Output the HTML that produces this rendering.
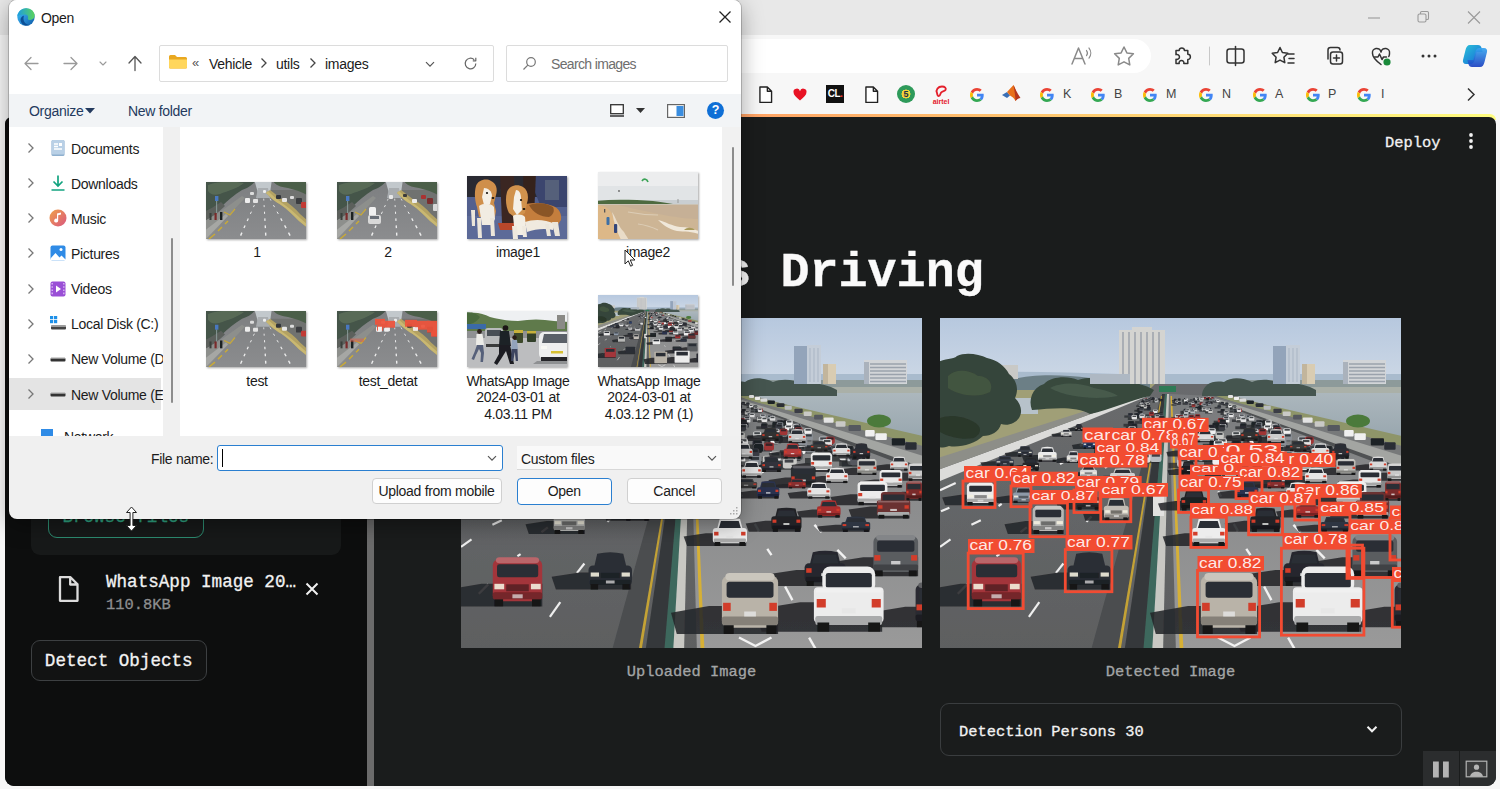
<!DOCTYPE html>
<html lang="en"><head><meta charset="utf-8"><title>Open</title><style>
*{box-sizing:border-box}
html,body{margin:0;padding:0}
body{width:1500px;height:789px;overflow:hidden;position:relative;background:#f7f7f7;font-family:"Liberation Sans",sans-serif}
.abs{position:absolute}
.mono{font-family:"Liberation Mono","DejaVu Sans Mono",monospace;-webkit-text-stroke:.3px currentColor}
svg{display:block;overflow:visible}

#tabstrip{left:0;top:0;width:1500px;height:35px;background:#e8e8e8}
#toolbar{left:0;top:35px;width:1500px;height:82px;background:#f7f7f7}
#addr{left:600px;top:39px;width:551px;height:34px;background:#fff;border-radius:17px}
.bk{font-size:12.5px;color:#444;top:87px}

#deco{left:4px;top:114px;width:1492px;height:6px;background:linear-gradient(90deg,#ff4b4b,#fffd80);border-radius:0 7px 0 0;clip-path:inset(0 0 0 8px)}
#app{left:4.5px;top:117px;width:1491px;height:669px;background:#1a1c1c;border-radius:7px 7px 9px 9px;overflow:hidden}
#side{left:0;top:0;width:362.500px;height:669px;background:#0d0e0e}
#divider{left:362.500px;top:0;width:6.500px;height:669px;background:#6b6b6b}
#upl{left:31px;top:380px;width:309.500px;height:174.500px;background:#171919;border-radius:9px}
#browse{left:48px;top:497px;width:155.500px;height:40.500px;border:1.500px solid #2c8c70;border-radius:9px;color:#2fa381;font-size:17.600px;line-height:38px;text-align:center}
.fname{left:106px;top:569.500px;font-size:17.600px;line-height:24px;color:#f2f2f2;white-space:pre}
.fsize{left:106px;top:595px;font-size:15.400px;line-height:20px;color:#8d8f90;white-space:pre}
#detect{left:31px;top:640px;width:175.500px;height:41px;border:1px solid #3d4042;border-radius:9px;background:#121313;color:#f2f2f2;font-size:17.600px;line-height:41px;text-align:center;white-space:pre}
#title{left:461px;top:244px;font-size:48.400px;font-weight:700;line-height:60px;color:#fafafa;white-space:pre}
.cap{top:662px;width:461px;text-align:center;font-size:15.400px;line-height:20px;color:#a3a5a6;white-space:pre}
#exp{left:940px;top:703px;width:461.500px;height:52.500px;border:1px solid #3a3d3f;border-radius:9px}
#exptxt{left:959px;top:721.500px;font-size:15.400px;line-height:20px;color:#f2f2f2;white-space:pre}
#deploy{left:1385px;top:132.500px;font-size:15.400px;line-height:20px;color:#f2f2f2}
.ctl{top:751px;height:35px;background:#2b2d2e}

#dlg{left:9px;top:0;width:732px;height:518.500px;background:#f0f0f0;border-radius:8px;overflow:hidden;box-shadow:0 0 0 1px rgba(0,0,0,.18),0 6px 22px rgba(0,0,0,.35)}
#dlg *{position:absolute}
#dlg{font-size:14px;letter-spacing:-.3px;color:#1b1b1b;line-height:16px}
#dtop{left:0;top:0;width:732px;height:94px;background:#fff}
#dbar{left:0;top:94px;width:732px;height:33px;background:#f2f4f6}
#dnav{left:0;top:127px;width:154px;height:308.500px;background:#fff;overflow:hidden}
#dfiles{left:171px;top:127px;width:542px;height:308.500px;background:#fff;overflow:hidden}
.box{background:#fff;border:1px solid #dcdcdc;border-radius:2px}
.t{white-space:pre;padding-top:1px}
.crumb{top:55px;color:#1b1b1b}
.sep{top:55px;color:#555;font-size:12px}
.navt{left:62px;white-space:pre;padding-top:1px}
.lab{width:130px;text-align:center;white-space:pre;line-height:16.300px;padding-top:1px}
.btn{height:26px;background:#fdfdfd;border:1px solid #d0d0d0;border-radius:4px;text-align:center;line-height:24.500px;white-space:pre}
.thumb{overflow:hidden;box-shadow:1px 1px 2px rgba(0,0,0,.35)}
</style></head><body>
<div id="tabstrip" class="abs"></div><div id="toolbar" class="abs"></div><div id="addr" class="abs"></div>
<svg class="abs" style="left:1360px;top:8px" width="130" height="20" viewBox="0 0 130 20" fill="none" stroke="#9a9a9a" stroke-width="1.1">
<path d="M8 10h12"/><rect x="58" y="6" width="8" height="8" rx="1.5"/><path d="M60.5 6v-1.2a1.3 1.3 0 0 1 1.3-1.3h5.4a1.3 1.3 0 0 1 1.3 1.3v5.4a1.3 1.3 0 0 1-1.3 1.3h-1.2"/><path d="M108 3.5l12 12M120 3.5l-12 12"/></svg>
<svg class="abs" style="left:1060px;top:40px" width="440" height="34" viewBox="1060 40 440 34" fill="none" stroke="#5a5a5a" stroke-width="1.5" stroke-linecap="round" stroke-linejoin="round">
<g stroke="#8a8a8a"><path d="M1072 64l6.500-16 6.500 16M1074.500 58.500h8"/><path d="M1086.500 50.500a4 4 0 0 1 0 5M1089 48a8 8 0 0 1 0 10" stroke-width="1.2"/></g>
<path stroke="#8a8a8a" d="M1124 47l2.900 5.900 6.500 0.900-4.700 4.600 1.100 6.500-5.800-3.100-5.800 3.100 1.100-6.500-4.700-4.600 6.500-0.900z"/>
<path stroke="#333" d="M1176 50.500h3.200a2.600 2.600 0 1 1 5.200 0h3.400v3.800a2.600 2.600 0 1 1 0 5.200v4h-4a2.400 2.400 0 1 0-4.600 0h-3.200v-4.300a2.500 2.500 0 1 0 0-4.600z"/>
<path stroke="#c8c8c8" stroke-width="1" d="M1209.500 47v18"/>
<g stroke="#333"><rect x="1227" y="49" width="17" height="14" rx="2.500"/><path d="M1235.500 46.500v19"/></g>
<g stroke="#333"><path d="M1280 47.500l2.400 5 5.400 0.800-3.900 3.900 0.900 5.500-4.800-2.600-4.800 2.600 0.900-5.500-3.900-3.900 5.400-0.800z"/><path d="M1288 54h6M1289 58.500h5M1288 63h6"/></g>
<g stroke="#333"><path d="M1328 59v-9a2.500 2.500 0 0 1 2.500-2.500h7a2.500 2.500 0 0 1 2.500 2.500"/><rect x="1330.500" y="52" width="12" height="12" rx="2.500"/><path d="M1336.500 55v6M1333.500 58h6"/></g>
<g stroke="#333"><path d="M1381 64.500c-6-4.500-8.500-7.500-8.500-11a4.300 4.300 0 0 1 8.500-1.500 4.300 4.300 0 0 1 8.500 1.500c0 1-.2 2-.7 3"/><path d="M1374.500 57h3.500l1.500-3 2.500 5.500 1.500-2.500h3"/></g>
<circle cx="1387" cy="62" r="3.600" fill="#1a8a3a" stroke="none"/>
<g fill="#333" stroke="none"><circle cx="1423" cy="56" r="1.500"/><circle cx="1429" cy="56" r="1.500"/><circle cx="1435" cy="56" r="1.500"/></g>
</svg>
<svg class="abs" style="left:1461px;top:42px" width="28" height="28" viewBox="0 0 28 28"><defs><linearGradient id="cp1" x1="0" y1="0" x2="1" y2="1"><stop offset="0" stop-color="#2bc4d8"/><stop offset="1" stop-color="#1565d8"/></linearGradient><linearGradient id="cp2" x1="0" y1="0" x2="0" y2="1"><stop offset="0" stop-color="#37a6f0"/><stop offset="1" stop-color="#1b3fc0"/></linearGradient></defs>
<path d="M9 3h8c2 0 3 1 3.600 3l1 4h-6l-2 8c-.6 2.500-2 4-4.500 4H5c-2.500 0-3.500-2-3-4l2.500-10C5.200 5 6.500 3 9 3z" fill="url(#cp1)"/>
<path d="M19 25h-8c-2 0-3-1-3.600-3l-1-4h6l2-8c.6-2.500 2-4 4.500-4H23c2.500 0 3.500 2 3 4l-2.500 10c-.7 3-2 5-4.500 5z" fill="url(#cp2)" opacity=".92"/></svg>
<svg class="abs" style="left:757.5px;top:86px" width="15.500" height="18" viewBox="0 0 14 17"><path d="M1.5 1h7l4 4v10.5h-11z M8.5 1v4h4" fill="#fff" stroke="#222" stroke-width="1.3" stroke-linejoin="round"/></svg><svg class="abs" style="left:863.5px;top:86px" width="15.500" height="18" viewBox="0 0 14 17"><path d="M1.5 1h7l4 4v10.5h-11z M8.5 1v4h4" fill="#fff" stroke="#222" stroke-width="1.3" stroke-linejoin="round"/></svg><svg class="abs" style="left:793px;top:88.500px" width="14" height="12" viewBox="0 0 16 14"><path d="M8 13.500C3 9.500 0.500 7 0.500 4.200A3.700 3.700 0 0 1 8 2.600a3.700 3.700 0 0 1 7.500 1.600C15.500 7 13 9.500 8 13.500z" fill="#e81224"/></svg><div class="abs" style="left:826px;top:85px;width:18px;height:18px;background:#111;color:#fff;font:700 10px/18px 'Liberation Sans',sans-serif;text-align:center;letter-spacing:-.5px">CL<span style="color:#e33">.</span></div><div class="abs" style="left:897px;top:85px;width:18px;height:18px;border-radius:9px;background:radial-gradient(circle,#f3d33b 0 35%,#2e9a5a 36% 100%);color:#234;font:700 9px/18px 'Liberation Sans',sans-serif;text-align:center">5</div><svg class="abs" style="left:931px;top:84px" width="20" height="21" viewBox="0 0 20 21"><path d="M6 9c-1.500-3 1-6.500 5-6.500 3 0 4.500 2 3.500 3.500-.8 1.200-2.800.8-4.200 2.300C9.200 9.500 9.500 11.500 8 12c-1 .3-1.600-.8-2-3z" fill="none" stroke="#e4202c" stroke-width="1.800"/><text x="10" y="19.500" font-family="Liberation Sans,sans-serif" font-size="7" font-weight="700" fill="#e4202c" text-anchor="middle">airtel</text></svg><svg class="abs" style="left:969.5px;top:87.5px" width="14" height="14" viewBox="0 0 48 48">
<path fill="#EA4335" d="M24 9.5c3.54 0 6.71 1.22 9.21 3.6l6.85-6.85C35.9 2.38 30.47 0 24 0 14.62 0 6.51 5.38 2.56 13.22l7.98 6.19C12.43 13.72 17.74 9.5 24 9.5z"/>
<path fill="#4285F4" d="M46.98 24.55c0-1.57-.15-3.09-.38-4.55H24v9.02h12.94c-.58 2.96-2.26 5.48-4.78 7.18l7.73 6c4.51-4.18 7.09-10.36 7.09-17.65z"/>
<path fill="#FBBC05" d="M10.53 28.59c-.48-1.45-.76-2.99-.76-4.59s.27-3.14.76-4.59l-7.98-6.19C.92 16.46 0 20.12 0 24c0 3.88.92 7.54 2.56 10.78l7.97-6.19z"/>
<path fill="#34A853" d="M24 48c6.48 0 11.93-2.13 15.89-5.81l-7.73-6c-2.15 1.45-4.92 2.3-8.16 2.3-6.26 0-11.57-4.22-13.47-9.91l-7.98 6.19C6.51 42.62 14.62 48 24 48z"/>
</svg><svg class="abs" style="left:1002px;top:85px" width="19" height="17" viewBox="0 0 19 17"><path d="M0 10l5-3 3 3.500L5 13z" fill="#3a6fb5"/><path d="M5 7L11.500 0c1.500 3 3 8 5 12l-3 4c-1-2-2.500-4-4-4.500L8 10.500z" fill="#e8701a"/><path d="M11.500 0c1.500 3 3.500 8 7 13-2 0-3.500 1.500-5 3 0-4-1-10-2-16z" fill="#b5361c"/></svg><svg class="abs" style="left:1039.5px;top:87.5px" width="14" height="14" viewBox="0 0 48 48">
<path fill="#EA4335" d="M24 9.5c3.54 0 6.71 1.22 9.21 3.6l6.85-6.85C35.9 2.38 30.47 0 24 0 14.62 0 6.51 5.38 2.56 13.22l7.98 6.19C12.43 13.72 17.74 9.5 24 9.5z"/>
<path fill="#4285F4" d="M46.98 24.55c0-1.57-.15-3.09-.38-4.55H24v9.02h12.94c-.58 2.96-2.26 5.48-4.78 7.18l7.73 6c4.51-4.18 7.09-10.36 7.09-17.65z"/>
<path fill="#FBBC05" d="M10.53 28.59c-.48-1.45-.76-2.99-.76-4.59s.27-3.14.76-4.59l-7.98-6.19C.92 16.46 0 20.12 0 24c0 3.88.92 7.54 2.56 10.78l7.97-6.19z"/>
<path fill="#34A853" d="M24 48c6.48 0 11.93-2.13 15.89-5.81l-7.73-6c-2.15 1.45-4.92 2.3-8.16 2.3-6.26 0-11.57-4.22-13.47-9.91l-7.98 6.19C6.51 42.62 14.62 48 24 48z"/>
</svg><div class="abs bk" style="left:1063px">K</div><svg class="abs" style="left:1090.5px;top:87.5px" width="14" height="14" viewBox="0 0 48 48">
<path fill="#EA4335" d="M24 9.5c3.54 0 6.71 1.22 9.21 3.6l6.85-6.85C35.9 2.38 30.47 0 24 0 14.62 0 6.51 5.38 2.56 13.22l7.98 6.19C12.43 13.72 17.74 9.5 24 9.5z"/>
<path fill="#4285F4" d="M46.98 24.55c0-1.57-.15-3.09-.38-4.55H24v9.02h12.94c-.58 2.96-2.26 5.48-4.78 7.18l7.73 6c4.51-4.18 7.09-10.36 7.09-17.65z"/>
<path fill="#FBBC05" d="M10.53 28.59c-.48-1.45-.76-2.99-.76-4.59s.27-3.14.76-4.59l-7.98-6.19C.92 16.46 0 20.12 0 24c0 3.88.92 7.54 2.56 10.78l7.97-6.19z"/>
<path fill="#34A853" d="M24 48c6.48 0 11.93-2.13 15.89-5.81l-7.73-6c-2.15 1.45-4.92 2.3-8.16 2.3-6.26 0-11.57-4.22-13.47-9.91l-7.98 6.19C6.51 42.62 14.62 48 24 48z"/>
</svg><div class="abs bk" style="left:1114px">B</div><svg class="abs" style="left:1142.5px;top:87.5px" width="14" height="14" viewBox="0 0 48 48">
<path fill="#EA4335" d="M24 9.5c3.54 0 6.71 1.22 9.21 3.6l6.85-6.85C35.9 2.38 30.47 0 24 0 14.62 0 6.51 5.38 2.56 13.22l7.98 6.19C12.43 13.72 17.74 9.5 24 9.5z"/>
<path fill="#4285F4" d="M46.98 24.55c0-1.57-.15-3.09-.38-4.55H24v9.02h12.94c-.58 2.96-2.26 5.48-4.78 7.18l7.73 6c4.51-4.18 7.09-10.36 7.09-17.65z"/>
<path fill="#FBBC05" d="M10.53 28.59c-.48-1.45-.76-2.99-.76-4.59s.27-3.14.76-4.59l-7.98-6.19C.92 16.46 0 20.12 0 24c0 3.88.92 7.54 2.56 10.78l7.97-6.19z"/>
<path fill="#34A853" d="M24 48c6.48 0 11.93-2.13 15.89-5.81l-7.73-6c-2.15 1.45-4.92 2.3-8.16 2.3-6.26 0-11.57-4.22-13.47-9.91l-7.98 6.19C6.51 42.62 14.62 48 24 48z"/>
</svg><div class="abs bk" style="left:1166px">M</div><svg class="abs" style="left:1198.5px;top:87.5px" width="14" height="14" viewBox="0 0 48 48">
<path fill="#EA4335" d="M24 9.5c3.54 0 6.71 1.22 9.21 3.6l6.85-6.85C35.9 2.38 30.47 0 24 0 14.62 0 6.51 5.38 2.56 13.22l7.98 6.19C12.43 13.72 17.74 9.5 24 9.5z"/>
<path fill="#4285F4" d="M46.98 24.55c0-1.57-.15-3.09-.38-4.55H24v9.02h12.94c-.58 2.96-2.26 5.48-4.78 7.18l7.73 6c4.51-4.18 7.09-10.36 7.09-17.65z"/>
<path fill="#FBBC05" d="M10.53 28.59c-.48-1.45-.76-2.99-.76-4.59s.27-3.14.76-4.59l-7.98-6.19C.92 16.46 0 20.12 0 24c0 3.88.92 7.54 2.56 10.78l7.97-6.19z"/>
<path fill="#34A853" d="M24 48c6.48 0 11.93-2.13 15.89-5.81l-7.73-6c-2.15 1.45-4.92 2.3-8.16 2.3-6.26 0-11.57-4.22-13.47-9.91l-7.98 6.19C6.51 42.62 14.62 48 24 48z"/>
</svg><div class="abs bk" style="left:1222px">N</div><svg class="abs" style="left:1252.5px;top:87.5px" width="14" height="14" viewBox="0 0 48 48">
<path fill="#EA4335" d="M24 9.5c3.54 0 6.71 1.22 9.21 3.6l6.85-6.85C35.9 2.38 30.47 0 24 0 14.62 0 6.51 5.38 2.56 13.22l7.98 6.19C12.43 13.72 17.74 9.5 24 9.5z"/>
<path fill="#4285F4" d="M46.98 24.55c0-1.57-.15-3.09-.38-4.55H24v9.02h12.94c-.58 2.96-2.26 5.48-4.78 7.18l7.73 6c4.51-4.18 7.09-10.36 7.09-17.65z"/>
<path fill="#FBBC05" d="M10.53 28.59c-.48-1.45-.76-2.99-.76-4.59s.27-3.14.76-4.59l-7.98-6.19C.92 16.46 0 20.12 0 24c0 3.88.92 7.54 2.56 10.78l7.97-6.19z"/>
<path fill="#34A853" d="M24 48c6.48 0 11.93-2.13 15.89-5.81l-7.73-6c-2.15 1.45-4.92 2.3-8.16 2.3-6.26 0-11.57-4.22-13.47-9.91l-7.98 6.19C6.51 42.62 14.62 48 24 48z"/>
</svg><div class="abs bk" style="left:1275px">A</div><svg class="abs" style="left:1305.5px;top:87.5px" width="14" height="14" viewBox="0 0 48 48">
<path fill="#EA4335" d="M24 9.5c3.54 0 6.71 1.22 9.21 3.6l6.85-6.85C35.9 2.38 30.47 0 24 0 14.62 0 6.51 5.38 2.56 13.22l7.98 6.19C12.43 13.72 17.74 9.5 24 9.5z"/>
<path fill="#4285F4" d="M46.98 24.55c0-1.57-.15-3.09-.38-4.55H24v9.02h12.94c-.58 2.96-2.26 5.48-4.78 7.18l7.73 6c4.51-4.18 7.09-10.36 7.09-17.65z"/>
<path fill="#FBBC05" d="M10.53 28.59c-.48-1.45-.76-2.99-.76-4.59s.27-3.14.76-4.59l-7.98-6.19C.92 16.46 0 20.12 0 24c0 3.88.92 7.54 2.56 10.78l7.97-6.19z"/>
<path fill="#34A853" d="M24 48c6.48 0 11.93-2.13 15.89-5.81l-7.73-6c-2.15 1.45-4.92 2.3-8.16 2.3-6.26 0-11.57-4.22-13.47-9.91l-7.98 6.19C6.51 42.62 14.62 48 24 48z"/>
</svg><div class="abs bk" style="left:1328px">P</div><svg class="abs" style="left:1356.5px;top:87.5px" width="14" height="14" viewBox="0 0 48 48">
<path fill="#EA4335" d="M24 9.5c3.54 0 6.71 1.22 9.21 3.6l6.85-6.85C35.9 2.38 30.47 0 24 0 14.62 0 6.51 5.38 2.56 13.22l7.98 6.19C12.43 13.72 17.74 9.5 24 9.5z"/>
<path fill="#4285F4" d="M46.98 24.55c0-1.57-.15-3.09-.38-4.55H24v9.02h12.94c-.58 2.96-2.26 5.48-4.78 7.18l7.73 6c4.51-4.18 7.09-10.36 7.09-17.65z"/>
<path fill="#FBBC05" d="M10.53 28.59c-.48-1.45-.76-2.99-.76-4.59s.27-3.14.76-4.59l-7.98-6.19C.92 16.46 0 20.12 0 24c0 3.88.92 7.54 2.56 10.78l7.97-6.19z"/>
<path fill="#34A853" d="M24 48c6.48 0 11.93-2.13 15.89-5.81l-7.73-6c-2.15 1.45-4.92 2.3-8.16 2.3-6.26 0-11.57-4.22-13.47-9.91l-7.98 6.19C6.51 42.62 14.62 48 24 48z"/>
</svg><div class="abs bk" style="left:1381px">I</div><svg class="abs" style="left:1466px;top:87px" width="10" height="15" viewBox="0 0 10 15"><path d="M2 1.500l6 6-6 6" fill="none" stroke="#333" stroke-width="1.500"/></svg>
<div id="deco" class="abs"></div>
<div id="app" class="abs"><div id="side" class="abs"></div><div id="divider" class="abs"></div></div>
<div id="upl" class="abs"></div><div id="browse" class="abs mono">Browse files</div>
<svg class="abs" style="left:57px;top:574.500px" width="23" height="28" viewBox="0 0 23 28"><path d="M3 2.200h10.500l7 7V25.800H3z M13.200 2.500v7h7" fill="none" stroke="#dcdcdc" stroke-width="2.300" stroke-linejoin="round"/></svg>
<div class="abs mono fname">WhatsApp Image 20…</div><div class="abs mono fsize">110.8KB</div>
<svg class="abs" style="left:305px;top:582px" width="14" height="14" viewBox="0 0 14 14"><path d="M1.500 1.500l11 11M12.500 1.500l-11 11" stroke="#f0f0f0" stroke-width="2" fill="none"/></svg>
<div id="detect" class="abs mono">Detect Objects</div>
<div id="title" class="abs mono">Autonomous Driving</div>
<div id="deploy" class="abs mono">Deploy</div><svg class="abs" style="left:1468px;top:132px" width="6" height="18" viewBox="0 0 6 18" fill="#f2f2f2"><circle cx="3" cy="3" r="1.900"/><circle cx="3" cy="9" r="1.900"/><circle cx="3" cy="15" r="1.900"/></svg>
<div class="abs" style="left:461px;top:318px;width:461px;height:330px;overflow:hidden"><svg width="461" height="330" viewBox="0 0 461 330" preserveAspectRatio="none"><defs><linearGradient id="h1s" x1="0" y1="0" x2="0" y2="1"><stop offset="0" stop-color="#b5c7de"/><stop offset="1" stop-color="#d4dde8"/></linearGradient><linearGradient id="h1r" x1="0" y1="0" x2="0" y2="1"><stop offset="0" stop-color="#696b6d"/><stop offset="1" stop-color="#5d5f60"/></linearGradient><linearGradient id="h1q" x1="0" y1="0" x2="0" y2="1"><stop offset="0" stop-color="#77797b"/><stop offset=".4" stop-color="#8b8c8d"/><stop offset="1" stop-color="#9a9a9a"/></linearGradient><linearGradient id="h1w" x1="0" y1="0" x2="0" y2="1"><stop offset="0" stop-color="#adb8be"/><stop offset="1" stop-color="#97a5ad"/></linearGradient><filter id="h1b" x="-2%" y="-2%" width="104%" height="104%"><feGaussianBlur stdDeviation="0.7"/></filter><filter id="h1b2" x="-5%" y="-5%" width="110%" height="110%"><feGaussianBlur stdDeviation="2.2"/></filter></defs><g filter="url(#h1b)"><rect x="-5" y="-5" width="471" height="90" fill="url(#h1s)"/><path d="M-5 56C60 52 120 54 180 56H466V70H-5z" fill="#a9bbcd"/><rect x="-5" y="66" width="471" height="270" fill="url(#h1r)"/><path d="M229 76L272 78L466 150V336H236z" fill="url(#h1q)"/><path d="M290 72H466V124L300 80z" fill="url(#h1w)"/><path d="M280 76L466 119V142L276 78z" fill="#8e9569"/><path d="M272 78L466 129V152L270 79z" fill="#77797a"/><path d="M268 78L466 139V153L268 80z" fill="#a3a5a2"/><path d="M268 80L466 151V156L268 81z" fill="#4f5152"/><path d="M-5 66H215L205 76L-5 152z" fill="#a09f77"/><path d="M70 80h28v16H72z" fill="#b7c2ca"/><path d="M-5 153L205 76L208 78L-5 165z" fill="#dcdcda"/><path d="M-5 141L205 74L205 76L-5 153z" fill="#8d8e88"/><path d="M70 62c20-6 50-6 80-2 20-2 40 0 60 4v8H70z" fill="#6c7f86"/><path d="M300 62h166v10h-166z" fill="#8d9a9a"/><path d="M330 69h136v6h-136z" fill="#aab0a8"/><path d="M262 76c2-10 10-14 22-12 8-6 20-4 28 0 10-4 22-2 30 2 10-2 24 0 34 6v6H262z" fill="#44554f"/><path d="M92 92c-4-10 0-22 12-26 8-8 24-8 34-4 12-4 26-2 36 2 14-2 30 2 40 8l-4 6c-20 4-40 14-60 18-14-8-36-6-58-4z" fill="#37483d"/><path d="M110 70c10-6 30-6 44 0 10 2 18 4 24 8-20 4-50 2-68-8z" fill="#465a4b"/><rect x="56" y="47" width="22" height="14" fill="#c9c9c6"/><path d="M-5 46c8-6 18-4 22-8 8-4 22-2 30 2 10 2 18 8 22 16 8 6 10 16 6 24 6 6 8 14 4 20-4 6-12 8-18 6-2 8-10 12-18 12-8 8-24 12-34 10-6 2-10 2-14 0z" fill="#36453a"/><path d="M8 58c8-8 22-6 30 0 10 0 16 8 12 16-12 6-30 4-42-4z" fill="#43553f"/><path d="M0 100c10-4 24-2 34 4 8 4 8 12 0 16-10 2-24 0-34-6z" fill="#2a372c"/><rect x="179" y="12" width="46" height="54" fill="#d4d4d1"/><path d="M183 14v52M189 14v52M195 14v52M201 14v52M207 14v52M213 14v52M219 14v52" stroke="#a6abb2" stroke-width="1.800"/><rect x="192" y="9" width="20" height="5" fill="#d4d4d1"/><rect x="333" y="28" width="27" height="38" fill="#93a4ba"/><rect x="346" y="27" width="14" height="39" fill="#c4cdd8"/><path d="M349 30v34M353 30v34M357 30v34" stroke="#a9b5c4" stroke-width="1"/><rect x="362" y="46" width="13" height="20" fill="#d9ccb2"/><rect x="362" y="46" width="5" height="20" fill="#c2b59c"/><rect x="403" y="42" width="43" height="24" fill="#d2d5d8"/><rect x="403" y="44" width="5" height="22" fill="#aab2bc"/><path d="M409 46h36M409 49.500h36M409 53h36M409 56.500h36M409 60h36M409 63.500h36" stroke="#9aa2ac" stroke-width="1.500"/><rect x="150" y="56" width="40" height="10" fill="#aeb8c3"/><path d="M221 78L150 336H180L221.500 78z" fill="#4b4d4f"/><path d="M222 76L184 336H204L225 76z" fill="#36383a"/><path d="M225 76L203 336H213L227 76z" fill="#3d675d"/><path d="M227 76L212 336H223L229 76z" fill="#c8c8c3"/><path d="M230.500 78L239.800 336H243.600L232 78z" fill="#d6b036"/><path d="M221 78L177 336H180L222 78z" fill="#c4a236"/><rect x="219" y="68" width="17" height="6" fill="#2f7a55"/><rect x="213" y="178" width="11" height="20" fill="#e2e2e0"/><path d="M0.0 172.3L15.7 165.0" stroke="#eeeeee" stroke-width="2.200"/><path d="M1.0 193.2L9.4 189.7" stroke="#eeeeee" stroke-width="2.200"/><path d="M31.4 206.8L40.8 202.2" stroke="#eeeeee" stroke-width="2.200"/><path d="M0.0 228.8L10.5 221.4" stroke="#eeeeee" stroke-width="2.200"/><path d="M17.8 275.8L27.2 266.4" stroke="#eeeeee" stroke-width="2.200"/><path d="M56.4 238.2L59.6 236.1" stroke="#eeeeee" stroke-width="2.200"/><path d="M80.5 214.1L86.8 209.3" stroke="#eeeeee" stroke-width="2.200"/><path d="M116.0 254.9L123.4 245.5" stroke="#eeeeee" stroke-width="2.200"/><path d="M88.9 298.8L99.3 284.2" stroke="#eeeeee" stroke-width="2.200"/><path d="M58.5 188.0L61.7 185.9" stroke="#eeeeee" stroke-width="2.200"/><path d="M146.4 203.7L151.6 198.5" stroke="#eeeeee" stroke-width="2.200"/><path d="M62 152L67 149" stroke="#eeeeee" stroke-width="2.200"/><path d="M95 150L99 147.5" stroke="#eeeeee" stroke-width="2.200"/><path d="M120 146L124 143.5" stroke="#eeeeee" stroke-width="2.200"/><path d="M150 140L153 138" stroke="#eeeeee" stroke-width="2.200"/><path d="M30 160L37 156.5" stroke="#eeeeee" stroke-width="2.200"/><path d="M165 150L168 147.5" stroke="#eeeeee" stroke-width="2.200"/><path d="M188 120L190 118" stroke="#eeeeee" stroke-width="2.200"/><path d="M140 128L143 126" stroke="#eeeeee" stroke-width="2.200"/><path d="M278.1 173.4L281.2 178.6" stroke="#f2f2f2" stroke-width="2.400"/><path d="M293.8 205.8L297.9 213.1" stroke="#f2f2f2" stroke-width="2.400"/><path d="M353.4 206.8L360.7 214.1" stroke="#f2f2f2" stroke-width="2.400"/><path d="M306.3 230.9L310.5 237.1" stroke="#f2f2f2" stroke-width="2.400"/><path d="M376.4 231.9L384.7 240.3" stroke="#f2f2f2" stroke-width="2.400"/><path d="M324.1 268.5L331.4 282.1" stroke="#f2f2f2" stroke-width="2.400"/><path d="M348.1 319.7L355.4 332.3" stroke="#f2f2f2" stroke-width="2.400"/><path d="M263 150L264.5 155" stroke="#f2f2f2" stroke-width="2.400"/><path d="M300 150L302 155" stroke="#f2f2f2" stroke-width="2.400"/><path d="M340 158L343 164" stroke="#f2f2f2" stroke-width="2.400"/><path d="M252 130L253 134" stroke="#f2f2f2" stroke-width="2.400"/><path d="M280 128L281.5 132" stroke="#f2f2f2" stroke-width="2.400"/><path d="M278 319.500l16.500 8.500 16-8.500" fill="none" stroke="#f2f2f2" stroke-width="2.400"/><rect x="269.5" y="80.1" width="3.8" height="1.1" fill="#26282b" opacity=".75"/><rect x="271.2" y="79" width="2.5" height="2" rx="0.5" fill="#a03434"/><rect x="271.6" y="79.2" width="1.8" height="0.6" fill="#1d2025" opacity=".8"/><rect x="265.8" y="80.1" width="3.8" height="1.1" fill="#26282b" opacity=".75"/><rect x="267.5" y="79" width="2.5" height="2" rx="0.5" fill="#a03434"/><rect x="267.9" y="79.2" width="1.8" height="0.6" fill="#1d2025" opacity=".8"/><rect x="208.2" y="80.2" width="3.8" height="1.1" fill="#26282b" opacity=".75"/><rect x="209.9" y="79" width="2.5" height="2" rx="0.5" fill="#55585e"/><rect x="210.3" y="79.2" width="1.8" height="0.6" fill="#1d2025" opacity=".8"/><rect x="262" y="80.2" width="3.8" height="1.1" fill="#26282b" opacity=".75"/><rect x="263.7" y="79" width="2.5" height="2" rx="0.5" fill="#a03434"/><rect x="264.1" y="79.2" width="1.8" height="0.6" fill="#1d2025" opacity=".8"/><rect x="209.9" y="80.3" width="3.8" height="1.1" fill="#26282b" opacity=".75"/><rect x="211.7" y="79.2" width="2.5" height="2" rx="0.5" fill="#b8bcc0"/><rect x="212.1" y="79.4" width="1.8" height="0.6" fill="#1d2025" opacity=".8"/><rect x="258.2" y="80.5" width="3.8" height="1.1" fill="#26282b" opacity=".75"/><rect x="260" y="79.3" width="2.5" height="2" rx="0.5" fill="#2a2c30"/><rect x="260.3" y="79.5" width="1.8" height="0.6" fill="#1d2025" opacity=".8"/><rect x="254" y="80.5" width="3.8" height="1.1" fill="#26282b" opacity=".75"/><rect x="255.8" y="79.3" width="2.6" height="2" rx="0.5" fill="#1f2226"/><rect x="256.1" y="79.5" width="1.8" height="0.6" fill="#1d2025" opacity=".8"/><rect x="212.6" y="80.6" width="3.8" height="1.2" fill="#26282b" opacity=".75"/><rect x="214.4" y="79.4" width="2.6" height="2.1" rx="0.5" fill="#c9c9c6"/><rect x="214.8" y="79.6" width="1.8" height="0.6" fill="#1d2025" opacity=".8"/><rect x="259.5" y="80.7" width="3.9" height="1.2" fill="#26282b" opacity=".75"/><rect x="261.3" y="79.5" width="2.6" height="2.1" rx="0.5" fill="#f0f0f0"/><rect x="261.7" y="79.7" width="1.8" height="0.6" fill="#1d2025" opacity=".8"/><rect x="214" y="80.7" width="3.9" height="1.2" fill="#26282b" opacity=".75"/><rect x="215.8" y="79.5" width="2.6" height="2.1" rx="0.5" fill="#8a8f96"/><rect x="216.2" y="79.7" width="1.8" height="0.6" fill="#1d2025" opacity=".8"/><rect x="205.7" y="80.7" width="3.9" height="1.2" fill="#26282b" opacity=".75"/><rect x="207.5" y="79.5" width="2.6" height="2.1" rx="0.5" fill="#c9c9c6"/><rect x="207.9" y="79.7" width="1.8" height="0.6" fill="#1d2025" opacity=".8"/><rect x="253.2" y="80.7" width="3.9" height="1.2" fill="#26282b" opacity=".75"/><rect x="255" y="79.6" width="2.6" height="2.1" rx="0.5" fill="#f0f0f0"/><rect x="255.4" y="79.8" width="1.8" height="0.6" fill="#1d2025" opacity=".8"/><rect x="209.9" y="80.8" width="3.9" height="1.2" fill="#26282b" opacity=".75"/><rect x="211.7" y="79.6" width="2.6" height="2.1" rx="0.5" fill="#2a2c30"/><rect x="212.1" y="79.8" width="1.8" height="0.6" fill="#1d2025" opacity=".8"/><rect x="210.2" y="80.8" width="3.9" height="1.2" fill="#26282b" opacity=".75"/><rect x="212" y="79.6" width="2.6" height="2.1" rx="0.5" fill="#2b2e36"/><rect x="212.4" y="79.8" width="1.8" height="0.6" fill="#1d2025" opacity=".8"/><rect x="257.1" y="80.8" width="3.9" height="1.2" fill="#26282b" opacity=".75"/><rect x="258.9" y="79.6" width="2.6" height="2.1" rx="0.5" fill="#e4e4e4"/><rect x="259.3" y="79.8" width="1.8" height="0.7" fill="#1d2025" opacity=".8"/><rect x="206.3" y="80.9" width="3.9" height="1.2" fill="#26282b" opacity=".75"/><rect x="208.2" y="79.7" width="2.6" height="2.1" rx="0.5" fill="#55585e"/><rect x="208.6" y="80" width="1.8" height="0.7" fill="#1d2025" opacity=".8"/><rect x="264.4" y="81.3" width="4" height="1.2" fill="#26282b" opacity=".75"/><rect x="266.3" y="80.1" width="2.7" height="2.1" rx="0.5" fill="#1f2226"/><rect x="266.7" y="80.3" width="1.9" height="0.7" fill="#1d2025" opacity=".8"/><rect x="242.3" y="81.3" width="4" height="1.2" fill="#26282b" opacity=".75"/><rect x="244.2" y="80.1" width="2.7" height="2.1" rx="0.5" fill="#1f2226"/><rect x="244.6" y="80.3" width="1.9" height="0.7" fill="#1d2025" opacity=".8"/><rect x="202.1" y="81.3" width="4" height="1.2" fill="#26282b" opacity=".75"/><rect x="204" y="80.1" width="2.7" height="2.1" rx="0.5" fill="#a03434"/><rect x="204.4" y="80.3" width="1.9" height="0.7" fill="#1d2025" opacity=".8"/><rect x="270.4" y="81.5" width="4.1" height="1.2" fill="#26282b" opacity=".75"/><rect x="272.3" y="80.2" width="2.7" height="2.2" rx="0.5" fill="#8a8f96"/><rect x="272.7" y="80.5" width="1.9" height="0.7" fill="#1d2025" opacity=".8"/><rect x="243.3" y="81.6" width="4.1" height="1.2" fill="#26282b" opacity=".75"/><rect x="245.2" y="80.3" width="2.7" height="2.2" rx="0.5" fill="#f0f0f0"/><rect x="245.6" y="80.6" width="1.9" height="0.7" fill="#1d2025" opacity=".8"/><rect x="215.9" y="81.6" width="4.1" height="1.2" fill="#26282b" opacity=".75"/><rect x="217.8" y="80.4" width="2.7" height="2.2" rx="0.5" fill="#2a2c30"/><rect x="218.2" y="80.6" width="1.9" height="0.7" fill="#1d2025" opacity=".8"/><rect x="236" y="81.7" width="4.1" height="1.2" fill="#26282b" opacity=".75"/><rect x="237.9" y="80.4" width="2.7" height="2.2" rx="0.5" fill="#2a2c30"/><rect x="238.3" y="80.6" width="1.9" height="0.7" fill="#1d2025" opacity=".8"/><rect x="250.7" y="81.7" width="4.1" height="1.2" fill="#26282b" opacity=".75"/><rect x="252.6" y="80.4" width="2.7" height="2.2" rx="0.5" fill="#3a3d44"/><rect x="253" y="80.7" width="1.9" height="0.7" fill="#1d2025" opacity=".8"/><rect x="201.7" y="81.9" width="4.1" height="1.2" fill="#26282b" opacity=".75"/><rect x="203.7" y="80.6" width="2.8" height="2.2" rx="0.6" fill="#b8bcc0"/><rect x="204.1" y="80.8" width="1.9" height="0.7" fill="#1d2025" opacity=".8"/><rect x="231.9" y="82" width="4.2" height="1.3" fill="#26282b" opacity=".75"/><rect x="233.8" y="80.8" width="2.8" height="2.2" rx="0.6" fill="#2a2c30"/><rect x="234.2" y="81" width="1.9" height="0.7" fill="#1d2025" opacity=".8"/><rect x="212.9" y="82.1" width="4.2" height="1.3" fill="#26282b" opacity=".75"/><rect x="214.8" y="80.8" width="2.8" height="2.2" rx="0.6" fill="#c9c9c6"/><rect x="215.3" y="81" width="2" height="0.7" fill="#1d2025" opacity=".8"/><rect x="218.2" y="82.2" width="4.2" height="1.3" fill="#26282b" opacity=".75"/><rect x="220.2" y="80.9" width="2.8" height="2.2" rx="0.6" fill="#2a2c30"/><rect x="220.6" y="81.1" width="2" height="0.7" fill="#1d2025" opacity=".8"/><rect x="242" y="82.4" width="4.3" height="1.3" fill="#26282b" opacity=".75"/><rect x="243.9" y="81.1" width="2.8" height="2.3" rx="0.6" fill="#f0f0f0"/><rect x="244.4" y="81.3" width="2" height="0.7" fill="#1d2025" opacity=".8"/><rect x="203" y="82.4" width="4.3" height="1.3" fill="#26282b" opacity=".75"/><rect x="204.9" y="81.1" width="2.8" height="2.3" rx="0.6" fill="#55585e"/><rect x="205.4" y="81.4" width="2" height="0.7" fill="#1d2025" opacity=".8"/><rect x="257.7" y="82.5" width="4.3" height="1.3" fill="#26282b" opacity=".75"/><rect x="259.7" y="81.2" width="2.9" height="2.3" rx="0.6" fill="#dcdcdc"/><rect x="260.1" y="81.5" width="2" height="0.7" fill="#1d2025" opacity=".8"/><rect x="247.5" y="82.6" width="4.3" height="1.3" fill="#26282b" opacity=".75"/><rect x="249.5" y="81.3" width="2.9" height="2.3" rx="0.6" fill="#55585e"/><rect x="249.9" y="81.6" width="2" height="0.7" fill="#1d2025" opacity=".8"/><rect x="267.4" y="82.7" width="4.3" height="1.3" fill="#26282b" opacity=".75"/><rect x="269.4" y="81.4" width="2.9" height="2.3" rx="0.6" fill="#8a8f96"/><rect x="269.9" y="81.6" width="2" height="0.7" fill="#1d2025" opacity=".8"/><rect x="213.5" y="82.7" width="4.3" height="1.3" fill="#26282b" opacity=".75"/><rect x="215.6" y="81.4" width="2.9" height="2.3" rx="0.6" fill="#c9c9c6"/><rect x="216" y="81.6" width="2" height="0.7" fill="#1d2025" opacity=".8"/><rect x="272.4" y="83.2" width="4.4" height="1.3" fill="#26282b" opacity=".75"/><rect x="274.5" y="81.8" width="3" height="2.4" rx="0.6" fill="#8a8f96"/><rect x="274.9" y="82.1" width="2.1" height="0.7" fill="#1d2025" opacity=".8"/><rect x="274.4" y="83.2" width="4.4" height="1.3" fill="#26282b" opacity=".75"/><rect x="276.4" y="81.8" width="3" height="2.4" rx="0.6" fill="#f0f0f0"/><rect x="276.9" y="82.1" width="2.1" height="0.7" fill="#1d2025" opacity=".8"/><rect x="205.8" y="83.2" width="4.4" height="1.3" fill="#26282b" opacity=".75"/><rect x="207.8" y="81.9" width="3" height="2.4" rx="0.6" fill="#55585e"/><rect x="208.3" y="82.1" width="2.1" height="0.7" fill="#1d2025" opacity=".8"/><rect x="212.5" y="83.4" width="4.5" height="1.3" fill="#26282b" opacity=".75"/><rect x="214.6" y="82" width="3" height="2.4" rx="0.6" fill="#b8bcc0"/><rect x="215" y="82.3" width="2.1" height="0.7" fill="#1d2025" opacity=".8"/><rect x="232.1" y="83.4" width="4.5" height="1.3" fill="#26282b" opacity=".75"/><rect x="234.2" y="82" width="3" height="2.4" rx="0.6" fill="#2b2e36"/><rect x="234.6" y="82.3" width="2.1" height="0.7" fill="#1d2025" opacity=".8"/><rect x="233.1" y="84" width="4.6" height="1.4" fill="#26282b" opacity=".75"/><rect x="235.3" y="82.6" width="3.1" height="2.5" rx="0.6" fill="#c9c9c6"/><rect x="235.7" y="82.9" width="2.2" height="0.8" fill="#1d2025" opacity=".8"/><rect x="242.6" y="84.2" width="4.7" height="1.4" fill="#26282b" opacity=".75"/><rect x="244.8" y="82.8" width="3.1" height="2.5" rx="0.6" fill="#dcdcdc"/><rect x="245.2" y="83" width="2.2" height="0.8" fill="#1d2025" opacity=".8"/><rect x="251.9" y="84.2" width="4.7" height="1.4" fill="#26282b" opacity=".75"/><rect x="254.1" y="82.8" width="3.1" height="2.5" rx="0.6" fill="#1f2226"/><rect x="254.6" y="83" width="2.2" height="0.8" fill="#1d2025" opacity=".8"/><rect x="198.9" y="84.3" width="4.7" height="1.4" fill="#26282b" opacity=".75"/><rect x="201.1" y="82.9" width="3.1" height="2.5" rx="0.6" fill="#2b2e36"/><rect x="201.6" y="83.2" width="2.2" height="0.8" fill="#1d2025" opacity=".8"/><rect x="267.1" y="84.8" width="4.8" height="1.4" fill="#26282b" opacity=".75"/><rect x="269.4" y="83.4" width="3.2" height="2.6" rx="0.6" fill="#2a2c30"/><rect x="269.9" y="83.6" width="2.2" height="0.8" fill="#1d2025" opacity=".8"/><rect x="263.2" y="85.1" width="4.9" height="1.5" fill="#26282b" opacity=".75"/><rect x="265.4" y="83.6" width="3.2" height="2.6" rx="0.6" fill="#3a3d44"/><rect x="265.9" y="83.9" width="2.3" height="0.8" fill="#1d2025" opacity=".8"/><rect x="242.6" y="85.3" width="4.9" height="1.5" fill="#26282b" opacity=".75"/><rect x="244.9" y="83.8" width="3.3" height="2.6" rx="0.7" fill="#3a3d44"/><rect x="245.3" y="84.1" width="2.3" height="0.8" fill="#1d2025" opacity=".8"/><rect x="278.4" y="85.3" width="4.9" height="1.5" fill="#26282b" opacity=".75"/><rect x="280.7" y="83.8" width="3.3" height="2.6" rx="0.7" fill="#3a3d44"/><rect x="281.2" y="84.1" width="2.3" height="0.8" fill="#1d2025" opacity=".8"/><rect x="248.8" y="85.4" width="4.9" height="1.5" fill="#26282b" opacity=".75"/><rect x="251.1" y="83.9" width="3.3" height="2.6" rx="0.7" fill="#b8bcc0"/><rect x="251.6" y="84.2" width="2.3" height="0.8" fill="#1d2025" opacity=".8"/><rect x="235.5" y="85.5" width="5" height="1.5" fill="#26282b" opacity=".75"/><rect x="237.8" y="84" width="3.3" height="2.6" rx="0.7" fill="#3a3d44"/><rect x="238.3" y="84.2" width="2.3" height="0.8" fill="#1d2025" opacity=".8"/><rect x="257.2" y="85.8" width="5" height="1.5" fill="#26282b" opacity=".75"/><rect x="259.5" y="84.3" width="3.4" height="2.7" rx="0.7" fill="#a03434"/><rect x="260.1" y="84.5" width="2.3" height="0.8" fill="#1d2025" opacity=".8"/><rect x="198.3" y="85.8" width="5" height="1.5" fill="#26282b" opacity=".75"/><rect x="200.7" y="84.3" width="3.4" height="2.7" rx="0.7" fill="#3a3d44"/><rect x="201.2" y="84.6" width="2.3" height="0.8" fill="#1d2025" opacity=".8"/><rect x="197.6" y="85.9" width="5.1" height="1.5" fill="#26282b" opacity=".75"/><rect x="199.9" y="84.4" width="3.4" height="2.7" rx="0.7" fill="#dcdcdc"/><rect x="200.4" y="84.7" width="2.4" height="0.8" fill="#1d2025" opacity=".8"/><rect x="282.7" y="86" width="5.1" height="1.5" fill="#26282b" opacity=".75"/><rect x="285.1" y="84.5" width="3.4" height="2.7" rx="0.7" fill="#3a3d44"/><rect x="285.6" y="84.7" width="2.4" height="0.8" fill="#1d2025" opacity=".8"/><rect x="202.9" y="86" width="5.1" height="1.5" fill="#26282b" opacity=".75"/><rect x="205.3" y="84.5" width="3.4" height="2.7" rx="0.7" fill="#c9c9c6"/><rect x="205.8" y="84.8" width="2.4" height="0.8" fill="#1d2025" opacity=".8"/><rect x="231.3" y="86.2" width="5.1" height="1.5" fill="#26282b" opacity=".75"/><rect x="233.7" y="84.6" width="3.4" height="2.7" rx="0.7" fill="#55585e"/><rect x="234.2" y="84.9" width="2.4" height="0.9" fill="#1d2025" opacity=".8"/><rect x="203.6" y="86.3" width="5.1" height="1.5" fill="#26282b" opacity=".75"/><rect x="206" y="84.7" width="3.4" height="2.7" rx="0.7" fill="#c9c9c6"/><rect x="206.5" y="85" width="2.4" height="0.9" fill="#1d2025" opacity=".8"/><rect x="265.4" y="86.3" width="5.1" height="1.5" fill="#26282b" opacity=".75"/><rect x="267.8" y="84.8" width="3.4" height="2.7" rx="0.7" fill="#8a8f96"/><rect x="268.3" y="85" width="2.4" height="0.9" fill="#1d2025" opacity=".8"/><rect x="203.9" y="86.4" width="5.2" height="1.5" fill="#26282b" opacity=".75"/><rect x="206.3" y="84.8" width="3.4" height="2.8" rx="0.7" fill="#c9c9c6"/><rect x="206.8" y="85.1" width="2.4" height="0.9" fill="#1d2025" opacity=".8"/><rect x="259" y="86.9" width="5.3" height="1.6" fill="#26282b" opacity=".75"/><rect x="261.4" y="85.3" width="3.5" height="2.8" rx="0.7" fill="#c9c9c6"/><rect x="262" y="85.6" width="2.5" height="0.9" fill="#1d2025" opacity=".8"/><rect x="260.2" y="87.2" width="5.4" height="1.6" fill="#26282b" opacity=".75"/><rect x="262.7" y="85.6" width="3.6" height="2.9" rx="0.7" fill="#8a8f96"/><rect x="263.3" y="85.9" width="2.5" height="0.9" fill="#1d2025" opacity=".8"/><rect x="199.7" y="87.2" width="5.4" height="1.6" fill="#26282b" opacity=".75"/><rect x="202.2" y="85.6" width="3.6" height="2.9" rx="0.7" fill="#3a3d44"/><rect x="202.7" y="85.9" width="2.5" height="0.9" fill="#1d2025" opacity=".8"/><rect x="196.2" y="87.3" width="5.4" height="1.6" fill="#26282b" opacity=".75"/><rect x="198.7" y="85.7" width="3.6" height="2.9" rx="0.7" fill="#b8bcc0"/><rect x="199.2" y="86" width="2.5" height="0.9" fill="#1d2025" opacity=".8"/><rect x="198.2" y="87.4" width="5.4" height="1.6" fill="#26282b" opacity=".75"/><rect x="200.7" y="85.8" width="3.6" height="2.9" rx="0.7" fill="#c9c9c6"/><rect x="201.3" y="86.1" width="2.5" height="0.9" fill="#1d2025" opacity=".8"/><rect x="249.2" y="87.8" width="5.5" height="1.6" fill="#26282b" opacity=".75"/><rect x="251.7" y="86.2" width="3.7" height="2.9" rx="0.7" fill="#a03434"/><rect x="252.3" y="86.5" width="2.6" height="0.9" fill="#1d2025" opacity=".8"/><rect x="203.8" y="88.3" width="5.6" height="1.7" fill="#26282b" opacity=".75"/><rect x="206.4" y="86.6" width="3.7" height="3" rx="0.7" fill="#2a2c30"/><rect x="206.9" y="86.9" width="2.6" height="0.9" fill="#1d2025" opacity=".8"/><rect x="285.6" y="88.4" width="5.6" height="1.7" fill="#26282b" opacity=".75"/><rect x="288.2" y="86.7" width="3.7" height="3" rx="0.7" fill="#f0f0f0"/><rect x="288.8" y="87" width="2.6" height="0.9" fill="#1d2025" opacity=".8"/><rect x="274.6" y="88.9" width="5.7" height="1.7" fill="#26282b" opacity=".75"/><rect x="277.3" y="87.2" width="3.8" height="3.1" rx="0.8" fill="#3a3d44"/><rect x="277.8" y="87.5" width="2.7" height="1" fill="#1d2025" opacity=".8"/><rect x="200.5" y="89.1" width="5.8" height="1.7" fill="#26282b" opacity=".75"/><rect x="203.2" y="87.4" width="3.9" height="3.1" rx="0.8" fill="#c9c9c6"/><rect x="203.7" y="87.7" width="2.7" height="1" fill="#1d2025" opacity=".8"/><rect x="289.8" y="89.3" width="5.8" height="1.7" fill="#26282b" opacity=".75"/><rect x="292.5" y="87.6" width="3.9" height="3.1" rx="0.8" fill="#1f2226"/><rect x="293.1" y="87.9" width="2.7" height="1" fill="#1d2025" opacity=".8"/><rect x="254.8" y="90.1" width="6" height="1.8" fill="#26282b" opacity=".75"/><rect x="257.6" y="88.3" width="4" height="3.2" rx="0.8" fill="#1f2226"/><rect x="258.2" y="88.6" width="2.8" height="1" fill="#1d2025" opacity=".8"/><rect x="290" y="90.3" width="6.1" height="1.8" fill="#26282b" opacity=".75"/><rect x="292.8" y="88.5" width="4" height="3.2" rx="0.8" fill="#c9c9c6"/><rect x="293.4" y="88.8" width="2.8" height="1" fill="#1d2025" opacity=".8"/><rect x="252.3" y="90.5" width="6.1" height="1.8" fill="#26282b" opacity=".75"/><rect x="255.2" y="88.7" width="4.1" height="3.3" rx="0.8" fill="#2b2e36"/><rect x="255.8" y="89" width="2.8" height="1" fill="#1d2025" opacity=".8"/><rect x="196.8" y="90.5" width="6.1" height="1.8" fill="#26282b" opacity=".75"/><rect x="199.6" y="88.7" width="4.1" height="3.3" rx="0.8" fill="#2a2c30"/><rect x="200.2" y="89" width="2.8" height="1" fill="#1d2025" opacity=".8"/><rect x="203.9" y="90.8" width="6.2" height="1.8" fill="#26282b" opacity=".75"/><rect x="206.7" y="89" width="4.1" height="3.3" rx="0.8" fill="#2b2e36"/><rect x="207.3" y="89.3" width="2.9" height="1" fill="#1d2025" opacity=".8"/><rect x="264.3" y="91.5" width="6.3" height="1.9" fill="#26282b" opacity=".75"/><rect x="267.2" y="89.6" width="4.2" height="3.4" rx="0.8" fill="#55585e"/><rect x="267.9" y="90" width="3" height="1.1" fill="#1d2025" opacity=".8"/><rect x="259.2" y="91.8" width="6.4" height="1.9" fill="#26282b" opacity=".75"/><rect x="262.2" y="89.9" width="4.3" height="3.4" rx="0.9" fill="#e4e4e4"/><rect x="262.8" y="90.2" width="3" height="1.1" fill="#1d2025" opacity=".8"/><rect x="194.3" y="91.8" width="6.4" height="1.9" fill="#26282b" opacity=".75"/><rect x="197.3" y="89.9" width="4.3" height="3.4" rx="0.9" fill="#2a2c30"/><rect x="197.9" y="90.2" width="3" height="1.1" fill="#1d2025" opacity=".8"/><rect x="262.6" y="91.9" width="6.4" height="1.9" fill="#26282b" opacity=".75"/><rect x="265.6" y="90" width="4.3" height="3.4" rx="0.9" fill="#e4e4e4"/><rect x="266.2" y="90.4" width="3" height="1.1" fill="#1d2025" opacity=".8"/><rect x="196.5" y="92" width="6.4" height="1.9" fill="#26282b" opacity=".75"/><rect x="199.5" y="90.1" width="4.3" height="3.4" rx="0.9" fill="#55585e"/><rect x="200.1" y="90.4" width="3" height="1.1" fill="#1d2025" opacity=".8"/><rect x="249.9" y="92.1" width="6.5" height="1.9" fill="#26282b" opacity=".75"/><rect x="253" y="90.2" width="4.3" height="3.4" rx="0.9" fill="#c9c9c6"/><rect x="253.6" y="90.5" width="3" height="1.1" fill="#1d2025" opacity=".8"/><rect x="289.8" y="92.4" width="6.5" height="2" fill="#26282b" opacity=".75"/><rect x="292.9" y="90.4" width="4.3" height="3.5" rx="0.9" fill="#55585e"/><rect x="293.5" y="90.8" width="3" height="1.1" fill="#1d2025" opacity=".8"/><rect x="294.7" y="92.4" width="6.5" height="2" fill="#26282b" opacity=".75"/><rect x="297.7" y="90.5" width="4.3" height="3.5" rx="0.9" fill="#a03434"/><rect x="298.4" y="90.8" width="3" height="1.1" fill="#1d2025" opacity=".8"/><rect x="293.8" y="92.4" width="6.5" height="2" fill="#26282b" opacity=".75"/><rect x="296.8" y="90.5" width="4.4" height="3.5" rx="0.9" fill="#e4e4e4"/><rect x="297.5" y="90.8" width="3" height="1.1" fill="#1d2025" opacity=".8"/><rect x="240.4" y="92.8" width="6.6" height="2" fill="#26282b" opacity=".75"/><rect x="243.5" y="90.8" width="4.4" height="3.5" rx="0.9" fill="#3a3d44"/><rect x="244.2" y="91.1" width="3.1" height="1.1" fill="#1d2025" opacity=".8"/><rect x="242.4" y="92.8" width="6.6" height="2" fill="#26282b" opacity=".75"/><rect x="245.5" y="90.8" width="4.4" height="3.5" rx="0.9" fill="#c9c9c6"/><rect x="246.2" y="91.2" width="3.1" height="1.1" fill="#1d2025" opacity=".8"/><rect x="277.4" y="93" width="6.7" height="2" fill="#26282b" opacity=".75"/><rect x="280.5" y="91" width="4.4" height="3.5" rx="0.9" fill="#2a2c30"/><rect x="281.2" y="91.4" width="3.1" height="1.1" fill="#1d2025" opacity=".8"/><rect x="210" y="93.4" width="6.7" height="2" fill="#26282b" opacity=".75"/><rect x="213.1" y="91.4" width="4.5" height="3.6" rx="0.9" fill="#e4e4e4"/><rect x="213.8" y="91.7" width="3.1" height="1.1" fill="#1d2025" opacity=".8"/><rect x="265.1" y="93.5" width="6.8" height="2" fill="#26282b" opacity=".75"/><rect x="268.2" y="91.5" width="4.5" height="3.6" rx="0.9" fill="#c9c9c6"/><rect x="268.9" y="91.8" width="3.2" height="1.1" fill="#1d2025" opacity=".8"/><rect x="247.1" y="94" width="6.9" height="2.1" fill="#26282b" opacity=".75"/><rect x="250.3" y="91.9" width="4.6" height="3.7" rx="0.9" fill="#b8bcc0"/><rect x="251" y="92.3" width="3.2" height="1.1" fill="#1d2025" opacity=".8"/><rect x="240.6" y="94.5" width="7" height="2.1" fill="#26282b" opacity=".75"/><rect x="243.9" y="92.4" width="4.7" height="3.7" rx="0.9" fill="#b8bcc0"/><rect x="244.6" y="92.7" width="3.3" height="1.2" fill="#1d2025" opacity=".8"/><rect x="280.5" y="94.9" width="7.1" height="2.1" fill="#26282b" opacity=".75"/><rect x="283.8" y="92.8" width="4.7" height="3.8" rx="0.9" fill="#c9c9c6"/><rect x="284.5" y="93.1" width="3.3" height="1.2" fill="#1d2025" opacity=".8"/><rect x="194.2" y="95.1" width="7.1" height="2.1" fill="#26282b" opacity=".75"/><rect x="197.6" y="93" width="4.8" height="3.8" rx="1" fill="#2a2c30"/><rect x="198.3" y="93.4" width="3.3" height="1.2" fill="#1d2025" opacity=".8"/><rect x="205.6" y="96.4" width="7.4" height="2.2" fill="#26282b" opacity=".75"/><rect x="209" y="94.1" width="4.9" height="4" rx="1" fill="#a03434"/><rect x="209.8" y="94.5" width="3.5" height="1.2" fill="#1d2025" opacity=".8"/><rect x="214.3" y="96.7" width="7.5" height="2.2" fill="#26282b" opacity=".75"/><rect x="217.8" y="94.5" width="5" height="4" rx="1" fill="#1f2226"/><rect x="218.6" y="94.9" width="3.5" height="1.2" fill="#1d2025" opacity=".8"/><rect x="282.6" y="97.3" width="7.6" height="2.3" fill="#26282b" opacity=".75"/><rect x="286.1" y="95" width="5.1" height="4.1" rx="1" fill="#8a8f96"/><rect x="286.9" y="95.4" width="3.6" height="1.3" fill="#1d2025" opacity=".8"/><rect x="214.9" y="97.3" width="7.6" height="2.3" fill="#26282b" opacity=".75"/><rect x="218.5" y="95" width="5.1" height="4.1" rx="1" fill="#55585e"/><rect x="219.2" y="95.4" width="3.6" height="1.3" fill="#1d2025" opacity=".8"/><rect x="194.5" y="97.3" width="7.6" height="2.3" fill="#26282b" opacity=".75"/><rect x="198.1" y="95" width="5.1" height="4.1" rx="1" fill="#b8bcc0"/><rect x="198.9" y="95.5" width="3.6" height="1.3" fill="#1d2025" opacity=".8"/><rect x="184.3" y="97.4" width="7.6" height="2.3" fill="#26282b" opacity=".75"/><rect x="187.9" y="95.1" width="5.1" height="4.1" rx="1" fill="#3a3d44"/><rect x="188.7" y="95.5" width="3.6" height="1.3" fill="#1d2025" opacity=".8"/><rect x="191.9" y="97.5" width="7.7" height="2.3" fill="#26282b" opacity=".75"/><rect x="195.4" y="95.2" width="5.1" height="4.1" rx="1" fill="#2b2e36"/><rect x="196.2" y="95.6" width="3.6" height="1.3" fill="#1d2025" opacity=".8"/><rect x="284.9" y="97.6" width="7.7" height="2.3" fill="#26282b" opacity=".75"/><rect x="288.5" y="95.3" width="5.1" height="4.1" rx="1" fill="#e4e4e4"/><rect x="289.2" y="95.7" width="3.6" height="1.3" fill="#1d2025" opacity=".8"/><rect x="211.1" y="97.6" width="7.7" height="2.3" fill="#26282b" opacity=".75"/><rect x="214.7" y="95.3" width="5.1" height="4.1" rx="1" fill="#2a2c30"/><rect x="215.4" y="95.7" width="3.6" height="1.3" fill="#1d2025" opacity=".8"/><rect x="192" y="97.8" width="7.7" height="2.3" fill="#26282b" opacity=".75"/><rect x="195.6" y="95.5" width="5.2" height="4.1" rx="1" fill="#2b2e36"/><rect x="196.3" y="95.9" width="3.6" height="1.3" fill="#1d2025" opacity=".8"/><rect x="239.4" y="98.1" width="7.8" height="2.3" fill="#26282b" opacity=".75"/><rect x="243" y="95.7" width="5.2" height="4.2" rx="1" fill="#b8bcc0"/><rect x="243.8" y="96.1" width="3.6" height="1.3" fill="#1d2025" opacity=".8"/><rect x="195.8" y="98.4" width="7.9" height="2.4" fill="#26282b" opacity=".75"/><rect x="199.4" y="96.1" width="5.3" height="4.2" rx="1.1" fill="#dcdcdc"/><rect x="200.2" y="96.5" width="3.7" height="1.3" fill="#1d2025" opacity=".8"/><rect x="295.5" y="98.5" width="7.9" height="2.4" fill="#26282b" opacity=".75"/><rect x="299.2" y="96.1" width="5.3" height="4.2" rx="1.1" fill="#b8bcc0"/><rect x="300" y="96.5" width="3.7" height="1.3" fill="#1d2025" opacity=".8"/><rect x="251.3" y="98.7" width="7.9" height="2.4" fill="#26282b" opacity=".75"/><rect x="255" y="96.3" width="5.3" height="4.2" rx="1.1" fill="#a03434"/><rect x="255.8" y="96.8" width="3.7" height="1.3" fill="#1d2025" opacity=".8"/><rect x="211" y="98.9" width="8" height="2.4" fill="#26282b" opacity=".75"/><rect x="214.7" y="96.5" width="5.3" height="4.3" rx="1.1" fill="#c9c9c6"/><rect x="215.5" y="97" width="3.7" height="1.3" fill="#1d2025" opacity=".8"/><rect x="231.3" y="98.9" width="8" height="2.4" fill="#26282b" opacity=".75"/><rect x="235" y="96.5" width="5.3" height="4.3" rx="1.1" fill="#e4e4e4"/><rect x="235.8" y="97" width="3.7" height="1.3" fill="#1d2025" opacity=".8"/><rect x="234" y="99.5" width="8.1" height="2.4" fill="#26282b" opacity=".75"/><rect x="237.8" y="97" width="5.4" height="4.3" rx="1.1" fill="#a03434"/><rect x="238.6" y="97.5" width="3.8" height="1.4" fill="#1d2025" opacity=".8"/><rect x="244.9" y="99.5" width="8.1" height="2.4" fill="#26282b" opacity=".75"/><rect x="248.6" y="97.1" width="5.4" height="4.3" rx="1.1" fill="#a03434"/><rect x="249.5" y="97.5" width="3.8" height="1.4" fill="#1d2025" opacity=".8"/><rect x="302.5" y="99.5" width="8.1" height="2.4" fill="#26282b" opacity=".75"/><rect x="306.3" y="97.1" width="5.4" height="4.3" rx="1.1" fill="#8a8f96"/><rect x="307.1" y="97.5" width="3.8" height="1.4" fill="#1d2025" opacity=".8"/><rect x="187.8" y="99.6" width="8.1" height="2.4" fill="#26282b" opacity=".75"/><rect x="191.6" y="97.1" width="5.4" height="4.3" rx="1.1" fill="#e4e4e4"/><rect x="192.4" y="97.6" width="3.8" height="1.4" fill="#1d2025" opacity=".8"/><rect x="201.9" y="100.5" width="8.3" height="2.5" fill="#26282b" opacity=".75"/><rect x="205.8" y="98" width="5.6" height="4.5" rx="1.1" fill="#c9c9c6"/><rect x="206.6" y="98.4" width="3.9" height="1.4" fill="#1d2025" opacity=".8"/><rect x="215.2" y="100.6" width="8.4" height="2.5" fill="#26282b" opacity=".75"/><rect x="219.1" y="98.1" width="5.6" height="4.5" rx="1.1" fill="#3a3d44"/><rect x="219.9" y="98.5" width="3.9" height="1.4" fill="#1d2025" opacity=".8"/><rect x="235.6" y="100.7" width="8.4" height="2.5" fill="#26282b" opacity=".75"/><rect x="239.5" y="98.2" width="5.6" height="4.5" rx="1.1" fill="#e4e4e4"/><rect x="240.4" y="98.6" width="3.9" height="1.4" fill="#1d2025" opacity=".8"/><rect x="279.4" y="100.8" width="8.4" height="2.5" fill="#26282b" opacity=".75"/><rect x="283.3" y="98.3" width="5.6" height="4.5" rx="1.1" fill="#b8bcc0"/><rect x="284.1" y="98.7" width="3.9" height="1.4" fill="#1d2025" opacity=".8"/><rect x="304.8" y="100.8" width="8.4" height="2.5" fill="#26282b" opacity=".75"/><rect x="308.7" y="98.3" width="5.6" height="4.5" rx="1.1" fill="#dcdcdc"/><rect x="309.5" y="98.8" width="3.9" height="1.4" fill="#1d2025" opacity=".8"/><rect x="214.7" y="100.8" width="8.4" height="2.5" fill="#26282b" opacity=".75"/><rect x="218.7" y="98.3" width="5.6" height="4.5" rx="1.1" fill="#2b2e36"/><rect x="219.5" y="98.8" width="3.9" height="1.4" fill="#1d2025" opacity=".8"/><rect x="291.9" y="101.4" width="8.5" height="2.6" fill="#26282b" opacity=".75"/><rect x="295.9" y="98.8" width="5.7" height="4.6" rx="1.1" fill="#c9c9c6"/><rect x="296.7" y="99.3" width="4" height="1.4" fill="#1d2025" opacity=".8"/><rect x="296.5" y="102" width="8.7" height="2.6" fill="#26282b" opacity=".75"/><rect x="300.5" y="99.4" width="5.8" height="4.6" rx="1.2" fill="#e4e4e4"/><rect x="301.4" y="99.9" width="4.1" height="1.4" fill="#1d2025" opacity=".8"/><rect x="211.2" y="102.3" width="8.8" height="2.6" fill="#26282b" opacity=".75"/><rect x="215.3" y="99.7" width="5.8" height="4.7" rx="1.2" fill="#a03434"/><rect x="216.2" y="100.1" width="4.1" height="1.5" fill="#1d2025" opacity=".8"/><rect x="279.4" y="102.5" width="8.8" height="2.6" fill="#26282b" opacity=".75"/><rect x="283.5" y="99.9" width="5.9" height="4.7" rx="1.2" fill="#f0f0f0"/><rect x="284.3" y="100.4" width="4.1" height="1.5" fill="#1d2025" opacity=".8"/><rect x="203.2" y="102.6" width="8.8" height="2.6" fill="#26282b" opacity=".75"/><rect x="207.3" y="100" width="5.9" height="4.7" rx="1.2" fill="#2b2e36"/><rect x="208.2" y="100.4" width="4.1" height="1.5" fill="#1d2025" opacity=".8"/><rect x="273.7" y="102.7" width="8.8" height="2.6" fill="#26282b" opacity=".75"/><rect x="277.8" y="100" width="5.9" height="4.7" rx="1.2" fill="#a03434"/><rect x="278.7" y="100.5" width="4.1" height="1.5" fill="#1d2025" opacity=".8"/><rect x="239.7" y="102.9" width="8.9" height="2.7" fill="#26282b" opacity=".75"/><rect x="243.9" y="100.2" width="5.9" height="4.7" rx="1.2" fill="#8a8f96"/><rect x="244.8" y="100.7" width="4.1" height="1.5" fill="#1d2025" opacity=".8"/><rect x="201.9" y="103" width="8.9" height="2.7" fill="#26282b" opacity=".75"/><rect x="206" y="100.3" width="5.9" height="4.7" rx="1.2" fill="#b8bcc0"/><rect x="206.9" y="100.8" width="4.2" height="1.5" fill="#1d2025" opacity=".8"/><rect x="195.1" y="103.1" width="8.9" height="2.7" fill="#26282b" opacity=".75"/><rect x="199.3" y="100.4" width="6" height="4.8" rx="1.2" fill="#3a3d44"/><rect x="200.2" y="100.9" width="4.2" height="1.5" fill="#1d2025" opacity=".8"/><rect x="275.5" y="104.2" width="9.2" height="2.8" fill="#26282b" opacity=".75"/><rect x="279.8" y="101.4" width="6.1" height="4.9" rx="1.2" fill="#2a2c30"/><rect x="280.7" y="101.9" width="4.3" height="1.5" fill="#1d2025" opacity=".8"/><rect x="214" y="104.4" width="9.2" height="2.8" fill="#26282b" opacity=".75"/><rect x="218.3" y="101.6" width="6.1" height="4.9" rx="1.2" fill="#c9c9c6"/><rect x="219.2" y="102.1" width="4.3" height="1.5" fill="#1d2025" opacity=".8"/><rect x="321" y="104.4" width="9.2" height="2.8" fill="#26282b" opacity=".75"/><rect x="325.3" y="101.7" width="6.2" height="4.9" rx="1.2" fill="#e4e4e4"/><rect x="326.3" y="102.2" width="4.3" height="1.5" fill="#1d2025" opacity=".8"/><rect x="311.4" y="104.6" width="9.3" height="2.8" fill="#26282b" opacity=".75"/><rect x="315.8" y="101.8" width="6.2" height="4.9" rx="1.2" fill="#55585e"/><rect x="316.7" y="102.3" width="4.3" height="1.5" fill="#1d2025" opacity=".8"/><rect x="318.1" y="105.1" width="9.4" height="2.8" fill="#26282b" opacity=".75"/><rect x="322.5" y="102.2" width="6.2" height="5" rx="1.2" fill="#1f2226"/><rect x="323.4" y="102.7" width="4.4" height="1.6" fill="#1d2025" opacity=".8"/><rect x="232.1" y="105.1" width="9.4" height="2.8" fill="#26282b" opacity=".75"/><rect x="236.5" y="102.3" width="6.3" height="5" rx="1.3" fill="#55585e"/><rect x="237.4" y="102.8" width="4.4" height="1.6" fill="#1d2025" opacity=".8"/><rect x="314.5" y="105.2" width="9.4" height="2.8" fill="#26282b" opacity=".75"/><rect x="318.9" y="102.4" width="6.3" height="5" rx="1.3" fill="#2a2c30"/><rect x="319.9" y="102.9" width="4.4" height="1.6" fill="#1d2025" opacity=".8"/><rect x="320.7" y="105.2" width="9.4" height="2.8" fill="#26282b" opacity=".75"/><rect x="325.1" y="102.4" width="6.3" height="5" rx="1.3" fill="#f0f0f0"/><rect x="326.1" y="102.9" width="4.4" height="1.6" fill="#1d2025" opacity=".8"/><rect x="183.5" y="105.8" width="9.5" height="2.9" fill="#26282b" opacity=".75"/><rect x="187.9" y="102.9" width="6.4" height="5.1" rx="1.3" fill="#2a2c30"/><rect x="188.9" y="103.4" width="4.4" height="1.6" fill="#1d2025" opacity=".8"/><rect x="234.2" y="106.3" width="9.7" height="2.9" fill="#26282b" opacity=".75"/><rect x="238.7" y="103.4" width="6.4" height="5.1" rx="1.3" fill="#f0f0f0"/><rect x="239.7" y="103.9" width="4.5" height="1.6" fill="#1d2025" opacity=".8"/><rect x="247.9" y="106.3" width="9.7" height="2.9" fill="#26282b" opacity=".75"/><rect x="252.4" y="103.4" width="6.4" height="5.2" rx="1.3" fill="#2b2e36"/><rect x="253.4" y="103.9" width="4.5" height="1.6" fill="#1d2025" opacity=".8"/><rect x="306.9" y="106.7" width="9.7" height="2.9" fill="#26282b" opacity=".75"/><rect x="311.5" y="103.7" width="6.5" height="5.2" rx="1.3" fill="#1f2226"/><rect x="312.4" y="104.3" width="4.5" height="1.6" fill="#1d2025" opacity=".8"/><rect x="311.1" y="107.2" width="9.9" height="3" fill="#26282b" opacity=".75"/><rect x="315.7" y="104.2" width="6.6" height="5.3" rx="1.3" fill="#8a8f96"/><rect x="316.7" y="104.8" width="4.6" height="1.6" fill="#1d2025" opacity=".8"/><rect x="276.3" y="107.7" width="10" height="3" fill="#26282b" opacity=".75"/><rect x="281" y="104.7" width="6.6" height="5.3" rx="1.3" fill="#2b2e36"/><rect x="282" y="105.2" width="4.6" height="1.7" fill="#1d2025" opacity=".8"/><rect x="267.7" y="107.7" width="10" height="3" fill="#26282b" opacity=".75"/><rect x="272.4" y="104.7" width="6.7" height="5.3" rx="1.3" fill="#1f2226"/><rect x="273.4" y="105.3" width="4.7" height="1.7" fill="#1d2025" opacity=".8"/><rect x="295.3" y="108.3" width="10.1" height="3" fill="#26282b" opacity=".75"/><rect x="300" y="105.3" width="6.7" height="5.4" rx="1.3" fill="#2a2c30"/><rect x="301" y="105.8" width="4.7" height="1.7" fill="#1d2025" opacity=".8"/><rect x="185.8" y="108.4" width="10.1" height="3" fill="#26282b" opacity=".75"/><rect x="190.5" y="105.4" width="6.8" height="5.4" rx="1.4" fill="#2b2e36"/><rect x="191.6" y="105.9" width="4.7" height="1.7" fill="#1d2025" opacity=".8"/><rect x="328.7" y="108.6" width="10.2" height="3" fill="#26282b" opacity=".75"/><rect x="333.5" y="105.5" width="6.8" height="5.4" rx="1.4" fill="#8a8f96"/><rect x="334.5" y="106" width="4.7" height="1.7" fill="#1d2025" opacity=".8"/><rect x="274.8" y="108.9" width="10.2" height="3.1" fill="#26282b" opacity=".75"/><rect x="279.5" y="105.9" width="6.8" height="5.5" rx="1.4" fill="#f0f0f0"/><rect x="280.6" y="106.4" width="4.8" height="1.7" fill="#1d2025" opacity=".8"/><rect x="205.4" y="108.9" width="10.3" height="3.1" fill="#26282b" opacity=".75"/><rect x="210.2" y="105.9" width="6.8" height="5.5" rx="1.4" fill="#dcdcdc"/><rect x="211.2" y="106.4" width="4.8" height="1.7" fill="#1d2025" opacity=".8"/><rect x="309.7" y="109.4" width="10.3" height="3.1" fill="#26282b" opacity=".75"/><rect x="314.5" y="106.3" width="6.9" height="5.5" rx="1.4" fill="#3a3d44"/><rect x="315.6" y="106.8" width="4.8" height="1.7" fill="#1d2025" opacity=".8"/><rect x="326.6" y="109.7" width="10.4" height="3.1" fill="#26282b" opacity=".75"/><rect x="331.5" y="106.5" width="6.9" height="5.6" rx="1.4" fill="#f0f0f0"/><rect x="332.5" y="107.1" width="4.9" height="1.7" fill="#1d2025" opacity=".8"/><rect x="241.9" y="109.8" width="10.4" height="3.1" fill="#26282b" opacity=".75"/><rect x="246.8" y="106.6" width="7" height="5.6" rx="1.4" fill="#3a3d44"/><rect x="247.8" y="107.2" width="4.9" height="1.7" fill="#1d2025" opacity=".8"/><rect x="263.5" y="109.8" width="10.4" height="3.1" fill="#26282b" opacity=".75"/><rect x="268.4" y="106.7" width="7" height="5.6" rx="1.4" fill="#2b2e36"/><rect x="269.4" y="107.2" width="4.9" height="1.7" fill="#1d2025" opacity=".8"/><rect x="273.7" y="110" width="10.5" height="3.1" fill="#26282b" opacity=".75"/><rect x="278.6" y="106.8" width="7" height="5.6" rx="1.4" fill="#3a3d44"/><rect x="279.6" y="107.4" width="4.9" height="1.7" fill="#1d2025" opacity=".8"/><rect x="319.2" y="110.1" width="10.5" height="3.2" fill="#26282b" opacity=".75"/><rect x="324.1" y="106.9" width="7" height="5.6" rx="1.4" fill="#f0f0f0"/><rect x="325.1" y="107.5" width="4.9" height="1.8" fill="#1d2025" opacity=".8"/><rect x="229.9" y="110.3" width="10.6" height="3.2" fill="#26282b" opacity=".75"/><rect x="234.9" y="107.2" width="7" height="5.6" rx="1.4" fill="#e4e4e4"/><rect x="235.9" y="107.7" width="4.9" height="1.8" fill="#1d2025" opacity=".8"/><rect x="328.1" y="110.4" width="10.6" height="3.2" fill="#26282b" opacity=".75"/><rect x="333.1" y="107.3" width="7.1" height="5.6" rx="1.4" fill="#3a3d44"/><rect x="334.1" y="107.8" width="4.9" height="1.8" fill="#1d2025" opacity=".8"/><rect x="183.4" y="111.4" width="10.8" height="3.2" fill="#26282b" opacity=".75"/><rect x="188.5" y="108.2" width="7.2" height="5.8" rx="1.4" fill="#dcdcdc"/><rect x="189.5" y="108.7" width="5" height="1.8" fill="#1d2025" opacity=".8"/><rect x="257.1" y="111.8" width="10.9" height="3.3" fill="#26282b" opacity=".75"/><rect x="262.2" y="108.6" width="7.3" height="5.8" rx="1.5" fill="#b8bcc0"/><rect x="263.3" y="109.2" width="5.1" height="1.8" fill="#1d2025" opacity=".8"/><rect x="328.8" y="112.5" width="11" height="3.3" fill="#26282b" opacity=".75"/><rect x="334" y="109.2" width="7.4" height="5.9" rx="1.5" fill="#a03434"/><rect x="335.1" y="109.7" width="5.2" height="1.8" fill="#1d2025" opacity=".8"/><rect x="263" y="113.3" width="11.2" height="3.4" fill="#26282b" opacity=".75"/><rect x="268.2" y="109.9" width="7.5" height="6" rx="1.5" fill="#f0f0f0"/><rect x="269.4" y="110.5" width="5.2" height="1.9" fill="#1d2025" opacity=".8"/><rect x="338.1" y="113.6" width="11.3" height="3.4" fill="#26282b" opacity=".75"/><rect x="343.3" y="110.2" width="7.5" height="6" rx="1.5" fill="#f0f0f0"/><rect x="344.5" y="110.8" width="5.3" height="1.9" fill="#1d2025" opacity=".8"/><rect x="305.6" y="114.1" width="11.4" height="3.4" fill="#26282b" opacity=".75"/><rect x="310.9" y="110.7" width="7.6" height="6.1" rx="1.5" fill="#e4e4e4"/><rect x="312.1" y="111.3" width="5.3" height="1.9" fill="#1d2025" opacity=".8"/><rect x="313.5" y="114.2" width="11.4" height="3.4" fill="#26282b" opacity=".75"/><rect x="318.8" y="110.8" width="7.6" height="6.1" rx="1.5" fill="#a03434"/><rect x="320" y="111.4" width="5.3" height="1.9" fill="#1d2025" opacity=".8"/><rect x="179.9" y="116.5" width="12" height="3.6" fill="#26282b" opacity=".75"/><rect x="185.4" y="112.9" width="8" height="6.4" rx="1.6" fill="#2b2e36"/><rect x="186.6" y="113.5" width="5.6" height="2" fill="#1d2025" opacity=".8"/><rect x="233.9" y="116.5" width="12" height="3.6" fill="#26282b" opacity=".75"/><rect x="239.5" y="112.9" width="8" height="6.4" rx="1.6" fill="#c9c9c6"/><rect x="240.7" y="113.6" width="5.6" height="2" fill="#1d2025" opacity=".8"/><rect x="328.6" y="117" width="12.1" height="3.6" fill="#26282b" opacity=".75"/><rect x="334.2" y="113.4" width="8" height="6.4" rx="1.6" fill="#f0f0f0"/><rect x="335.4" y="114" width="5.6" height="2" fill="#1d2025" opacity=".8"/><rect x="286.5" y="117.2" width="12.1" height="3.6" fill="#26282b" opacity=".75"/><rect x="292.1" y="113.5" width="8.1" height="6.5" rx="1.6" fill="#dcdcdc"/><rect x="293.3" y="114.2" width="5.6" height="2" fill="#1d2025" opacity=".8"/><rect x="325.6" y="117.3" width="12.1" height="3.6" fill="#26282b" opacity=".75"/><rect x="331.2" y="113.6" width="8.1" height="6.5" rx="1.6" fill="#f0f0f0"/><rect x="332.4" y="114.3" width="5.7" height="2" fill="#1d2025" opacity=".8"/><rect x="269.8" y="117.9" width="12.3" height="3.7" fill="#26282b" opacity=".75"/><rect x="275.6" y="114.2" width="8.2" height="6.5" rx="1.6" fill="#c9c9c6"/><rect x="276.8" y="114.9" width="5.7" height="2" fill="#1d2025" opacity=".8"/><rect x="241.1" y="117.9" width="12.3" height="3.7" fill="#26282b" opacity=".75"/><rect x="246.8" y="114.2" width="8.2" height="6.5" rx="1.6" fill="#e4e4e4"/><rect x="248" y="114.9" width="5.7" height="2" fill="#1d2025" opacity=".8"/><rect x="181.6" y="119.4" width="12.6" height="3.8" fill="#26282b" opacity=".75"/><rect x="187.5" y="115.6" width="8.4" height="6.7" rx="1.7" fill="#f0f0f0"/><rect x="188.8" y="116.3" width="5.9" height="2.1" fill="#1d2025" opacity=".8"/><rect x="337.7" y="119.5" width="12.6" height="3.8" fill="#26282b" opacity=".75"/><rect x="343.5" y="115.7" width="8.4" height="6.7" rx="1.7" fill="#8a8f96"/><rect x="344.8" y="116.4" width="5.9" height="2.1" fill="#1d2025" opacity=".8"/><rect x="245.8" y="120.1" width="12.8" height="3.8" fill="#26282b" opacity=".75"/><rect x="251.7" y="116.3" width="8.5" height="6.8" rx="1.7" fill="#f0f0f0"/><rect x="253" y="116.9" width="6" height="2.1" fill="#1d2025" opacity=".8"/><rect x="184.3" y="120.9" width="12.9" height="3.9" fill="#26282b" opacity=".75"/><rect x="190.3" y="117" width="8.6" height="6.9" rx="1.7" fill="#2a2c30"/><rect x="191.6" y="117.7" width="6" height="2.2" fill="#1d2025" opacity=".8"/><rect x="307.1" y="121.5" width="13.1" height="3.9" fill="#26282b" opacity=".75"/><rect x="313.2" y="117.5" width="8.7" height="7" rx="1.7" fill="#2a2c30"/><rect x="314.6" y="118.2" width="6.1" height="2.2" fill="#1d2025" opacity=".8"/><rect x="303.3" y="122.3" width="13.3" height="4" fill="#26282b" opacity=".75"/><rect x="309.5" y="118.4" width="8.8" height="7.1" rx="1.8" fill="#f0f0f0"/><rect x="310.9" y="119.1" width="6.2" height="2.2" fill="#1d2025" opacity=".8"/><rect x="351.6" y="122.6" width="13.3" height="4" fill="#26282b" opacity=".75"/><rect x="357.8" y="118.6" width="8.9" height="7.1" rx="1.8" fill="#b8bcc0"/><rect x="359.2" y="119.4" width="6.2" height="2.2" fill="#1d2025" opacity=".8"/><rect x="358.7" y="122.8" width="13.4" height="4" fill="#26282b" opacity=".75"/><rect x="364.9" y="118.8" width="8.9" height="7.1" rx="1.8" fill="#a03434"/><rect x="366.3" y="119.5" width="6.2" height="2.2" fill="#1d2025" opacity=".8"/><rect x="184.1" y="123" width="13.4" height="4" fill="#26282b" opacity=".75"/><rect x="190.4" y="118.9" width="8.9" height="7.2" rx="1.8" fill="#55585e"/><rect x="191.7" y="119.6" width="6.3" height="2.2" fill="#1d2025" opacity=".8"/><rect x="330.8" y="124.4" width="13.7" height="4.1" fill="#26282b" opacity=".75"/><rect x="337.2" y="120.2" width="9.2" height="7.3" rx="1.8" fill="#8a8f96"/><rect x="338.6" y="121" width="6.4" height="2.3" fill="#1d2025" opacity=".8"/><rect x="180.7" y="124.4" width="13.7" height="4.1" fill="#26282b" opacity=".75"/><rect x="187.1" y="120.3" width="9.2" height="7.3" rx="1.8" fill="#8a8f96"/><rect x="188.5" y="121" width="6.4" height="2.3" fill="#1d2025" opacity=".8"/><rect x="271.3" y="124.6" width="13.8" height="4.1" fill="#26282b" opacity=".75"/><rect x="277.8" y="120.5" width="9.2" height="7.4" rx="1.8" fill="#e4e4e4"/><rect x="279.1" y="121.2" width="6.4" height="2.3" fill="#1d2025" opacity=".8"/><rect x="355.1" y="125.2" width="13.9" height="4.2" fill="#26282b" opacity=".75"/><rect x="361.6" y="121" width="9.3" height="7.4" rx="1.9" fill="#e4e4e4"/><rect x="362.9" y="121.8" width="6.5" height="2.3" fill="#1d2025" opacity=".8"/><rect x="262.8" y="125.7" width="14" height="4.2" fill="#26282b" opacity=".75"/><rect x="269.4" y="121.5" width="9.4" height="7.5" rx="1.9" fill="#1f2226"/><rect x="270.8" y="122.2" width="6.5" height="2.3" fill="#1d2025" opacity=".8"/><rect x="175.9" y="126.3" width="14.2" height="4.2" fill="#26282b" opacity=".75"/><rect x="182.5" y="122" width="9.4" height="7.5" rx="1.9" fill="#8a8f96"/><rect x="184" y="122.8" width="6.6" height="2.4" fill="#1d2025" opacity=".8"/><rect x="284.8" y="126.5" width="14.2" height="4.3" fill="#26282b" opacity=".75"/><rect x="291.5" y="122.2" width="9.5" height="7.6" rx="1.9" fill="#2b2e36"/><rect x="292.9" y="123" width="6.6" height="2.4" fill="#1d2025" opacity=".8"/><rect x="267" y="126.7" width="14.3" height="4.3" fill="#26282b" opacity=".75"/><rect x="273.7" y="122.5" width="9.5" height="7.6" rx="1.9" fill="#f0f0f0"/><rect x="275.1" y="123.2" width="6.7" height="2.4" fill="#1d2025" opacity=".8"/><rect x="163.6" y="127.3" width="14.4" height="4.3" fill="#26282b" opacity=".75"/><rect x="170.3" y="123" width="9.6" height="7.7" rx="1.9" fill="#2a2c30"/><rect x="171.8" y="123.7" width="6.7" height="2.4" fill="#1d2025" opacity=".8"/><rect x="181.9" y="127.4" width="14.4" height="4.3" fill="#26282b" opacity=".75"/><rect x="188.7" y="123" width="9.6" height="7.7" rx="1.9" fill="#b8bcc0"/><rect x="190.1" y="123.8" width="6.7" height="2.4" fill="#1d2025" opacity=".8"/><rect x="189.8" y="129.1" width="14.8" height="4.4" fill="#26282b" opacity=".75"/><rect x="196.7" y="124.6" width="9.9" height="7.9" rx="2" fill="#b8bcc0"/><rect x="198.2" y="125.4" width="6.9" height="2.5" fill="#1d2025" opacity=".8"/><rect x="296.2" y="129.1" width="14.8" height="4.4" fill="#26282b" opacity=".75"/><rect x="303.1" y="124.6" width="9.9" height="7.9" rx="2" fill="#a03434"/><rect x="304.6" y="125.4" width="6.9" height="2.5" fill="#1d2025" opacity=".8"/><rect x="285.6" y="130.3" width="15.1" height="4.5" fill="#26282b" opacity=".75"/><rect x="292.6" y="125.8" width="10" height="8" rx="2" fill="#dcdcdc"/><rect x="294.1" y="126.6" width="7" height="2.5" fill="#1d2025" opacity=".8"/><rect x="285.3" y="130.5" width="15.1" height="4.5" fill="#26282b" opacity=".75"/><rect x="292.4" y="126" width="10.1" height="8.1" rx="2" fill="#1f2226"/><rect x="293.9" y="126.8" width="7.1" height="2.5" fill="#1d2025" opacity=".8"/><rect x="154" y="130.6" width="15.1" height="4.5" fill="#26282b" opacity=".75"/><rect x="161" y="126" width="10.1" height="8.1" rx="2" fill="#8a8f96"/><rect x="162.5" y="126.8" width="7.1" height="2.5" fill="#1d2025" opacity=".8"/><rect x="337.2" y="130.9" width="15.2" height="4.6" fill="#26282b" opacity=".75"/><rect x="344.3" y="126.4" width="10.1" height="8.1" rx="2" fill="#8a8f96"/><rect x="345.8" y="127.2" width="7.1" height="2.5" fill="#1d2025" opacity=".8"/><rect x="354.8" y="131.3" width="15.3" height="4.6" fill="#26282b" opacity=".75"/><rect x="361.9" y="126.8" width="10.2" height="8.2" rx="2" fill="#a03434"/><rect x="363.5" y="127.6" width="7.1" height="2.6" fill="#1d2025" opacity=".8"/><rect x="364" y="131.4" width="15.3" height="4.6" fill="#26282b" opacity=".75"/><rect x="371.2" y="126.8" width="10.2" height="8.2" rx="2" fill="#3a3d44"/><rect x="372.7" y="127.6" width="7.1" height="2.6" fill="#1d2025" opacity=".8"/><rect x="188.1" y="131.7" width="15.4" height="4.6" fill="#26282b" opacity=".75"/><rect x="195.3" y="127.1" width="10.3" height="8.2" rx="2.1" fill="#8a8f96"/><rect x="196.8" y="127.9" width="7.2" height="2.6" fill="#1d2025" opacity=".8"/><rect x="268.6" y="132" width="15.4" height="4.6" fill="#26282b" opacity=".75"/><rect x="275.8" y="127.3" width="10.3" height="8.2" rx="2.1" fill="#1f2226"/><rect x="277.3" y="128.1" width="7.2" height="2.6" fill="#1d2025" opacity=".8"/><rect x="361.2" y="132" width="15.5" height="4.6" fill="#26282b" opacity=".75"/><rect x="368.4" y="127.4" width="10.3" height="8.2" rx="2.1" fill="#8a8f96"/><rect x="369.9" y="128.2" width="7.2" height="2.6" fill="#1d2025" opacity=".8"/><rect x="318.9" y="132.2" width="15.5" height="4.7" fill="#26282b" opacity=".75"/><rect x="326.1" y="127.6" width="10.3" height="8.3" rx="2.1" fill="#2a2c30"/><rect x="327.7" y="128.4" width="7.2" height="2.6" fill="#1d2025" opacity=".8"/><rect x="375" y="132.5" width="15.6" height="4.7" fill="#26282b" opacity=".75"/><rect x="382.3" y="127.8" width="10.4" height="8.3" rx="2.1" fill="#2a2c30"/><rect x="383.8" y="128.6" width="7.3" height="2.6" fill="#1d2025" opacity=".8"/><rect x="326.9" y="132.5" width="15.6" height="4.7" fill="#26282b" opacity=".75"/><rect x="334.2" y="127.9" width="10.4" height="8.3" rx="2.1" fill="#f0f0f0"/><rect x="335.7" y="128.7" width="7.3" height="2.6" fill="#1d2025" opacity=".8"/><rect x="353.9" y="133.2" width="15.7" height="4.7" fill="#26282b" opacity=".75"/><rect x="361.3" y="128.5" width="10.5" height="8.4" rx="2.1" fill="#55585e"/><rect x="362.8" y="129.3" width="7.3" height="2.6" fill="#1d2025" opacity=".8"/><rect x="323.3" y="133.3" width="15.7" height="4.7" fill="#26282b" opacity=".75"/><rect x="330.7" y="128.5" width="10.5" height="8.4" rx="2.1" fill="#c9c9c6"/><rect x="332.2" y="129.4" width="7.3" height="2.6" fill="#1d2025" opacity=".8"/><rect x="280" y="135.4" width="16.2" height="4.9" fill="#26282b" opacity=".75"/><rect x="287.6" y="130.6" width="10.8" height="8.7" rx="2.2" fill="#3a3d44"/><rect x="289.2" y="131.4" width="7.6" height="2.7" fill="#1d2025" opacity=".8"/><rect x="259.9" y="136.1" width="16.4" height="4.9" fill="#26282b" opacity=".75"/><rect x="267.5" y="131.2" width="10.9" height="8.7" rx="2.2" fill="#8a8f96"/><rect x="269.2" y="132.1" width="7.6" height="2.7" fill="#1d2025" opacity=".8"/><rect x="272.4" y="136.4" width="16.4" height="4.9" fill="#26282b" opacity=".75"/><rect x="280.1" y="131.5" width="11" height="8.8" rx="2.2" fill="#e4e4e4"/><rect x="281.7" y="132.4" width="7.7" height="2.7" fill="#1d2025" opacity=".8"/><rect x="322.6" y="138.1" width="16.8" height="5" fill="#26282b" opacity=".75"/><rect x="330.5" y="133" width="11.2" height="9" rx="2.2" fill="#55585e"/><rect x="332.2" y="133.9" width="7.8" height="2.8" fill="#1d2025" opacity=".8"/><rect x="186.4" y="138.2" width="16.8" height="5.1" fill="#26282b" opacity=".75"/><rect x="194.3" y="133.1" width="11.2" height="9" rx="2.2" fill="#a03434"/><rect x="196" y="134" width="7.9" height="2.8" fill="#1d2025" opacity=".8"/><rect x="370.6" y="138.4" width="16.9" height="5.1" fill="#26282b" opacity=".75"/><rect x="378.4" y="133.3" width="11.3" height="9" rx="2.3" fill="#e4e4e4"/><rect x="380.1" y="134.2" width="7.9" height="2.8" fill="#1d2025" opacity=".8"/><rect x="250.1" y="138.8" width="17" height="5.1" fill="#26282b" opacity=".75"/><rect x="258" y="133.7" width="11.3" height="9.1" rx="2.3" fill="#b8bcc0"/><rect x="259.7" y="134.6" width="7.9" height="2.8" fill="#1d2025" opacity=".8"/><rect x="262.4" y="138.9" width="17" height="5.1" fill="#26282b" opacity=".75"/><rect x="270.3" y="133.8" width="11.3" height="9.1" rx="2.3" fill="#2b2e36"/><rect x="272" y="134.7" width="7.9" height="2.8" fill="#1d2025" opacity=".8"/><rect x="300.8" y="138.9" width="17" height="5.1" fill="#26282b" opacity=".75"/><rect x="308.7" y="133.8" width="11.3" height="9.1" rx="2.3" fill="#f0f0f0"/><rect x="310.4" y="134.7" width="7.9" height="2.8" fill="#1d2025" opacity=".8"/><rect x="384.6" y="139.8" width="17.2" height="5.2" fill="#26282b" opacity=".75"/><rect x="392.6" y="134.6" width="11.5" height="9.2" rx="2.3" fill="#2a2c30"/><rect x="394.3" y="135.5" width="8" height="2.9" fill="#1d2025" opacity=".8"/><rect x="344" y="140" width="17.3" height="5.2" fill="#26282b" opacity=".75"/><rect x="352" y="134.8" width="11.5" height="9.2" rx="2.3" fill="#dcdcdc"/><rect x="353.8" y="135.7" width="8.1" height="2.9" fill="#1d2025" opacity=".8"/><rect x="202" y="140" width="17.3" height="5.2" fill="#26282b" opacity=".75"/><rect x="210" y="134.9" width="11.5" height="9.2" rx="2.3" fill="#b8bcc0"/><rect x="211.8" y="135.8" width="8.1" height="2.9" fill="#1d2025" opacity=".8"/><rect x="190.7" y="140.7" width="17.4" height="5.2" fill="#26282b" opacity=".75"/><rect x="198.8" y="135.5" width="11.6" height="9.3" rx="2.3" fill="#dcdcdc"/><rect x="200.6" y="136.4" width="8.1" height="2.9" fill="#1d2025" opacity=".8"/><rect x="349.8" y="141.7" width="17.6" height="5.3" fill="#26282b" opacity=".75"/><rect x="358" y="136.4" width="11.8" height="9.4" rx="2.4" fill="#8a8f96"/><rect x="359.8" y="137.4" width="8.2" height="2.9" fill="#1d2025" opacity=".8"/><rect x="147.9" y="142.1" width="17.7" height="5.3" fill="#26282b" opacity=".75"/><rect x="156.2" y="136.8" width="11.8" height="9.5" rx="2.4" fill="#2b2e36"/><rect x="158" y="137.8" width="8.3" height="3" fill="#1d2025" opacity=".8"/><rect x="315.6" y="142.7" width="17.9" height="5.4" fill="#26282b" opacity=".75"/><rect x="323.9" y="137.4" width="11.9" height="9.5" rx="2.4" fill="#c9c9c6"/><rect x="325.7" y="138.3" width="8.3" height="3" fill="#1d2025" opacity=".8"/><rect x="378.2" y="142.8" width="17.9" height="5.4" fill="#26282b" opacity=".75"/><rect x="386.5" y="137.5" width="11.9" height="9.5" rx="2.4" fill="#b8bcc0"/><rect x="388.3" y="138.4" width="8.3" height="3" fill="#1d2025" opacity=".8"/><rect x="264" y="142.9" width="17.9" height="5.4" fill="#26282b" opacity=".75"/><rect x="272.4" y="137.5" width="11.9" height="9.6" rx="2.4" fill="#f0f0f0"/><rect x="274.2" y="138.5" width="8.4" height="3" fill="#1d2025" opacity=".8"/><rect x="151.9" y="142.9" width="17.9" height="5.4" fill="#26282b" opacity=".75"/><rect x="160.2" y="137.6" width="11.9" height="9.6" rx="2.4" fill="#b8bcc0"/><rect x="162" y="138.5" width="8.4" height="3" fill="#1d2025" opacity=".8"/><rect x="293.2" y="143.1" width="17.9" height="5.4" fill="#26282b" opacity=".75"/><rect x="301.6" y="137.7" width="12" height="9.6" rx="2.4" fill="#c9c9c6"/><rect x="303.4" y="138.6" width="8.4" height="3" fill="#1d2025" opacity=".8"/><rect x="380.8" y="143.2" width="18" height="5.4" fill="#26282b" opacity=".75"/><rect x="389.2" y="137.8" width="12" height="9.6" rx="2.4" fill="#55585e"/><rect x="391" y="138.8" width="8.4" height="3" fill="#1d2025" opacity=".8"/><rect x="279.5" y="143.4" width="18" height="5.4" fill="#26282b" opacity=".75"/><rect x="287.9" y="138" width="12" height="9.6" rx="2.4" fill="#8a8f96"/><rect x="289.7" y="138.9" width="8.4" height="3" fill="#1d2025" opacity=".8"/><rect x="228.4" y="144.8" width="18.3" height="5.5" fill="#26282b" opacity=".75"/><rect x="237" y="139.3" width="12.2" height="9.8" rx="2.4" fill="#b8bcc0"/><rect x="238.8" y="140.3" width="8.6" height="3.1" fill="#1d2025" opacity=".8"/><rect x="313.1" y="146.1" width="18.6" height="5.6" fill="#26282b" opacity=".75"/><rect x="321.8" y="140.5" width="12.4" height="9.9" rx="2.5" fill="#c9c9c6"/><rect x="323.7" y="141.5" width="8.7" height="3.1" fill="#1d2025" opacity=".8"/><rect x="288" y="77" width="5" height="3" rx="1" fill="#e4e4e4"/><rect x="293.9" y="78.8" width="5.2" height="3.2" rx="1" fill="#f0f0f0"/><rect x="299.4" y="80.5" width="6.8" height="3.3" rx="1" fill="#dcdcdc"/><rect x="306.6" y="82.6" width="7.3" height="3.5" rx="1" fill="#1f2226"/><rect x="315.6" y="85.3" width="7.9" height="3.8" rx="1" fill="#2b2e36"/><rect x="323.7" y="87.8" width="7.1" height="4" rx="1" fill="#b8bcc0"/><rect x="333.4" y="90.7" width="8.3" height="4.3" rx="1" fill="#3a3d44"/><rect x="342.7" y="93.5" width="8" height="4.6" rx="1" fill="#c9c9c6"/><rect x="353.1" y="96.7" width="8.8" height="4.9" rx="1" fill="#55585e"/><rect x="362.7" y="99.6" width="9.9" height="5.2" rx="1" fill="#e4e4e4"/><rect x="374.7" y="103.2" width="9.8" height="5.5" rx="1" fill="#c9c9c6"/><rect x="387.5" y="107.1" width="12.4" height="5.9" rx="1" fill="#55585e"/><rect x="404.2" y="112.1" width="9.5" height="6.4" rx="1" fill="#f0f0f0"/><rect x="414.4" y="115.2" width="11.4" height="6.7" rx="1" fill="#f0f0f0"/><rect x="430.8" y="120.2" width="13.2" height="7.2" rx="1" fill="#1f2226"/><rect x="444.2" y="124.2" width="11.4" height="7.5" rx="1" fill="#2b2e36"/><ellipse cx="418" cy="103" rx="12" ry="6.500" fill="#4b7a3a"/><path d="M128.2 110.6L133.4 109.8H142.8V113H129z" fill="#242629" opacity=".88"/><path d="M111.5 116.1L118.6 115.2H131.5V118.7H112.6z" fill="#242629" opacity=".88"/><path d="M285.5 118.4L297 116.9H318V122.9H287.2z" fill="#242629" opacity=".88"/><path d="M241.1 120L252.6 118.6H273.6V124.2H242.9z" fill="#242629" opacity=".88"/><path d="M312.1 120.3L323.6 118.7H344.6V125.1H313.9z" fill="#242629" opacity=".88"/><path d="M131.9 126.9L140.4 125.6H155.7V131H133.2z" fill="#242629" opacity=".88"/><path d="M334.3 129.6L345.8 128.5H366.8V133.1H336.1z" fill="#242629" opacity=".88"/><path d="M356.5 133.9L368 132.4H388.9V138.4H358.2z" fill="#242629" opacity=".88"/><path d="M226.4 133.9L235.6 132.4H252.4V138.4H227.8z" fill="#242629" opacity=".88"/><path d="M64.8 135L74.5 133.8H92.2V138.7H66.2z" fill="#242629" opacity=".88"/><path d="M258.9 135.3L270.4 133.6H291.3V140.6H260.6z" fill="#242629" opacity=".88"/><path d="M243 136.1L253.1 134.6H271.4V140.6H244.5z" fill="#242629" opacity=".88"/><path d="M307.7 135.3L319.2 133.6H340.1V140.6H309.4z" fill="#242629" opacity=".88"/><path d="M376.4 135.3L388 133.6H408.9V140.6H378.2z" fill="#242629" opacity=".88"/><path d="M82.1 138.6L94.3 136.9H116.3V143.7H84z" fill="#242629" opacity=".88"/><path d="M115.4 140.9L124 139.5H139.7V145H116.7z" fill="#242629" opacity=".88"/><path d="M40.3 144.4L52.2 143.3H73.6V147.8H42.1z" fill="#242629" opacity=".88"/><path d="M414.1 147.8L425.7 146.2H446.6V152.6H415.9z" fill="#242629" opacity=".88"/><path d="M68.5 148.4L79.2 147H98.7V152.8H70.1z" fill="#242629" opacity=".88"/><path d="M330.5 147.1L344.9 145H371.1V153.9H332.7z" fill="#242629" opacity=".88"/><path d="M283.6 148.7L296.6 146.9H320.1V153.9H285.6z" fill="#242629" opacity=".88"/><path d="M227.5 152.2L237.6 150.7H255.9V157H229z" fill="#242629" opacity=".88"/><path d="M379 151.5L392 149.7H415.5V157H381z" fill="#242629" opacity=".88"/><path d="M263.6 154L276.6 152.1H300.2V159.7H265.6z" fill="#242629" opacity=".88"/><path d="M125.5 155.6L136.6 154.2H156.7V160H127.2z" fill="#242629" opacity=".88"/><path d="M430 156.8L443 154.8H466.5V162.8H432z" fill="#242629" opacity=".88"/><path d="M148.8 159.2L165 157.7H194.5V164H151.2z" fill="#242629" opacity=".88"/><path d="M346 159.7L360.5 158H386.6V165H348.3z" fill="#242629" opacity=".88"/><path d="M398.1 163.4L413.4 161.5H441.2V169.5H400.5z" fill="#242629" opacity=".88"/><path d="M307.5 161.9L324.3 159.5H354.6V169.5H310.1z" fill="#242629" opacity=".88"/><path d="M312.1 167L323.6 166H344.6V170.3H313.9z" fill="#242629" opacity=".88"/><path d="M255.1 167L269.5 166H295.7V170.3H257.3z" fill="#242629" opacity=".88"/><path d="M277.3 174.5L291.7 172.6H317.9V180.6H279.5z" fill="#242629" opacity=".88"/><path d="M326.6 175L341.6 173.2H368.9V180.6H329z" fill="#242629" opacity=".88"/><path d="M430.8 176L441.5 173.8H460.8V182.8H432.4z" fill="#242629" opacity=".88"/><path d="M54.9 179.4L68.7 177.6H93.8V185H57z" fill="#242629" opacity=".88"/><path d="M369.5 178.9L389.7 176.2H426.4V187.2H372.7z" fill="#242629" opacity=".88"/><path d="M2.2 179.4L20.7 176.8H54.2V187.2H5.1z" fill="#242629" opacity=".88"/><path d="M116.4 184.9L131.7 182.7H159.4V191.6H118.8z" fill="#242629" opacity=".88"/><path d="M218 185.4L235.3 183.1H266.8V192.5H220.7z" fill="#242629" opacity=".88"/><path d="M336 193.6L351.3 191.6H379.1V199.6H338.4z" fill="#242629" opacity=".88"/><path d="M387.6 191.5L409.3 188.5H448.5V200.5H391z" fill="#242629" opacity=".88"/><path d="M142.8 194.7L158.9 192.2H188.3V202.7H145.3z" fill="#242629" opacity=".88"/><path d="M284.7 205.5L304.3 202.8H339.9V213.8H287.7z" fill="#242629" opacity=".88"/><path d="M355.9 208.5L374.6 206.8H408.7V213.8H358.8z" fill="#242629" opacity=".88"/><path d="M64.5 206.2L85.6 203.1H123.8V216H67.8z" fill="#242629" opacity=".88"/><path d="M222.7 218.4L244.9 215.2H285.2V228H226.1z" fill="#242629" opacity=".88"/><path d="M371.9 243.9L402.2 239.2H457.1V258.2H376.5z" fill="#242629" opacity=".88"/><path d="M308.5 255.9L335.3 252H384V268H312.6z" fill="#242629" opacity=".88"/><path d="M90.6 258.7L118.8 254.5H170.1V271.5H94.9z" fill="#242629" opacity=".88"/><path d="M-12.9 271.3L20.5 265.8H81.3V288.4H-7.8z" fill="#242629" opacity=".88"/><path d="M414 293.7L444.3 288.7H499.3V309.2H418.7z" fill="#242629" opacity=".88"/><path d="M293.7 291.5L339 284.3H421.2V313.7H300.7z" fill="#242629" opacity=".88"/><path d="M210 294.8L248 287.9H317.1V315.9H215.8z" fill="#242629" opacity=".88"/><path d="M136 109.1L136.6 106.3Q139 105.8 141.4 106.3L142 109.1z" fill="#2c2e33"/><path d="M136.4 108.8L136.9 106.8H141.1L141.6 108.8z" fill="#2a2e34"/><rect x="135" y="108.5" width="8" height="3.8" rx="0.8" fill="#2c2e33"/><rect x="135.2" y="111.2" width="7.5" height="1" rx="0.3" fill="#1f2124"/><rect x="135.4" y="112" width="1.4" height="1" fill="#131416"/><rect x="141.2" y="112" width="1.4" height="1" fill="#131416"/><rect x="135.4" y="109.8" width="1.5" height="0.8" fill="#f3efdf" opacity=".9"/><rect x="141.1" y="109.8" width="1.5" height="0.8" fill="#f3efdf" opacity=".9"/><rect x="137.2" y="109.9" width="3.5" height="1" fill="#111" opacity=".45"/><rect x="138.2" y="111.3" width="1.6" height="0.6" fill="#e6e6e6" opacity=".7"/><path d="M122.1 114.4L123 111.4Q126.2 110.8 129.5 111.4L130.4 114.4z" fill="#c9c9c9"/><path d="M122.7 114.1L123.4 111.9H129.1L129.8 114.1z" fill="#2a2e34"/><rect x="120.8" y="113.8" width="10.9" height="4.2" rx="0.9" fill="#c9c9c9"/><rect x="121.1" y="116.7" width="10.2" height="1.1" rx="0.3" fill="#909090"/><rect x="121.3" y="117.6" width="1.9" height="1.1" fill="#131416"/><rect x="129.3" y="117.6" width="1.9" height="1.1" fill="#131416"/><rect x="121.3" y="115.2" width="2.1" height="0.8" fill="#f3efdf" opacity=".9"/><rect x="129.1" y="115.2" width="2.1" height="0.8" fill="#f3efdf" opacity=".9"/><rect x="123.9" y="115.3" width="4.8" height="1.1" fill="#111" opacity=".45"/><rect x="125.2" y="116.9" width="2.2" height="0.6" fill="#e6e6e6" opacity=".7"/><path d="M302.7 115.4L304.1 110.2Q309.4 109.2 314.8 110.2L316.2 115.4z" fill="#333"/><path d="M303.6 114.9L304.8 111.2H314L315.3 114.9z" fill="#2a2e34"/><rect x="300.6" y="114.4" width="17.7" height="7.2" rx="1.6" fill="#333"/><rect x="301.1" y="119.4" width="16.7" height="1.9" rx="0.5" fill="#242424"/><rect x="301.4" y="121" width="3" height="1.9" fill="#131416"/><rect x="314.4" y="121" width="3" height="1.9" fill="#131416"/><rect x="301.3" y="116.2" width="2.3" height="1.7" fill="#d23c2c"/><rect x="315.3" y="116.2" width="2.3" height="1.7" fill="#d23c2c"/><rect x="307.7" y="118.1" width="3.5" height="1.1" fill="#e6e6e6" opacity=".8"/><path d="M258.3 117.3L259.7 112.4Q265.1 111.4 270.4 112.4L271.8 117.3z" fill="#ddd"/><path d="M259.2 116.8L260.5 113.3H269.7L270.9 116.8z" fill="#2a2e34"/><rect x="256.2" y="116.3" width="17.7" height="6.7" rx="1.5" fill="#ddd"/><rect x="256.7" y="121" width="16.7" height="1.7" rx="0.4" fill="#9f9f9f"/><rect x="257.1" y="122.5" width="3" height="1.7" fill="#131416"/><rect x="270" y="122.5" width="3" height="1.7" fill="#131416"/><rect x="256.9" y="118" width="2.3" height="1.6" fill="#d23c2c"/><rect x="270.9" y="118" width="2.3" height="1.6" fill="#d23c2c"/><rect x="263.3" y="119.7" width="3.5" height="1" fill="#e6e6e6" opacity=".8"/><path d="M329.3 117.1L330.7 111.6Q336.1 110.5 341.4 111.6L342.8 117.1z" fill="#ccc"/><path d="M330.2 116.6L331.4 112.6H340.7L341.9 116.6z" fill="#2a2e34"/><rect x="327.2" y="116" width="17.7" height="7.7" rx="1.7" fill="#ccc"/><rect x="327.7" y="121.4" width="16.7" height="2" rx="0.5" fill="#929292"/><rect x="328.1" y="123.1" width="3" height="2" fill="#131416"/><rect x="341" y="123.1" width="3" height="2" fill="#131416"/><rect x="327.9" y="118" width="2.3" height="1.8" fill="#d23c2c"/><rect x="341.9" y="118" width="2.3" height="1.8" fill="#d23c2c"/><rect x="334.3" y="120" width="3.5" height="1.1" fill="#e6e6e6" opacity=".8"/><path d="M144.6 124.3L145.6 119.6Q149.5 118.6 153.4 119.6L154.4 124.3z" fill="#2c3f6a"/><path d="M145.2 123.8L146.1 120.4H152.9L153.8 123.8z" fill="#2a2e34"/><rect x="143" y="123.3" width="13" height="6.5" rx="1.4" fill="#2c3f6a"/><rect x="143.4" y="127.9" width="12.2" height="1.7" rx="0.4" fill="#1f2d4c"/><rect x="143.7" y="129.3" width="2.2" height="1.7" fill="#131416"/><rect x="153.1" y="129.3" width="2.2" height="1.7" fill="#131416"/><rect x="143.7" y="125.6" width="2.5" height="1.3" fill="#f3efdf" opacity=".9"/><rect x="152.9" y="125.6" width="2.5" height="1.3" fill="#f3efdf" opacity=".9"/><rect x="146.6" y="125.7" width="5.7" height="1.7" fill="#111" opacity=".45"/><rect x="148.2" y="128.1" width="2.6" height="1" fill="#e6e6e6" opacity=".7"/><path d="M351.5 127.4L352.9 123.4Q358.2 122.6 363.6 123.4L365 127.4z" fill="#3a3a3a"/><path d="M352.4 127L353.6 124.1H362.8L364.1 127z" fill="#2a2e34"/><rect x="349.4" y="126.6" width="17.7" height="5.5" rx="1.2" fill="#3a3a3a"/><rect x="349.9" y="130.4" width="16.7" height="1.4" rx="0.4" fill="#292929"/><rect x="350.2" y="131.7" width="3" height="1.4" fill="#131416"/><rect x="363.2" y="131.7" width="3" height="1.4" fill="#131416"/><rect x="350.1" y="128" width="2.3" height="1.3" fill="#d23c2c"/><rect x="364.1" y="128" width="2.3" height="1.3" fill="#d23c2c"/><rect x="356.5" y="129.4" width="3.5" height="0.8" fill="#e6e6e6" opacity=".8"/><path d="M373.7 131L375.1 125.8Q380.4 124.7 385.7 125.8L387.2 131z" fill="#dedede"/><path d="M374.6 130.4L375.8 126.7H385L386.3 130.4z" fill="#2a2e34"/><rect x="371.5" y="129.9" width="17.7" height="7.2" rx="1.6" fill="#dedede"/><rect x="372.1" y="134.9" width="16.7" height="1.9" rx="0.5" fill="#9f9f9f"/><rect x="372.4" y="136.5" width="3" height="1.9" fill="#131416"/><rect x="385.4" y="136.5" width="3" height="1.9" fill="#131416"/><rect x="372.3" y="131.8" width="2.3" height="1.7" fill="#d23c2c"/><rect x="386.3" y="131.8" width="2.3" height="1.7" fill="#d23c2c"/><rect x="378.6" y="133.6" width="3.5" height="1.1" fill="#e6e6e6" opacity=".8"/><path d="M240.2 131L241.3 125.8Q245.5 124.7 249.8 125.8L250.9 131z" fill="#35383e"/><path d="M240.9 130.4L241.9 126.7H249.2L250.2 130.4z" fill="#2a2e34"/><rect x="238.4" y="129.9" width="14.2" height="7.2" rx="1.6" fill="#35383e"/><rect x="238.9" y="134.9" width="13.3" height="1.9" rx="0.5" fill="#26282c"/><rect x="239.2" y="136.5" width="2.4" height="1.9" fill="#131416"/><rect x="249.5" y="136.5" width="2.4" height="1.9" fill="#131416"/><rect x="239" y="131.8" width="1.8" height="1.7" fill="#d23c2c"/><rect x="250.2" y="131.8" width="1.8" height="1.7" fill="#d23c2c"/><rect x="244.1" y="133.6" width="2.8" height="1.1" fill="#e6e6e6" opacity=".8"/><path d="M79.3 132.6L80.5 128.3Q85 127.5 89.5 128.3L90.7 132.6z" fill="#3a3f4a"/><path d="M80 132.2L81.1 129.1H88.9L90 132.2z" fill="#2a2e34"/><rect x="77.5" y="131.7" width="15" height="5.9" rx="1.3" fill="#3a3f4a"/><rect x="78" y="135.9" width="14.1" height="1.5" rx="0.4" fill="#292d35"/><rect x="78.2" y="137.2" width="2.5" height="1.5" fill="#131416"/><rect x="89.2" y="137.2" width="2.5" height="1.5" fill="#131416"/><rect x="78.2" y="133.8" width="2.9" height="1.2" fill="#f3efdf" opacity=".9"/><rect x="88.9" y="133.8" width="2.8" height="1.2" fill="#f3efdf" opacity=".9"/><rect x="81.7" y="133.9" width="6.6" height="1.5" fill="#111" opacity=".45"/><rect x="83.5" y="136.1" width="3" height="0.9" fill="#e6e6e6" opacity=".7"/><path d="M276.1 131.9L277.5 125.9Q282.8 124.6 288.1 125.9L289.6 131.9z" fill="#cfcfcf"/><path d="M277 131.3L278.2 127H287.4L288.7 131.3z" fill="#2a2e34"/><rect x="273.9" y="130.7" width="17.7" height="8.4" rx="1.9" fill="#cfcfcf"/><rect x="274.5" y="136.6" width="16.7" height="2.2" rx="0.6" fill="#959595"/><rect x="274.8" y="138.5" width="3" height="2.2" fill="#131416"/><rect x="287.8" y="138.5" width="3" height="2.2" fill="#131416"/><rect x="274.6" y="132.9" width="2.3" height="2" fill="#d23c2c"/><rect x="288.7" y="132.9" width="2.3" height="2" fill="#d23c2c"/><rect x="281" y="135" width="3.5" height="1.2" fill="#e6e6e6" opacity=".8"/><path d="M258.1 133.2L259.3 128Q264 126.9 268.6 128L269.9 133.2z" fill="#e6e6e6"/><path d="M258.8 132.6L259.9 128.9H268L269.1 132.6z" fill="#2a2e34"/><rect x="256.2" y="132.1" width="15.5" height="7.2" rx="1.6" fill="#e6e6e6"/><rect x="256.7" y="137.2" width="14.6" height="1.9" rx="0.5" fill="#a5a5a5"/><rect x="257" y="138.8" width="2.6" height="1.9" fill="#131416"/><rect x="268.3" y="138.8" width="2.6" height="1.9" fill="#131416"/><rect x="256.8" y="134" width="2" height="1.7" fill="#d23c2c"/><rect x="269.1" y="134" width="2" height="1.7" fill="#d23c2c"/><rect x="262.4" y="135.8" width="3.1" height="1.1" fill="#e6e6e6" opacity=".8"/><path d="M324.9 131.9L326.3 125.9Q331.6 124.6 336.9 125.9L338.4 131.9z" fill="#b43a3a"/><path d="M325.8 131.3L327 127H336.2L337.5 131.3z" fill="#2a2e34"/><rect x="322.7" y="130.7" width="17.7" height="8.4" rx="1.9" fill="#b43a3a"/><rect x="323.3" y="136.6" width="16.7" height="2.2" rx="0.6" fill="#812929"/><rect x="323.6" y="138.5" width="3" height="2.2" fill="#131416"/><rect x="336.6" y="138.5" width="3" height="2.2" fill="#131416"/><rect x="323.5" y="132.9" width="2.3" height="2" fill="#d23c2c"/><rect x="337.5" y="132.9" width="2.3" height="2" fill="#d23c2c"/><rect x="329.8" y="135" width="3.5" height="1.2" fill="#e6e6e6" opacity=".8"/><path d="M393.6 131.9L395.1 125.9Q400.4 124.6 405.7 125.9L407.1 131.9z" fill="#2d2f35"/><path d="M394.5 131.3L395.8 127H405L406.2 131.3z" fill="#2a2e34"/><rect x="391.5" y="130.7" width="17.7" height="8.4" rx="1.9" fill="#2d2f35"/><rect x="392" y="136.6" width="16.7" height="2.2" rx="0.6" fill="#202126"/><rect x="392.4" y="138.5" width="3" height="2.2" fill="#131416"/><rect x="405.4" y="138.5" width="3" height="2.2" fill="#131416"/><rect x="392.2" y="132.9" width="2.3" height="2" fill="#d23c2c"/><rect x="406.2" y="132.9" width="2.3" height="2" fill="#d23c2c"/><rect x="398.6" y="135" width="3.5" height="1.2" fill="#e6e6e6" opacity=".8"/><path d="M100.2 135.3L101.7 129.4Q107.4 128.2 113 129.4L114.5 135.3z" fill="#ececec"/><path d="M101.2 134.7L102.5 130.5H112.2L113.5 134.7z" fill="#2a2e34"/><rect x="98" y="134.1" width="18.7" height="8.1" rx="1.8" fill="#ececec"/><rect x="98.6" y="139.8" width="17.6" height="2.1" rx="0.5" fill="#a9a9a9"/><rect x="98.9" y="141.6" width="3.2" height="2.1" fill="#131416"/><rect x="112.6" y="141.6" width="3.2" height="2.1" fill="#131416"/><rect x="98.9" y="136.9" width="3.6" height="1.6" fill="#f3efdf" opacity=".9"/><rect x="112.2" y="136.9" width="3.6" height="1.6" fill="#f3efdf" opacity=".9"/><rect x="103.2" y="137.1" width="8.2" height="2.1" fill="#111" opacity=".45"/><rect x="105.5" y="140.1" width="3.7" height="1.2" fill="#e6e6e6" opacity=".7"/><path d="M128.3 138.2L129.4 133.4Q133.4 132.4 137.3 133.4L138.4 138.2z" fill="#dcdcdc"/><path d="M129 137.7L129.9 134.3H136.8L137.7 137.7z" fill="#2a2e34"/><rect x="126.7" y="137.2" width="13.3" height="6.6" rx="1.5" fill="#dcdcdc"/><rect x="127.1" y="141.8" width="12.5" height="1.7" rx="0.4" fill="#9e9e9e"/><rect x="127.4" y="143.3" width="2.3" height="1.7" fill="#131416"/><rect x="137.1" y="143.3" width="2.3" height="1.7" fill="#131416"/><rect x="127.4" y="139.5" width="2.5" height="1.3" fill="#f3efdf" opacity=".9"/><rect x="136.8" y="139.5" width="2.5" height="1.3" fill="#f3efdf" opacity=".9"/><rect x="130.4" y="139.6" width="5.9" height="1.7" fill="#111" opacity=".45"/><rect x="132" y="142.1" width="2.7" height="1" fill="#e6e6e6" opacity=".7"/><path d="M58 142.2L59.4 138.3Q64.9 137.5 70.4 138.3L71.8 142.2z" fill="#3b4150"/><path d="M58.9 141.8L60.2 139H69.6L70.9 141.8z" fill="#2a2e34"/><rect x="55.8" y="141.4" width="18.2" height="5.4" rx="1.2" fill="#3b4150"/><rect x="56.3" y="145.2" width="17.1" height="1.4" rx="0.4" fill="#2a2e39"/><rect x="56.7" y="146.4" width="3.1" height="1.4" fill="#131416"/><rect x="70" y="146.4" width="3.1" height="1.4" fill="#131416"/><rect x="56.7" y="143.3" width="3.5" height="1.1" fill="#f3efdf" opacity=".9"/><rect x="69.6" y="143.3" width="3.5" height="1.1" fill="#f3efdf" opacity=".9"/><rect x="60.9" y="143.4" width="8" height="1.4" fill="#111" opacity=".45"/><rect x="63.1" y="145.4" width="3.6" height="0.8" fill="#e6e6e6" opacity=".7"/><path d="M431.3 144.7L432.8 139.1Q438.1 138 443.4 139.1L444.8 144.7z" fill="#d9d9d9"/><path d="M432.2 144.1L433.5 140.1H442.7L443.9 144.1z" fill="#2a2e34"/><rect x="429.2" y="143.5" width="17.7" height="7.7" rx="1.7" fill="#d9d9d9"/><rect x="429.8" y="148.9" width="16.7" height="2" rx="0.5" fill="#9c9c9c"/><rect x="430.1" y="150.6" width="3" height="2" fill="#131416"/><rect x="443.1" y="150.6" width="3" height="2" fill="#131416"/><rect x="429.9" y="145.5" width="2.3" height="1.8" fill="#d23c2c"/><rect x="443.9" y="145.5" width="2.3" height="1.8" fill="#d23c2c"/><rect x="436.3" y="147.5" width="3.5" height="1.1" fill="#e6e6e6" opacity=".8"/><path d="M84.5 145.6L85.8 140.6Q90.8 139.6 95.7 140.6L97 145.6z" fill="#26282c"/><path d="M85.3 145.1L86.5 141.5H95L96.2 145.1z" fill="#2a2e34"/><rect x="82.5" y="144.6" width="16.5" height="6.9" rx="1.5" fill="#26282c"/><rect x="83" y="149.5" width="15.5" height="1.8" rx="0.5" fill="#1b1c1f"/><rect x="83.3" y="151" width="2.8" height="1.8" fill="#131416"/><rect x="95.4" y="151" width="2.8" height="1.8" fill="#131416"/><rect x="83.3" y="147" width="3.1" height="1.4" fill="#f3efdf" opacity=".9"/><rect x="95" y="147" width="3.1" height="1.4" fill="#f3efdf" opacity=".9"/><rect x="87.1" y="147.2" width="7.3" height="1.8" fill="#111" opacity=".45"/><rect x="89.1" y="149.7" width="3.3" height="1" fill="#e6e6e6" opacity=".7"/><rect x="349.8" y="135.2" width="21.3" height="16.8" rx="2.4" fill="#e9e9e9"/><rect x="351.1" y="134.4" width="18.6" height="2.4" rx="1.4" fill="#eeeeee"/><rect x="351.6" y="137.2" width="17.7" height="5.2" rx="1" fill="#2a2e34"/><rect x="349.8" y="148.3" width="21.3" height="2.8" rx="0.7" fill="#a7a7a7"/><rect x="350.5" y="151.1" width="3.8" height="2.8" fill="#131416"/><rect x="366.7" y="151.1" width="3.8" height="2.8" fill="#131416"/><rect x="350.2" y="144" width="2.9" height="2.6" fill="#d23c2c"/><rect x="367.8" y="144" width="2.9" height="2.6" fill="#d23c2c"/><rect x="358.2" y="146.7" width="4.4" height="1.6" fill="#e6e6e6" opacity=".8"/><path d="M303 145.2L304.6 139.2Q310.5 137.9 316.5 139.2L318.1 145.2z" fill="#30333a"/><path d="M304 144.6L305.4 140.3H315.7L317.1 144.6z" fill="#2a2e34"/><rect x="300.6" y="144" width="20" height="8.4" rx="1.9" fill="#30333a"/><rect x="301.2" y="149.9" width="18.8" height="2.2" rx="0.6" fill="#222429"/><rect x="301.6" y="151.8" width="3.4" height="2.2" fill="#131416"/><rect x="316.1" y="151.8" width="3.4" height="2.2" fill="#131416"/><rect x="301.4" y="146.2" width="2.6" height="2" fill="#d23c2c"/><rect x="317.1" y="146.2" width="2.6" height="2" fill="#d23c2c"/><rect x="308.5" y="148.3" width="4" height="1.2" fill="#e6e6e6" opacity=".8"/><path d="M242.5 149.1L243.8 143.6Q248.4 142.4 253.1 143.6L254.3 149.1z" fill="#1d1f22"/><path d="M243.3 148.5L244.4 144.5H252.5L253.6 148.5z" fill="#2a2e34"/><rect x="240.7" y="148" width="15.5" height="7.7" rx="1.7" fill="#1d1f22"/><rect x="241.1" y="153.3" width="14.6" height="2" rx="0.5" fill="#141618"/><rect x="241.4" y="155.1" width="2.6" height="2" fill="#131416"/><rect x="252.8" y="155.1" width="2.6" height="2" fill="#131416"/><rect x="241.3" y="149.9" width="2" height="1.8" fill="#d23c2c"/><rect x="253.6" y="149.9" width="2" height="1.8" fill="#d23c2c"/><rect x="246.9" y="151.9" width="3.1" height="1.1" fill="#e6e6e6" opacity=".8"/><rect x="396.3" y="141.6" width="19.2" height="13.8" rx="2" fill="#b9b9b4"/><rect x="397.5" y="141" width="16.8" height="2" rx="1.2" fill="#cacac6"/><rect x="397.9" y="143.3" width="16" height="4.3" rx="0.8" fill="#2a2e34"/><rect x="396.3" y="152.4" width="19.2" height="2.3" rx="0.6" fill="#858581"/><rect x="396.9" y="154.7" width="3.4" height="2.3" fill="#131416"/><rect x="411.5" y="154.7" width="3.4" height="2.3" fill="#131416"/><rect x="396.7" y="148.8" width="2.6" height="2.1" fill="#d23c2c"/><rect x="412.5" y="148.8" width="2.6" height="2.1" fill="#d23c2c"/><rect x="403.9" y="151.1" width="4" height="1.3" fill="#e6e6e6" opacity=".8"/><path d="M283 150.3L284.6 143.7Q290.6 142.3 296.6 143.7L298.2 150.3z" fill="#e2e2e2"/><path d="M284 149.6L285.4 144.9H295.8L297.2 149.6z" fill="#2a2e34"/><rect x="280.6" y="148.9" width="20" height="9.1" rx="2" fill="#e2e2e2"/><rect x="281.2" y="155.3" width="18.8" height="2.4" rx="0.6" fill="#a2a2a2"/><rect x="281.6" y="157.3" width="3.4" height="2.4" fill="#131416"/><rect x="296.2" y="157.3" width="3.4" height="2.4" fill="#131416"/><rect x="281.4" y="151.3" width="2.6" height="2.2" fill="#d23c2c"/><rect x="297.2" y="151.3" width="2.6" height="2.2" fill="#d23c2c"/><rect x="288.6" y="153.6" width="4" height="1.3" fill="#e6e6e6" opacity=".8"/><path d="M142 152.7L143.4 147.7Q148.5 146.6 153.6 147.7L155 152.7z" fill="#d9d9d9"/><path d="M142.9 152.2L144.1 148.6H152.9L154.1 152.2z" fill="#2a2e34"/><rect x="140" y="151.7" width="17" height="7" rx="1.6" fill="#d9d9d9"/><rect x="140.5" y="156.6" width="16" height="1.8" rx="0.5" fill="#9c9c9c"/><rect x="140.8" y="158.2" width="2.9" height="1.8" fill="#131416"/><rect x="153.3" y="158.2" width="2.9" height="1.8" fill="#131416"/><rect x="140.8" y="154.2" width="3.2" height="1.4" fill="#f3efdf" opacity=".9"/><rect x="152.9" y="154.2" width="3.2" height="1.4" fill="#f3efdf" opacity=".9"/><rect x="144.8" y="154.3" width="7.5" height="1.8" fill="#111" opacity=".45"/><rect x="146.8" y="156.9" width="3.4" height="1" fill="#e6e6e6" opacity=".7"/><rect x="447.4" y="146.1" width="19.2" height="14.9" rx="2.1" fill="#c9c9c9"/><rect x="448.6" y="145.4" width="16.8" height="2.1" rx="1.3" fill="#d6d6d6"/><rect x="449" y="147.9" width="16" height="4.6" rx="0.9" fill="#2a2e34"/><rect x="447.4" y="157.8" width="19.2" height="2.5" rx="0.6" fill="#909090"/><rect x="448" y="160.3" width="3.4" height="2.5" fill="#131416"/><rect x="462.5" y="160.3" width="3.4" height="2.5" fill="#131416"/><rect x="447.8" y="153.9" width="2.6" height="2.3" fill="#d23c2c"/><rect x="463.5" y="153.9" width="2.6" height="2.3" fill="#d23c2c"/><rect x="455" y="156.4" width="4" height="1.4" fill="#e6e6e6" opacity=".8"/><path d="M173 156.2L175 150.7Q182.5 149.6 190 150.7L192 156.2z" fill="#cfcfcf"/><path d="M174.2 155.6L176 151.7H189L190.8 155.6z" fill="#2a2e34"/><rect x="170" y="155" width="25" height="7.6" rx="1.7" fill="#cfcfcf"/><rect x="170.8" y="160.4" width="23.5" height="2" rx="0.5" fill="#959595"/><rect x="171.2" y="162" width="4.2" height="2" fill="#131416"/><rect x="189.5" y="162" width="4.2" height="2" fill="#131416"/><rect x="171.2" y="157.7" width="4.8" height="1.5" fill="#f3efdf" opacity=".9"/><rect x="189" y="157.7" width="4.7" height="1.5" fill="#f3efdf" opacity=".9"/><rect x="177" y="157.8" width="11" height="2" fill="#111" opacity=".45"/><rect x="180" y="160.6" width="5" height="1.1" fill="#e6e6e6" opacity=".7"/><path d="M367.6 156.3L369.3 150.3Q376 149 382.6 150.3L384.4 156.3z" fill="#e6e6e6"/><path d="M368.7 155.7L370.2 151.4H381.7L383.3 155.7z" fill="#2a2e34"/><rect x="364.9" y="155.1" width="22.2" height="8.4" rx="1.9" fill="#e6e6e6"/><rect x="365.6" y="161" width="20.9" height="2.2" rx="0.6" fill="#a5a5a5"/><rect x="366" y="162.9" width="3.8" height="2.2" fill="#131416"/><rect x="382.2" y="162.9" width="3.8" height="2.2" fill="#131416"/><rect x="365.8" y="157.3" width="2.9" height="2" fill="#d23c2c"/><rect x="383.3" y="157.3" width="2.9" height="2" fill="#d23c2c"/><rect x="373.8" y="159.4" width="4.4" height="1.2" fill="#e6e6e6" opacity=".8"/><rect x="418.6" y="152.8" width="22.6" height="14.9" rx="2.1" fill="#e8e8e8"/><rect x="420" y="152.1" width="19.8" height="2.1" rx="1.3" fill="#ededed"/><rect x="420.5" y="154.6" width="18.8" height="4.6" rx="0.9" fill="#2a2e34"/><rect x="418.6" y="164.5" width="22.6" height="2.5" rx="0.6" fill="#a7a7a7"/><rect x="419.3" y="167" width="4" height="2.5" fill="#131416"/><rect x="436.5" y="167" width="4" height="2.5" fill="#131416"/><rect x="419.1" y="160.6" width="3.1" height="2.3" fill="#d23c2c"/><rect x="437.6" y="160.6" width="3.1" height="2.3" fill="#d23c2c"/><rect x="427.5" y="163.1" width="4.7" height="1.4" fill="#e6e6e6" opacity=".8"/><rect x="329.9" y="148.6" width="24.7" height="18.6" rx="2.7" fill="#2b2d33"/><rect x="331.5" y="147.7" width="21.6" height="2.7" rx="1.6" fill="#606166"/><rect x="332" y="150.8" width="20.6" height="5.8" rx="1.1" fill="#2a2e34"/><rect x="329.9" y="163.3" width="24.7" height="3.1" rx="0.8" fill="#1e2024"/><rect x="330.7" y="166.4" width="4.4" height="3.1" fill="#131416"/><rect x="349.5" y="166.4" width="4.4" height="3.1" fill="#131416"/><rect x="330.4" y="158.4" width="3.3" height="2.9" fill="#d23c2c"/><rect x="350.8" y="158.4" width="3.3" height="2.9" fill="#d23c2c"/><rect x="339.7" y="161.5" width="5.1" height="1.8" fill="#e6e6e6" opacity=".8"/><path d="M329.3 164.9L330.7 161.1Q336.1 160.3 341.4 161.1L342.8 164.9z" fill="#8a2f2f"/><path d="M330.2 164.5L331.4 161.8H340.7L341.9 164.5z" fill="#2a2e34"/><rect x="327.2" y="164.1" width="17.7" height="5.3" rx="1.2" fill="#8a2f2f"/><rect x="327.7" y="167.8" width="16.7" height="1.4" rx="0.4" fill="#632121"/><rect x="328.1" y="169" width="3" height="1.4" fill="#131416"/><rect x="341" y="169" width="3" height="1.4" fill="#131416"/><rect x="327.9" y="165.5" width="2.3" height="1.3" fill="#d23c2c"/><rect x="341.9" y="165.5" width="2.3" height="1.3" fill="#d23c2c"/><rect x="334.3" y="166.8" width="3.5" height="0.8" fill="#e6e6e6" opacity=".8"/><path d="M276.6 164.9L278.4 161.1Q285 160.3 291.7 161.1L293.5 164.9z" fill="#444"/><path d="M277.7 164.5L279.3 161.8H290.8L292.4 164.5z" fill="#2a2e34"/><rect x="273.9" y="164.1" width="22.2" height="5.3" rx="1.2" fill="#444"/><rect x="274.6" y="167.8" width="20.9" height="1.4" rx="0.4" fill="#303030"/><rect x="275" y="169" width="3.8" height="1.4" fill="#131416"/><rect x="291.2" y="169" width="3.8" height="1.4" fill="#131416"/><rect x="274.8" y="165.5" width="2.9" height="1.3" fill="#d23c2c"/><rect x="292.4" y="165.5" width="2.9" height="1.3" fill="#d23c2c"/><rect x="282.8" y="166.8" width="4.4" height="0.8" fill="#e6e6e6" opacity=".8"/><path d="M298.8 170.6L300.6 163.7Q307.2 162.3 313.9 163.7L315.6 170.6z" fill="#2a3350"/><path d="M299.9 169.9L301.4 164.9H313L314.5 169.9z" fill="#2a2e34"/><rect x="296.1" y="169.2" width="22.2" height="9.6" rx="2.1" fill="#2a3350"/><rect x="296.8" y="175.9" width="20.9" height="2.5" rx="0.6" fill="#1e2439"/><rect x="297.2" y="178.1" width="3.8" height="2.5" fill="#131416"/><rect x="313.4" y="178.1" width="3.8" height="2.5" fill="#131416"/><rect x="297" y="171.7" width="2.9" height="2.3" fill="#d23c2c"/><rect x="314.5" y="171.7" width="2.9" height="2.3" fill="#d23c2c"/><rect x="305" y="174.2" width="4.4" height="1.4" fill="#e6e6e6" opacity=".8"/><path d="M349 171.4L350.9 165Q357.8 163.6 364.7 165L366.6 171.4z" fill="#e4e4e4"/><path d="M350.2 170.7L351.8 166.1H363.8L365.4 170.7z" fill="#2a2e34"/><rect x="346.3" y="170" width="23.1" height="8.9" rx="2" fill="#e4e4e4"/><rect x="346.9" y="176.3" width="21.7" height="2.3" rx="0.6" fill="#a4a4a4"/><rect x="347.4" y="178.3" width="3.9" height="2.3" fill="#131416"/><rect x="364.3" y="178.3" width="3.9" height="2.3" fill="#131416"/><rect x="347.2" y="172.3" width="3" height="2.1" fill="#d23c2c"/><rect x="365.4" y="172.3" width="3" height="2.1" fill="#d23c2c"/><rect x="355.5" y="174.6" width="4.6" height="1.3" fill="#e6e6e6" opacity=".8"/><rect x="445.1" y="164" width="15.8" height="16.8" rx="2" fill="#7a2a2a"/><rect x="446.1" y="163.2" width="13.8" height="2.4" rx="1.2" fill="#9b5f5f"/><rect x="446.4" y="166" width="13.1" height="5.2" rx="0.8" fill="#2a2e34"/><rect x="445.1" y="177.2" width="15.8" height="2.8" rx="0.6" fill="#571e1e"/><rect x="445.6" y="180" width="2.8" height="2.8" fill="#131416"/><rect x="457.6" y="180" width="2.8" height="2.8" fill="#131416"/><rect x="445.4" y="172.8" width="2.1" height="2.6" fill="#d23c2c"/><rect x="458.4" y="172.8" width="2.1" height="2.6" fill="#d23c2c"/><rect x="451.3" y="175.6" width="3.3" height="1.6" fill="#e6e6e6" opacity=".8"/><path d="M75.5 175.8L77.2 169.4Q83.6 168.1 90 169.4L91.7 175.8z" fill="#8d99a8"/><path d="M76.6 175.1L78.1 170.5H89.1L90.6 175.1z" fill="#2a2e34"/><rect x="73" y="174.5" width="21.3" height="8.9" rx="2" fill="#8d99a8"/><rect x="73.6" y="180.7" width="20" height="2.3" rx="0.6" fill="#656e78"/><rect x="74" y="182.7" width="3.6" height="2.3" fill="#131416"/><rect x="89.6" y="182.7" width="3.6" height="2.3" fill="#131416"/><rect x="74" y="177.6" width="4" height="1.8" fill="#f3efdf" opacity=".9"/><rect x="89.1" y="177.6" width="4" height="1.8" fill="#f3efdf" opacity=".9"/><rect x="78.9" y="177.8" width="9.4" height="2.3" fill="#111" opacity=".45"/><rect x="81.5" y="181.1" width="4.3" height="1.3" fill="#e6e6e6" opacity=".7"/><rect x="396.6" y="164.3" width="29.8" height="20.5" rx="2.9" fill="#ececec"/><rect x="398.4" y="163.3" width="26.1" height="2.9" rx="1.8" fill="#f0f0f0"/><rect x="399.1" y="166.7" width="24.8" height="6.3" rx="1.2" fill="#2a2e34"/><rect x="396.6" y="180.4" width="29.8" height="3.4" rx="0.9" fill="#a9a9a9"/><rect x="397.5" y="183.8" width="5.3" height="3.4" fill="#131416"/><rect x="420.2" y="183.8" width="5.3" height="3.4" fill="#131416"/><rect x="397.2" y="175" width="4" height="3.2" fill="#d23c2c"/><rect x="421.7" y="175" width="4" height="3.2" fill="#d23c2c"/><rect x="408.4" y="178.4" width="6.2" height="2" fill="#e6e6e6" opacity=".8"/><rect x="26.9" y="165.5" width="27.3" height="19.4" rx="2.8" fill="#e9e9e9"/><rect x="28.7" y="164.6" width="23.9" height="2.8" rx="1.7" fill="#eeeeee"/><rect x="29.2" y="167.8" width="22.7" height="6" rx="1.1" fill="#2a2e34"/><rect x="26.9" y="180.7" width="27.3" height="3.2" rx="0.8" fill="#a7a7a7"/><rect x="27.8" y="184" width="4.8" height="3.2" fill="#131416"/><rect x="48.5" y="184" width="4.8" height="3.2" fill="#131416"/><rect x="27.8" y="176.8" width="5.4" height="2.5" fill="#f3efdf" opacity=".9"/><rect x="48" y="176.8" width="5.4" height="2.5" fill="#f3efdf" opacity=".9"/><rect x="34.3" y="177.1" width="12.5" height="3.2" fill="#111" opacity=".45"/><rect x="37.7" y="181.7" width="5.7" height="1.8" fill="#e6e6e6" opacity=".7"/><path d="M139.2 180.5L141.1 172.7Q148.2 171.1 155.2 172.7L157.1 180.5z" fill="#303236"/><path d="M140.4 179.7L142 174.1H154.3L155.9 179.7z" fill="#2a2e34"/><rect x="136.4" y="178.9" width="23.5" height="10.8" rx="2.4" fill="#303236"/><rect x="137.1" y="186.5" width="22.1" height="2.8" rx="0.7" fill="#222426"/><rect x="137.6" y="188.9" width="4" height="2.8" fill="#131416"/><rect x="154.7" y="188.9" width="4" height="2.8" fill="#131416"/><rect x="137.6" y="182.7" width="4.5" height="2.2" fill="#f3efdf" opacity=".9"/><rect x="154.3" y="182.7" width="4.5" height="2.2" fill="#f3efdf" opacity=".9"/><rect x="143" y="182.9" width="10.3" height="2.8" fill="#111" opacity=".45"/><rect x="145.8" y="186.9" width="4.7" height="1.6" fill="#e6e6e6" opacity=".7"/><path d="M243.9 180.9L246 172.7Q254 171.1 262 172.7L264.1 180.9z" fill="#1f2124"/><path d="M245.2 180L247.1 174.2H260.9L262.8 180z" fill="#2a2e34"/><rect x="240.7" y="179.2" width="26.6" height="11.3" rx="2.5" fill="#1f2124"/><rect x="241.5" y="187.1" width="25" height="2.9" rx="0.8" fill="#161719"/><rect x="242" y="189.6" width="4.5" height="2.9" fill="#131416"/><rect x="261.4" y="189.6" width="4.5" height="2.9" fill="#131416"/><rect x="241.7" y="182.1" width="3.5" height="2.7" fill="#d23c2c"/><rect x="262.8" y="182.1" width="3.5" height="2.7" fill="#d23c2c"/><rect x="251.3" y="185" width="5.3" height="1.7" fill="#e6e6e6" opacity=".8"/><path d="M358.8 189.7L360.7 182.8Q367.8 181.4 374.8 182.8L376.7 189.7z" fill="#a82f2f"/><path d="M360 189L361.7 184H373.9L375.5 189z" fill="#2a2e34"/><rect x="356" y="188.3" width="23.5" height="9.6" rx="2.1" fill="#a82f2f"/><rect x="356.7" y="195" width="22.1" height="2.5" rx="0.6" fill="#782121"/><rect x="357.2" y="197.1" width="4" height="2.5" fill="#131416"/><rect x="374.4" y="197.1" width="4" height="2.5" fill="#131416"/><rect x="357" y="190.8" width="3.1" height="2.3" fill="#d23c2c"/><rect x="375.5" y="190.8" width="3.1" height="2.3" fill="#d23c2c"/><rect x="365.4" y="193.2" width="4.7" height="1.4" fill="#e6e6e6" opacity=".8"/><rect x="419.9" y="173.9" width="25.3" height="10.6" rx="3.2" fill="#6a3030"/><rect x="421.6" y="176.6" width="22" height="6.1" rx="1" fill="#2a2e34"/><rect x="415.9" y="182.4" width="33.3" height="14.4" rx="1.6" fill="#6a3030"/><rect x="416.9" y="182.9" width="31.3" height="1.6" fill="#8f6363"/><rect x="416.6" y="194.1" width="31.9" height="3.7" rx="1" fill="#a9aaab"/><rect x="417.6" y="196.8" width="5.7" height="3.7" fill="#131416"/><rect x="441.9" y="196.8" width="5.7" height="3.7" fill="#131416"/><rect x="417.2" y="187.2" width="4.3" height="3.5" fill="#d23c2c"/><rect x="443.5" y="187.2" width="4.3" height="3.5" fill="#d23c2c"/><rect x="429.2" y="190.9" width="6.7" height="2.1" fill="#e6e6e6" opacity=".8"/><path d="M166.9 189.6L168.9 180.4Q176.3 178.5 183.8 180.4L185.8 189.6z" fill="#c1bcb5"/><path d="M168.1 188.6L169.9 182H182.8L184.5 188.6z" fill="#2a2e34"/><rect x="163.9" y="187.7" width="24.8" height="12.7" rx="2.8" fill="#c1bcb5"/><rect x="164.7" y="196.6" width="23.4" height="3.3" rx="0.8" fill="#8a8782"/><rect x="165.2" y="199.4" width="4.2" height="3.3" fill="#131416"/><rect x="183.3" y="199.4" width="4.2" height="3.3" fill="#131416"/><rect x="165.2" y="192.2" width="4.7" height="2.6" fill="#f3efdf" opacity=".9"/><rect x="182.8" y="192.2" width="4.7" height="2.6" fill="#f3efdf" opacity=".9"/><rect x="170.9" y="192.4" width="10.9" height="3.3" fill="#111" opacity=".45"/><rect x="173.9" y="197.1" width="5" height="1.9" fill="#e6e6e6" opacity=".7"/><path d="M313.9 200.2L316.4 190.6Q325.4 188.7 334.5 190.6L336.9 200.2z" fill="#212326"/><path d="M315.4 199.2L317.6 192.4H333.2L335.4 199.2z" fill="#2a2e34"/><rect x="310.3" y="198.2" width="30.2" height="13.2" rx="2.9" fill="#212326"/><rect x="311.2" y="207.5" width="28.4" height="3.4" rx="0.9" fill="#17191b"/><rect x="311.8" y="210.4" width="5.1" height="3.4" fill="#131416"/><rect x="333.9" y="210.4" width="5.1" height="3.4" fill="#131416"/><rect x="311.5" y="201.6" width="3.9" height="3.2" fill="#d23c2c"/><rect x="335.4" y="201.6" width="3.9" height="3.2" fill="#d23c2c"/><rect x="322.4" y="205" width="6" height="2" fill="#e6e6e6" opacity=".8"/><path d="M383.9 205.1L386.2 199.1Q394.8 197.8 403.5 199.1L405.8 205.1z" fill="#2d3442"/><path d="M385.3 204.5L387.3 200.2H402.3L404.4 204.5z" fill="#2a2e34"/><rect x="380.4" y="203.9" width="28.8" height="8.4" rx="1.9" fill="#2d3442"/><rect x="381.3" y="209.8" width="27.1" height="2.2" rx="0.6" fill="#20252f"/><rect x="381.9" y="211.7" width="4.9" height="2.2" fill="#131416"/><rect x="402.9" y="211.7" width="4.9" height="2.2" fill="#131416"/><rect x="381.6" y="206.1" width="3.7" height="2" fill="#d23c2c"/><rect x="404.4" y="206.1" width="3.7" height="2" fill="#d23c2c"/><rect x="392" y="208.2" width="5.8" height="1.2" fill="#e6e6e6" opacity=".8"/><rect x="92.7" y="188.9" width="31.1" height="24.2" rx="3.5" fill="#b7b8b6"/><rect x="94.6" y="187.8" width="27.2" height="3.5" rx="2.1" fill="#c9c9c8"/><rect x="95.3" y="191.8" width="25.9" height="7.5" rx="1.4" fill="#2a2e34"/><rect x="92.7" y="208" width="31.1" height="4" rx="1" fill="#838483"/><rect x="93.7" y="212" width="5.5" height="4" fill="#131416"/><rect x="117.3" y="212" width="5.5" height="4" fill="#131416"/><rect x="93.7" y="203.1" width="6.2" height="3.2" fill="#f3efdf" opacity=".9"/><rect x="116.7" y="203.1" width="6.2" height="3.2" fill="#f3efdf" opacity=".9"/><rect x="101.1" y="203.4" width="14.3" height="4" fill="#111" opacity=".45"/><rect x="105" y="209.1" width="6.5" height="2.3" fill="#e6e6e6" opacity=".7"/><path d="M255.9 212.1L258.6 201.1Q268.8 198.8 279.1 201.1L281.8 212.1z" fill="#ededed"/><path d="M257.6 211L260 203H277.7L280.1 211z" fill="#2a2e34"/><rect x="251.8" y="209.9" width="34.2" height="15.3" rx="3.4" fill="#ededed"/><rect x="252.8" y="220.6" width="32.1" height="4" rx="1" fill="#aaaaaa"/><rect x="253.5" y="224" width="5.8" height="4" fill="#131416"/><rect x="278.4" y="224" width="5.8" height="4" fill="#131416"/><rect x="253.1" y="213.8" width="4.4" height="3.7" fill="#d23c2c"/><rect x="280.1" y="213.8" width="4.4" height="3.7" fill="#d23c2c"/><rect x="265.4" y="217.8" width="6.8" height="2.3" fill="#e6e6e6" opacity=".8"/><rect x="412.4" y="218.6" width="44.7" height="35.4" rx="5.1" fill="#5a5d61"/><rect x="415.2" y="216.9" width="39.1" height="5.1" rx="3" fill="#838588"/><rect x="416.1" y="222.8" width="37.3" height="11" rx="2" fill="#2a2e34"/><rect x="412.4" y="246.4" width="44.7" height="5.9" rx="1.5" fill="#404245"/><rect x="413.8" y="252.3" width="7.9" height="5.9" fill="#131416"/><rect x="447.8" y="252.3" width="7.9" height="5.9" fill="#131416"/><rect x="413.3" y="237.1" width="6.1" height="5.5" fill="#d23c2c"/><rect x="450.1" y="237.1" width="6.1" height="5.5" fill="#d23c2c"/><rect x="430.1" y="243" width="9.3" height="3.4" fill="#e6e6e6" opacity=".8"/><path d="M348.5 248.1L351.8 234.2Q364.2 231.4 376.6 234.2L379.9 248.1z" fill="#25282e"/><path d="M350.6 246.7L353.5 236.7H375L377.8 246.7z" fill="#2a2e34"/><rect x="343.6" y="245.2" width="41.3" height="19.2" rx="4.3" fill="#25282e"/><rect x="344.8" y="258.7" width="38.8" height="5" rx="1.3" fill="#1a1c21"/><rect x="345.7" y="263" width="7" height="5" fill="#131416"/><rect x="375.8" y="263" width="7" height="5" fill="#131416"/><rect x="345.2" y="250.2" width="5.4" height="4.6" fill="#d23c2c"/><rect x="377.8" y="250.2" width="5.4" height="4.6" fill="#d23c2c"/><rect x="360.1" y="255.2" width="8.3" height="2.8" fill="#e6e6e6" opacity=".8"/><path d="M132.8 250.4L136.2 235.7Q149.3 232.7 162.3 235.7L165.8 250.4z" fill="#2b2e35"/><path d="M134.9 248.9L138 238.3H160.6L163.6 248.9z" fill="#2a2e34"/><rect x="127.5" y="247.4" width="43.5" height="20.4" rx="4.5" fill="#2b2e35"/><rect x="128.8" y="261.7" width="40.9" height="5.3" rx="1.4" fill="#1e2126"/><rect x="129.7" y="266.2" width="7.4" height="5.3" fill="#131416"/><rect x="161.4" y="266.2" width="7.4" height="5.3" fill="#131416"/><rect x="129.7" y="254.5" width="8.3" height="4.1" fill="#f3efdf" opacity=".9"/><rect x="160.6" y="254.5" width="8.3" height="4.1" fill="#f3efdf" opacity=".9"/><rect x="139.7" y="254.9" width="19.1" height="5.3" fill="#111" opacity=".45"/><rect x="144.9" y="262.5" width="8.7" height="3" fill="#e6e6e6" opacity=".7"/><rect x="31.8" y="241.2" width="49.4" height="42.1" rx="6" fill="#a3343a"/><rect x="34.9" y="239.2" width="43.2" height="6" rx="3.6" fill="#ba666b"/><rect x="36" y="246.3" width="41.2" height="13" rx="2.4" fill="#2a2e34"/><rect x="31.8" y="274.3" width="49.4" height="7" rx="1.8" fill="#752529"/><rect x="33.4" y="281.3" width="8.7" height="7" fill="#131416"/><rect x="71" y="281.3" width="8.7" height="7" fill="#131416"/><rect x="33.4" y="265.8" width="9.8" height="5.5" fill="#f3efdf" opacity=".9"/><rect x="69.9" y="265.8" width="9.8" height="5.5" fill="#f3efdf" opacity=".9"/><rect x="45.2" y="266.3" width="22.6" height="7" fill="#111" opacity=".45"/><rect x="51.4" y="276.3" width="10.3" height="4" fill="#e6e6e6" opacity=".7"/><rect x="454.6" y="266.3" width="44.7" height="38.4" rx="5.5" fill="#2a2c30"/><rect x="457.3" y="264.4" width="39.1" height="5.5" rx="3.3" fill="#5f6063"/><rect x="458.3" y="270.8" width="37.3" height="11.9" rx="2.2" fill="#2a2e34"/><rect x="454.6" y="296.4" width="44.7" height="6.4" rx="1.6" fill="#1e1f22"/><rect x="455.9" y="302.8" width="7.9" height="6.4" fill="#131416"/><rect x="490" y="302.8" width="7.9" height="6.4" fill="#131416"/><rect x="455.5" y="286.4" width="6.1" height="5.9" fill="#d23c2c"/><rect x="492.3" y="286.4" width="6.1" height="5.9" fill="#d23c2c"/><rect x="472.3" y="292.8" width="9.3" height="3.7" fill="#e6e6e6" opacity=".8"/><rect x="361.3" y="248.4" width="52.9" height="26.1" rx="7.8" fill="#ececec"/><rect x="364.8" y="255" width="46" height="15" rx="2.3" fill="#2a2e34"/><rect x="352.9" y="269.3" width="69.7" height="35.2" rx="3.9" fill="#ececec"/><rect x="355" y="270.6" width="65.5" height="3.9" fill="#f0f0f0"/><rect x="354.3" y="298" width="66.9" height="9.1" rx="2.3" fill="#a9aaab"/><rect x="356.4" y="304.5" width="11.8" height="9.1" fill="#131416"/><rect x="407.2" y="304.5" width="11.8" height="9.1" fill="#131416"/><rect x="355.7" y="281" width="9.1" height="8.5" fill="#d23c2c"/><rect x="410.7" y="281" width="9.1" height="8.5" fill="#d23c2c"/><rect x="380.8" y="290.2" width="13.9" height="5.2" fill="#e6e6e6" opacity=".8"/><rect x="260.9" y="257.5" width="56.2" height="52.2" rx="7" fill="#b9b3a8"/><rect x="264.4" y="255" width="49.2" height="7.5" rx="4.2" fill="#cac6bd"/><rect x="265.6" y="263.7" width="46.9" height="16.1" rx="2.8" fill="#2a2e34"/><rect x="260.9" y="298.5" width="56.2" height="8.7" rx="2.1" fill="#858078"/><rect x="262.7" y="307.2" width="10" height="8.7" fill="#131416"/><rect x="305.4" y="307.2" width="10" height="8.7" fill="#131416"/><rect x="262.1" y="284.8" width="7.6" height="8.1" fill="#d23c2c"/><rect x="308.3" y="284.8" width="7.6" height="8.1" fill="#d23c2c"/><rect x="283.2" y="293.5" width="11.7" height="5" fill="#e6e6e6" opacity=".8"/></g></svg></div>
<div class="abs" style="left:940px;top:318px;width:461px;height:330px;overflow:hidden"><svg width="461" height="330" viewBox="0 0 461 330" preserveAspectRatio="none"><defs><linearGradient id="h2s" x1="0" y1="0" x2="0" y2="1"><stop offset="0" stop-color="#b5c7de"/><stop offset="1" stop-color="#d4dde8"/></linearGradient><linearGradient id="h2r" x1="0" y1="0" x2="0" y2="1"><stop offset="0" stop-color="#696b6d"/><stop offset="1" stop-color="#5d5f60"/></linearGradient><linearGradient id="h2q" x1="0" y1="0" x2="0" y2="1"><stop offset="0" stop-color="#77797b"/><stop offset=".4" stop-color="#8b8c8d"/><stop offset="1" stop-color="#9a9a9a"/></linearGradient><linearGradient id="h2w" x1="0" y1="0" x2="0" y2="1"><stop offset="0" stop-color="#adb8be"/><stop offset="1" stop-color="#97a5ad"/></linearGradient><filter id="h2b" x="-2%" y="-2%" width="104%" height="104%"><feGaussianBlur stdDeviation="0.7"/></filter><filter id="h2b2" x="-5%" y="-5%" width="110%" height="110%"><feGaussianBlur stdDeviation="2.2"/></filter></defs><g filter="url(#h2b)"><rect x="-5" y="-5" width="471" height="90" fill="url(#h2s)"/><path d="M-5 56C60 52 120 54 180 56H466V70H-5z" fill="#a9bbcd"/><rect x="-5" y="66" width="471" height="270" fill="url(#h2r)"/><path d="M229 76L272 78L466 150V336H236z" fill="url(#h2q)"/><path d="M290 72H466V124L300 80z" fill="url(#h2w)"/><path d="M280 76L466 119V142L276 78z" fill="#8e9569"/><path d="M272 78L466 129V152L270 79z" fill="#77797a"/><path d="M268 78L466 139V153L268 80z" fill="#a3a5a2"/><path d="M268 80L466 151V156L268 81z" fill="#4f5152"/><path d="M-5 66H215L205 76L-5 152z" fill="#a09f77"/><path d="M70 80h28v16H72z" fill="#b7c2ca"/><path d="M-5 153L205 76L208 78L-5 165z" fill="#dcdcda"/><path d="M-5 141L205 74L205 76L-5 153z" fill="#8d8e88"/><path d="M70 62c20-6 50-6 80-2 20-2 40 0 60 4v8H70z" fill="#6c7f86"/><path d="M300 62h166v10h-166z" fill="#8d9a9a"/><path d="M330 69h136v6h-136z" fill="#aab0a8"/><path d="M262 76c2-10 10-14 22-12 8-6 20-4 28 0 10-4 22-2 30 2 10-2 24 0 34 6v6H262z" fill="#44554f"/><path d="M92 92c-4-10 0-22 12-26 8-8 24-8 34-4 12-4 26-2 36 2 14-2 30 2 40 8l-4 6c-20 4-40 14-60 18-14-8-36-6-58-4z" fill="#37483d"/><path d="M110 70c10-6 30-6 44 0 10 2 18 4 24 8-20 4-50 2-68-8z" fill="#465a4b"/><rect x="56" y="47" width="22" height="14" fill="#c9c9c6"/><path d="M-5 46c8-6 18-4 22-8 8-4 22-2 30 2 10 2 18 8 22 16 8 6 10 16 6 24 6 6 8 14 4 20-4 6-12 8-18 6-2 8-10 12-18 12-8 8-24 12-34 10-6 2-10 2-14 0z" fill="#36453a"/><path d="M8 58c8-8 22-6 30 0 10 0 16 8 12 16-12 6-30 4-42-4z" fill="#43553f"/><path d="M0 100c10-4 24-2 34 4 8 4 8 12 0 16-10 2-24 0-34-6z" fill="#2a372c"/><rect x="179" y="12" width="46" height="54" fill="#d4d4d1"/><path d="M183 14v52M189 14v52M195 14v52M201 14v52M207 14v52M213 14v52M219 14v52" stroke="#a6abb2" stroke-width="1.800"/><rect x="192" y="9" width="20" height="5" fill="#d4d4d1"/><rect x="333" y="28" width="27" height="38" fill="#93a4ba"/><rect x="346" y="27" width="14" height="39" fill="#c4cdd8"/><path d="M349 30v34M353 30v34M357 30v34" stroke="#a9b5c4" stroke-width="1"/><rect x="362" y="46" width="13" height="20" fill="#d9ccb2"/><rect x="362" y="46" width="5" height="20" fill="#c2b59c"/><rect x="403" y="42" width="43" height="24" fill="#d2d5d8"/><rect x="403" y="44" width="5" height="22" fill="#aab2bc"/><path d="M409 46h36M409 49.500h36M409 53h36M409 56.500h36M409 60h36M409 63.500h36" stroke="#9aa2ac" stroke-width="1.500"/><rect x="150" y="56" width="40" height="10" fill="#aeb8c3"/><path d="M221 78L150 336H180L221.500 78z" fill="#4b4d4f"/><path d="M222 76L184 336H204L225 76z" fill="#36383a"/><path d="M225 76L203 336H213L227 76z" fill="#3d675d"/><path d="M227 76L212 336H223L229 76z" fill="#c8c8c3"/><path d="M230.500 78L239.800 336H243.600L232 78z" fill="#d6b036"/><path d="M221 78L177 336H180L222 78z" fill="#c4a236"/><rect x="219" y="68" width="17" height="6" fill="#2f7a55"/><rect x="213" y="178" width="11" height="20" fill="#e2e2e0"/><path d="M0.0 172.3L15.7 165.0" stroke="#eeeeee" stroke-width="2.200"/><path d="M1.0 193.2L9.4 189.7" stroke="#eeeeee" stroke-width="2.200"/><path d="M31.4 206.8L40.8 202.2" stroke="#eeeeee" stroke-width="2.200"/><path d="M0.0 228.8L10.5 221.4" stroke="#eeeeee" stroke-width="2.200"/><path d="M17.8 275.8L27.2 266.4" stroke="#eeeeee" stroke-width="2.200"/><path d="M56.4 238.2L59.6 236.1" stroke="#eeeeee" stroke-width="2.200"/><path d="M80.5 214.1L86.8 209.3" stroke="#eeeeee" stroke-width="2.200"/><path d="M116.0 254.9L123.4 245.5" stroke="#eeeeee" stroke-width="2.200"/><path d="M88.9 298.8L99.3 284.2" stroke="#eeeeee" stroke-width="2.200"/><path d="M58.5 188.0L61.7 185.9" stroke="#eeeeee" stroke-width="2.200"/><path d="M146.4 203.7L151.6 198.5" stroke="#eeeeee" stroke-width="2.200"/><path d="M62 152L67 149" stroke="#eeeeee" stroke-width="2.200"/><path d="M95 150L99 147.5" stroke="#eeeeee" stroke-width="2.200"/><path d="M120 146L124 143.5" stroke="#eeeeee" stroke-width="2.200"/><path d="M150 140L153 138" stroke="#eeeeee" stroke-width="2.200"/><path d="M30 160L37 156.5" stroke="#eeeeee" stroke-width="2.200"/><path d="M165 150L168 147.5" stroke="#eeeeee" stroke-width="2.200"/><path d="M188 120L190 118" stroke="#eeeeee" stroke-width="2.200"/><path d="M140 128L143 126" stroke="#eeeeee" stroke-width="2.200"/><path d="M278.1 173.4L281.2 178.6" stroke="#f2f2f2" stroke-width="2.400"/><path d="M293.8 205.8L297.9 213.1" stroke="#f2f2f2" stroke-width="2.400"/><path d="M353.4 206.8L360.7 214.1" stroke="#f2f2f2" stroke-width="2.400"/><path d="M306.3 230.9L310.5 237.1" stroke="#f2f2f2" stroke-width="2.400"/><path d="M376.4 231.9L384.7 240.3" stroke="#f2f2f2" stroke-width="2.400"/><path d="M324.1 268.5L331.4 282.1" stroke="#f2f2f2" stroke-width="2.400"/><path d="M348.1 319.7L355.4 332.3" stroke="#f2f2f2" stroke-width="2.400"/><path d="M263 150L264.5 155" stroke="#f2f2f2" stroke-width="2.400"/><path d="M300 150L302 155" stroke="#f2f2f2" stroke-width="2.400"/><path d="M340 158L343 164" stroke="#f2f2f2" stroke-width="2.400"/><path d="M252 130L253 134" stroke="#f2f2f2" stroke-width="2.400"/><path d="M280 128L281.5 132" stroke="#f2f2f2" stroke-width="2.400"/><path d="M278 319.500l16.500 8.500 16-8.500" fill="none" stroke="#f2f2f2" stroke-width="2.400"/><rect x="269.5" y="80.1" width="3.8" height="1.1" fill="#26282b" opacity=".75"/><rect x="271.2" y="79" width="2.5" height="2" rx="0.5" fill="#a03434"/><rect x="271.6" y="79.2" width="1.8" height="0.6" fill="#1d2025" opacity=".8"/><rect x="265.8" y="80.1" width="3.8" height="1.1" fill="#26282b" opacity=".75"/><rect x="267.5" y="79" width="2.5" height="2" rx="0.5" fill="#a03434"/><rect x="267.9" y="79.2" width="1.8" height="0.6" fill="#1d2025" opacity=".8"/><rect x="208.2" y="80.2" width="3.8" height="1.1" fill="#26282b" opacity=".75"/><rect x="209.9" y="79" width="2.5" height="2" rx="0.5" fill="#55585e"/><rect x="210.3" y="79.2" width="1.8" height="0.6" fill="#1d2025" opacity=".8"/><rect x="262" y="80.2" width="3.8" height="1.1" fill="#26282b" opacity=".75"/><rect x="263.7" y="79" width="2.5" height="2" rx="0.5" fill="#a03434"/><rect x="264.1" y="79.2" width="1.8" height="0.6" fill="#1d2025" opacity=".8"/><rect x="209.9" y="80.3" width="3.8" height="1.1" fill="#26282b" opacity=".75"/><rect x="211.7" y="79.2" width="2.5" height="2" rx="0.5" fill="#b8bcc0"/><rect x="212.1" y="79.4" width="1.8" height="0.6" fill="#1d2025" opacity=".8"/><rect x="258.2" y="80.5" width="3.8" height="1.1" fill="#26282b" opacity=".75"/><rect x="260" y="79.3" width="2.5" height="2" rx="0.5" fill="#2a2c30"/><rect x="260.3" y="79.5" width="1.8" height="0.6" fill="#1d2025" opacity=".8"/><rect x="254" y="80.5" width="3.8" height="1.1" fill="#26282b" opacity=".75"/><rect x="255.8" y="79.3" width="2.6" height="2" rx="0.5" fill="#1f2226"/><rect x="256.1" y="79.5" width="1.8" height="0.6" fill="#1d2025" opacity=".8"/><rect x="212.6" y="80.6" width="3.8" height="1.2" fill="#26282b" opacity=".75"/><rect x="214.4" y="79.4" width="2.6" height="2.1" rx="0.5" fill="#c9c9c6"/><rect x="214.8" y="79.6" width="1.8" height="0.6" fill="#1d2025" opacity=".8"/><rect x="259.5" y="80.7" width="3.9" height="1.2" fill="#26282b" opacity=".75"/><rect x="261.3" y="79.5" width="2.6" height="2.1" rx="0.5" fill="#f0f0f0"/><rect x="261.7" y="79.7" width="1.8" height="0.6" fill="#1d2025" opacity=".8"/><rect x="214" y="80.7" width="3.9" height="1.2" fill="#26282b" opacity=".75"/><rect x="215.8" y="79.5" width="2.6" height="2.1" rx="0.5" fill="#8a8f96"/><rect x="216.2" y="79.7" width="1.8" height="0.6" fill="#1d2025" opacity=".8"/><rect x="205.7" y="80.7" width="3.9" height="1.2" fill="#26282b" opacity=".75"/><rect x="207.5" y="79.5" width="2.6" height="2.1" rx="0.5" fill="#c9c9c6"/><rect x="207.9" y="79.7" width="1.8" height="0.6" fill="#1d2025" opacity=".8"/><rect x="253.2" y="80.7" width="3.9" height="1.2" fill="#26282b" opacity=".75"/><rect x="255" y="79.6" width="2.6" height="2.1" rx="0.5" fill="#f0f0f0"/><rect x="255.4" y="79.8" width="1.8" height="0.6" fill="#1d2025" opacity=".8"/><rect x="209.9" y="80.8" width="3.9" height="1.2" fill="#26282b" opacity=".75"/><rect x="211.7" y="79.6" width="2.6" height="2.1" rx="0.5" fill="#2a2c30"/><rect x="212.1" y="79.8" width="1.8" height="0.6" fill="#1d2025" opacity=".8"/><rect x="210.2" y="80.8" width="3.9" height="1.2" fill="#26282b" opacity=".75"/><rect x="212" y="79.6" width="2.6" height="2.1" rx="0.5" fill="#2b2e36"/><rect x="212.4" y="79.8" width="1.8" height="0.6" fill="#1d2025" opacity=".8"/><rect x="257.1" y="80.8" width="3.9" height="1.2" fill="#26282b" opacity=".75"/><rect x="258.9" y="79.6" width="2.6" height="2.1" rx="0.5" fill="#e4e4e4"/><rect x="259.3" y="79.8" width="1.8" height="0.7" fill="#1d2025" opacity=".8"/><rect x="206.3" y="80.9" width="3.9" height="1.2" fill="#26282b" opacity=".75"/><rect x="208.2" y="79.7" width="2.6" height="2.1" rx="0.5" fill="#55585e"/><rect x="208.6" y="80" width="1.8" height="0.7" fill="#1d2025" opacity=".8"/><rect x="264.4" y="81.3" width="4" height="1.2" fill="#26282b" opacity=".75"/><rect x="266.3" y="80.1" width="2.7" height="2.1" rx="0.5" fill="#1f2226"/><rect x="266.7" y="80.3" width="1.9" height="0.7" fill="#1d2025" opacity=".8"/><rect x="242.3" y="81.3" width="4" height="1.2" fill="#26282b" opacity=".75"/><rect x="244.2" y="80.1" width="2.7" height="2.1" rx="0.5" fill="#1f2226"/><rect x="244.6" y="80.3" width="1.9" height="0.7" fill="#1d2025" opacity=".8"/><rect x="202.1" y="81.3" width="4" height="1.2" fill="#26282b" opacity=".75"/><rect x="204" y="80.1" width="2.7" height="2.1" rx="0.5" fill="#a03434"/><rect x="204.4" y="80.3" width="1.9" height="0.7" fill="#1d2025" opacity=".8"/><rect x="270.4" y="81.5" width="4.1" height="1.2" fill="#26282b" opacity=".75"/><rect x="272.3" y="80.2" width="2.7" height="2.2" rx="0.5" fill="#8a8f96"/><rect x="272.7" y="80.5" width="1.9" height="0.7" fill="#1d2025" opacity=".8"/><rect x="243.3" y="81.6" width="4.1" height="1.2" fill="#26282b" opacity=".75"/><rect x="245.2" y="80.3" width="2.7" height="2.2" rx="0.5" fill="#f0f0f0"/><rect x="245.6" y="80.6" width="1.9" height="0.7" fill="#1d2025" opacity=".8"/><rect x="215.9" y="81.6" width="4.1" height="1.2" fill="#26282b" opacity=".75"/><rect x="217.8" y="80.4" width="2.7" height="2.2" rx="0.5" fill="#2a2c30"/><rect x="218.2" y="80.6" width="1.9" height="0.7" fill="#1d2025" opacity=".8"/><rect x="236" y="81.7" width="4.1" height="1.2" fill="#26282b" opacity=".75"/><rect x="237.9" y="80.4" width="2.7" height="2.2" rx="0.5" fill="#2a2c30"/><rect x="238.3" y="80.6" width="1.9" height="0.7" fill="#1d2025" opacity=".8"/><rect x="250.7" y="81.7" width="4.1" height="1.2" fill="#26282b" opacity=".75"/><rect x="252.6" y="80.4" width="2.7" height="2.2" rx="0.5" fill="#3a3d44"/><rect x="253" y="80.7" width="1.9" height="0.7" fill="#1d2025" opacity=".8"/><rect x="201.7" y="81.9" width="4.1" height="1.2" fill="#26282b" opacity=".75"/><rect x="203.7" y="80.6" width="2.8" height="2.2" rx="0.6" fill="#b8bcc0"/><rect x="204.1" y="80.8" width="1.9" height="0.7" fill="#1d2025" opacity=".8"/><rect x="231.9" y="82" width="4.2" height="1.3" fill="#26282b" opacity=".75"/><rect x="233.8" y="80.8" width="2.8" height="2.2" rx="0.6" fill="#2a2c30"/><rect x="234.2" y="81" width="1.9" height="0.7" fill="#1d2025" opacity=".8"/><rect x="212.9" y="82.1" width="4.2" height="1.3" fill="#26282b" opacity=".75"/><rect x="214.8" y="80.8" width="2.8" height="2.2" rx="0.6" fill="#c9c9c6"/><rect x="215.3" y="81" width="2" height="0.7" fill="#1d2025" opacity=".8"/><rect x="218.2" y="82.2" width="4.2" height="1.3" fill="#26282b" opacity=".75"/><rect x="220.2" y="80.9" width="2.8" height="2.2" rx="0.6" fill="#2a2c30"/><rect x="220.6" y="81.1" width="2" height="0.7" fill="#1d2025" opacity=".8"/><rect x="242" y="82.4" width="4.3" height="1.3" fill="#26282b" opacity=".75"/><rect x="243.9" y="81.1" width="2.8" height="2.3" rx="0.6" fill="#f0f0f0"/><rect x="244.4" y="81.3" width="2" height="0.7" fill="#1d2025" opacity=".8"/><rect x="203" y="82.4" width="4.3" height="1.3" fill="#26282b" opacity=".75"/><rect x="204.9" y="81.1" width="2.8" height="2.3" rx="0.6" fill="#55585e"/><rect x="205.4" y="81.4" width="2" height="0.7" fill="#1d2025" opacity=".8"/><rect x="257.7" y="82.5" width="4.3" height="1.3" fill="#26282b" opacity=".75"/><rect x="259.7" y="81.2" width="2.9" height="2.3" rx="0.6" fill="#dcdcdc"/><rect x="260.1" y="81.5" width="2" height="0.7" fill="#1d2025" opacity=".8"/><rect x="247.5" y="82.6" width="4.3" height="1.3" fill="#26282b" opacity=".75"/><rect x="249.5" y="81.3" width="2.9" height="2.3" rx="0.6" fill="#55585e"/><rect x="249.9" y="81.6" width="2" height="0.7" fill="#1d2025" opacity=".8"/><rect x="267.4" y="82.7" width="4.3" height="1.3" fill="#26282b" opacity=".75"/><rect x="269.4" y="81.4" width="2.9" height="2.3" rx="0.6" fill="#8a8f96"/><rect x="269.9" y="81.6" width="2" height="0.7" fill="#1d2025" opacity=".8"/><rect x="213.5" y="82.7" width="4.3" height="1.3" fill="#26282b" opacity=".75"/><rect x="215.6" y="81.4" width="2.9" height="2.3" rx="0.6" fill="#c9c9c6"/><rect x="216" y="81.6" width="2" height="0.7" fill="#1d2025" opacity=".8"/><rect x="272.4" y="83.2" width="4.4" height="1.3" fill="#26282b" opacity=".75"/><rect x="274.5" y="81.8" width="3" height="2.4" rx="0.6" fill="#8a8f96"/><rect x="274.9" y="82.1" width="2.1" height="0.7" fill="#1d2025" opacity=".8"/><rect x="274.4" y="83.2" width="4.4" height="1.3" fill="#26282b" opacity=".75"/><rect x="276.4" y="81.8" width="3" height="2.4" rx="0.6" fill="#f0f0f0"/><rect x="276.9" y="82.1" width="2.1" height="0.7" fill="#1d2025" opacity=".8"/><rect x="205.8" y="83.2" width="4.4" height="1.3" fill="#26282b" opacity=".75"/><rect x="207.8" y="81.9" width="3" height="2.4" rx="0.6" fill="#55585e"/><rect x="208.3" y="82.1" width="2.1" height="0.7" fill="#1d2025" opacity=".8"/><rect x="212.5" y="83.4" width="4.5" height="1.3" fill="#26282b" opacity=".75"/><rect x="214.6" y="82" width="3" height="2.4" rx="0.6" fill="#b8bcc0"/><rect x="215" y="82.3" width="2.1" height="0.7" fill="#1d2025" opacity=".8"/><rect x="232.1" y="83.4" width="4.5" height="1.3" fill="#26282b" opacity=".75"/><rect x="234.2" y="82" width="3" height="2.4" rx="0.6" fill="#2b2e36"/><rect x="234.6" y="82.3" width="2.1" height="0.7" fill="#1d2025" opacity=".8"/><rect x="233.1" y="84" width="4.6" height="1.4" fill="#26282b" opacity=".75"/><rect x="235.3" y="82.6" width="3.1" height="2.5" rx="0.6" fill="#c9c9c6"/><rect x="235.7" y="82.9" width="2.2" height="0.8" fill="#1d2025" opacity=".8"/><rect x="242.6" y="84.2" width="4.7" height="1.4" fill="#26282b" opacity=".75"/><rect x="244.8" y="82.8" width="3.1" height="2.5" rx="0.6" fill="#dcdcdc"/><rect x="245.2" y="83" width="2.2" height="0.8" fill="#1d2025" opacity=".8"/><rect x="251.9" y="84.2" width="4.7" height="1.4" fill="#26282b" opacity=".75"/><rect x="254.1" y="82.8" width="3.1" height="2.5" rx="0.6" fill="#1f2226"/><rect x="254.6" y="83" width="2.2" height="0.8" fill="#1d2025" opacity=".8"/><rect x="198.9" y="84.3" width="4.7" height="1.4" fill="#26282b" opacity=".75"/><rect x="201.1" y="82.9" width="3.1" height="2.5" rx="0.6" fill="#2b2e36"/><rect x="201.6" y="83.2" width="2.2" height="0.8" fill="#1d2025" opacity=".8"/><rect x="267.1" y="84.8" width="4.8" height="1.4" fill="#26282b" opacity=".75"/><rect x="269.4" y="83.4" width="3.2" height="2.6" rx="0.6" fill="#2a2c30"/><rect x="269.9" y="83.6" width="2.2" height="0.8" fill="#1d2025" opacity=".8"/><rect x="263.2" y="85.1" width="4.9" height="1.5" fill="#26282b" opacity=".75"/><rect x="265.4" y="83.6" width="3.2" height="2.6" rx="0.6" fill="#3a3d44"/><rect x="265.9" y="83.9" width="2.3" height="0.8" fill="#1d2025" opacity=".8"/><rect x="242.6" y="85.3" width="4.9" height="1.5" fill="#26282b" opacity=".75"/><rect x="244.9" y="83.8" width="3.3" height="2.6" rx="0.7" fill="#3a3d44"/><rect x="245.3" y="84.1" width="2.3" height="0.8" fill="#1d2025" opacity=".8"/><rect x="278.4" y="85.3" width="4.9" height="1.5" fill="#26282b" opacity=".75"/><rect x="280.7" y="83.8" width="3.3" height="2.6" rx="0.7" fill="#3a3d44"/><rect x="281.2" y="84.1" width="2.3" height="0.8" fill="#1d2025" opacity=".8"/><rect x="248.8" y="85.4" width="4.9" height="1.5" fill="#26282b" opacity=".75"/><rect x="251.1" y="83.9" width="3.3" height="2.6" rx="0.7" fill="#b8bcc0"/><rect x="251.6" y="84.2" width="2.3" height="0.8" fill="#1d2025" opacity=".8"/><rect x="235.5" y="85.5" width="5" height="1.5" fill="#26282b" opacity=".75"/><rect x="237.8" y="84" width="3.3" height="2.6" rx="0.7" fill="#3a3d44"/><rect x="238.3" y="84.2" width="2.3" height="0.8" fill="#1d2025" opacity=".8"/><rect x="257.2" y="85.8" width="5" height="1.5" fill="#26282b" opacity=".75"/><rect x="259.5" y="84.3" width="3.4" height="2.7" rx="0.7" fill="#a03434"/><rect x="260.1" y="84.5" width="2.3" height="0.8" fill="#1d2025" opacity=".8"/><rect x="198.3" y="85.8" width="5" height="1.5" fill="#26282b" opacity=".75"/><rect x="200.7" y="84.3" width="3.4" height="2.7" rx="0.7" fill="#3a3d44"/><rect x="201.2" y="84.6" width="2.3" height="0.8" fill="#1d2025" opacity=".8"/><rect x="197.6" y="85.9" width="5.1" height="1.5" fill="#26282b" opacity=".75"/><rect x="199.9" y="84.4" width="3.4" height="2.7" rx="0.7" fill="#dcdcdc"/><rect x="200.4" y="84.7" width="2.4" height="0.8" fill="#1d2025" opacity=".8"/><rect x="282.7" y="86" width="5.1" height="1.5" fill="#26282b" opacity=".75"/><rect x="285.1" y="84.5" width="3.4" height="2.7" rx="0.7" fill="#3a3d44"/><rect x="285.6" y="84.7" width="2.4" height="0.8" fill="#1d2025" opacity=".8"/><rect x="202.9" y="86" width="5.1" height="1.5" fill="#26282b" opacity=".75"/><rect x="205.3" y="84.5" width="3.4" height="2.7" rx="0.7" fill="#c9c9c6"/><rect x="205.8" y="84.8" width="2.4" height="0.8" fill="#1d2025" opacity=".8"/><rect x="231.3" y="86.2" width="5.1" height="1.5" fill="#26282b" opacity=".75"/><rect x="233.7" y="84.6" width="3.4" height="2.7" rx="0.7" fill="#55585e"/><rect x="234.2" y="84.9" width="2.4" height="0.9" fill="#1d2025" opacity=".8"/><rect x="203.6" y="86.3" width="5.1" height="1.5" fill="#26282b" opacity=".75"/><rect x="206" y="84.7" width="3.4" height="2.7" rx="0.7" fill="#c9c9c6"/><rect x="206.5" y="85" width="2.4" height="0.9" fill="#1d2025" opacity=".8"/><rect x="265.4" y="86.3" width="5.1" height="1.5" fill="#26282b" opacity=".75"/><rect x="267.8" y="84.8" width="3.4" height="2.7" rx="0.7" fill="#8a8f96"/><rect x="268.3" y="85" width="2.4" height="0.9" fill="#1d2025" opacity=".8"/><rect x="203.9" y="86.4" width="5.2" height="1.5" fill="#26282b" opacity=".75"/><rect x="206.3" y="84.8" width="3.4" height="2.8" rx="0.7" fill="#c9c9c6"/><rect x="206.8" y="85.1" width="2.4" height="0.9" fill="#1d2025" opacity=".8"/><rect x="259" y="86.9" width="5.3" height="1.6" fill="#26282b" opacity=".75"/><rect x="261.4" y="85.3" width="3.5" height="2.8" rx="0.7" fill="#c9c9c6"/><rect x="262" y="85.6" width="2.5" height="0.9" fill="#1d2025" opacity=".8"/><rect x="260.2" y="87.2" width="5.4" height="1.6" fill="#26282b" opacity=".75"/><rect x="262.7" y="85.6" width="3.6" height="2.9" rx="0.7" fill="#8a8f96"/><rect x="263.3" y="85.9" width="2.5" height="0.9" fill="#1d2025" opacity=".8"/><rect x="199.7" y="87.2" width="5.4" height="1.6" fill="#26282b" opacity=".75"/><rect x="202.2" y="85.6" width="3.6" height="2.9" rx="0.7" fill="#3a3d44"/><rect x="202.7" y="85.9" width="2.5" height="0.9" fill="#1d2025" opacity=".8"/><rect x="196.2" y="87.3" width="5.4" height="1.6" fill="#26282b" opacity=".75"/><rect x="198.7" y="85.7" width="3.6" height="2.9" rx="0.7" fill="#b8bcc0"/><rect x="199.2" y="86" width="2.5" height="0.9" fill="#1d2025" opacity=".8"/><rect x="198.2" y="87.4" width="5.4" height="1.6" fill="#26282b" opacity=".75"/><rect x="200.7" y="85.8" width="3.6" height="2.9" rx="0.7" fill="#c9c9c6"/><rect x="201.3" y="86.1" width="2.5" height="0.9" fill="#1d2025" opacity=".8"/><rect x="249.2" y="87.8" width="5.5" height="1.6" fill="#26282b" opacity=".75"/><rect x="251.7" y="86.2" width="3.7" height="2.9" rx="0.7" fill="#a03434"/><rect x="252.3" y="86.5" width="2.6" height="0.9" fill="#1d2025" opacity=".8"/><rect x="203.8" y="88.3" width="5.6" height="1.7" fill="#26282b" opacity=".75"/><rect x="206.4" y="86.6" width="3.7" height="3" rx="0.7" fill="#2a2c30"/><rect x="206.9" y="86.9" width="2.6" height="0.9" fill="#1d2025" opacity=".8"/><rect x="285.6" y="88.4" width="5.6" height="1.7" fill="#26282b" opacity=".75"/><rect x="288.2" y="86.7" width="3.7" height="3" rx="0.7" fill="#f0f0f0"/><rect x="288.8" y="87" width="2.6" height="0.9" fill="#1d2025" opacity=".8"/><rect x="274.6" y="88.9" width="5.7" height="1.7" fill="#26282b" opacity=".75"/><rect x="277.3" y="87.2" width="3.8" height="3.1" rx="0.8" fill="#3a3d44"/><rect x="277.8" y="87.5" width="2.7" height="1" fill="#1d2025" opacity=".8"/><rect x="200.5" y="89.1" width="5.8" height="1.7" fill="#26282b" opacity=".75"/><rect x="203.2" y="87.4" width="3.9" height="3.1" rx="0.8" fill="#c9c9c6"/><rect x="203.7" y="87.7" width="2.7" height="1" fill="#1d2025" opacity=".8"/><rect x="289.8" y="89.3" width="5.8" height="1.7" fill="#26282b" opacity=".75"/><rect x="292.5" y="87.6" width="3.9" height="3.1" rx="0.8" fill="#1f2226"/><rect x="293.1" y="87.9" width="2.7" height="1" fill="#1d2025" opacity=".8"/><rect x="254.8" y="90.1" width="6" height="1.8" fill="#26282b" opacity=".75"/><rect x="257.6" y="88.3" width="4" height="3.2" rx="0.8" fill="#1f2226"/><rect x="258.2" y="88.6" width="2.8" height="1" fill="#1d2025" opacity=".8"/><rect x="290" y="90.3" width="6.1" height="1.8" fill="#26282b" opacity=".75"/><rect x="292.8" y="88.5" width="4" height="3.2" rx="0.8" fill="#c9c9c6"/><rect x="293.4" y="88.8" width="2.8" height="1" fill="#1d2025" opacity=".8"/><rect x="252.3" y="90.5" width="6.1" height="1.8" fill="#26282b" opacity=".75"/><rect x="255.2" y="88.7" width="4.1" height="3.3" rx="0.8" fill="#2b2e36"/><rect x="255.8" y="89" width="2.8" height="1" fill="#1d2025" opacity=".8"/><rect x="196.8" y="90.5" width="6.1" height="1.8" fill="#26282b" opacity=".75"/><rect x="199.6" y="88.7" width="4.1" height="3.3" rx="0.8" fill="#2a2c30"/><rect x="200.2" y="89" width="2.8" height="1" fill="#1d2025" opacity=".8"/><rect x="203.9" y="90.8" width="6.2" height="1.8" fill="#26282b" opacity=".75"/><rect x="206.7" y="89" width="4.1" height="3.3" rx="0.8" fill="#2b2e36"/><rect x="207.3" y="89.3" width="2.9" height="1" fill="#1d2025" opacity=".8"/><rect x="264.3" y="91.5" width="6.3" height="1.9" fill="#26282b" opacity=".75"/><rect x="267.2" y="89.6" width="4.2" height="3.4" rx="0.8" fill="#55585e"/><rect x="267.9" y="90" width="3" height="1.1" fill="#1d2025" opacity=".8"/><rect x="259.2" y="91.8" width="6.4" height="1.9" fill="#26282b" opacity=".75"/><rect x="262.2" y="89.9" width="4.3" height="3.4" rx="0.9" fill="#e4e4e4"/><rect x="262.8" y="90.2" width="3" height="1.1" fill="#1d2025" opacity=".8"/><rect x="194.3" y="91.8" width="6.4" height="1.9" fill="#26282b" opacity=".75"/><rect x="197.3" y="89.9" width="4.3" height="3.4" rx="0.9" fill="#2a2c30"/><rect x="197.9" y="90.2" width="3" height="1.1" fill="#1d2025" opacity=".8"/><rect x="262.6" y="91.9" width="6.4" height="1.9" fill="#26282b" opacity=".75"/><rect x="265.6" y="90" width="4.3" height="3.4" rx="0.9" fill="#e4e4e4"/><rect x="266.2" y="90.4" width="3" height="1.1" fill="#1d2025" opacity=".8"/><rect x="196.5" y="92" width="6.4" height="1.9" fill="#26282b" opacity=".75"/><rect x="199.5" y="90.1" width="4.3" height="3.4" rx="0.9" fill="#55585e"/><rect x="200.1" y="90.4" width="3" height="1.1" fill="#1d2025" opacity=".8"/><rect x="249.9" y="92.1" width="6.5" height="1.9" fill="#26282b" opacity=".75"/><rect x="253" y="90.2" width="4.3" height="3.4" rx="0.9" fill="#c9c9c6"/><rect x="253.6" y="90.5" width="3" height="1.1" fill="#1d2025" opacity=".8"/><rect x="289.8" y="92.4" width="6.5" height="2" fill="#26282b" opacity=".75"/><rect x="292.9" y="90.4" width="4.3" height="3.5" rx="0.9" fill="#55585e"/><rect x="293.5" y="90.8" width="3" height="1.1" fill="#1d2025" opacity=".8"/><rect x="294.7" y="92.4" width="6.5" height="2" fill="#26282b" opacity=".75"/><rect x="297.7" y="90.5" width="4.3" height="3.5" rx="0.9" fill="#a03434"/><rect x="298.4" y="90.8" width="3" height="1.1" fill="#1d2025" opacity=".8"/><rect x="293.8" y="92.4" width="6.5" height="2" fill="#26282b" opacity=".75"/><rect x="296.8" y="90.5" width="4.4" height="3.5" rx="0.9" fill="#e4e4e4"/><rect x="297.5" y="90.8" width="3" height="1.1" fill="#1d2025" opacity=".8"/><rect x="240.4" y="92.8" width="6.6" height="2" fill="#26282b" opacity=".75"/><rect x="243.5" y="90.8" width="4.4" height="3.5" rx="0.9" fill="#3a3d44"/><rect x="244.2" y="91.1" width="3.1" height="1.1" fill="#1d2025" opacity=".8"/><rect x="242.4" y="92.8" width="6.6" height="2" fill="#26282b" opacity=".75"/><rect x="245.5" y="90.8" width="4.4" height="3.5" rx="0.9" fill="#c9c9c6"/><rect x="246.2" y="91.2" width="3.1" height="1.1" fill="#1d2025" opacity=".8"/><rect x="277.4" y="93" width="6.7" height="2" fill="#26282b" opacity=".75"/><rect x="280.5" y="91" width="4.4" height="3.5" rx="0.9" fill="#2a2c30"/><rect x="281.2" y="91.4" width="3.1" height="1.1" fill="#1d2025" opacity=".8"/><rect x="210" y="93.4" width="6.7" height="2" fill="#26282b" opacity=".75"/><rect x="213.1" y="91.4" width="4.5" height="3.6" rx="0.9" fill="#e4e4e4"/><rect x="213.8" y="91.7" width="3.1" height="1.1" fill="#1d2025" opacity=".8"/><rect x="265.1" y="93.5" width="6.8" height="2" fill="#26282b" opacity=".75"/><rect x="268.2" y="91.5" width="4.5" height="3.6" rx="0.9" fill="#c9c9c6"/><rect x="268.9" y="91.8" width="3.2" height="1.1" fill="#1d2025" opacity=".8"/><rect x="247.1" y="94" width="6.9" height="2.1" fill="#26282b" opacity=".75"/><rect x="250.3" y="91.9" width="4.6" height="3.7" rx="0.9" fill="#b8bcc0"/><rect x="251" y="92.3" width="3.2" height="1.1" fill="#1d2025" opacity=".8"/><rect x="240.6" y="94.5" width="7" height="2.1" fill="#26282b" opacity=".75"/><rect x="243.9" y="92.4" width="4.7" height="3.7" rx="0.9" fill="#b8bcc0"/><rect x="244.6" y="92.7" width="3.3" height="1.2" fill="#1d2025" opacity=".8"/><rect x="280.5" y="94.9" width="7.1" height="2.1" fill="#26282b" opacity=".75"/><rect x="283.8" y="92.8" width="4.7" height="3.8" rx="0.9" fill="#c9c9c6"/><rect x="284.5" y="93.1" width="3.3" height="1.2" fill="#1d2025" opacity=".8"/><rect x="194.2" y="95.1" width="7.1" height="2.1" fill="#26282b" opacity=".75"/><rect x="197.6" y="93" width="4.8" height="3.8" rx="1" fill="#2a2c30"/><rect x="198.3" y="93.4" width="3.3" height="1.2" fill="#1d2025" opacity=".8"/><rect x="205.6" y="96.4" width="7.4" height="2.2" fill="#26282b" opacity=".75"/><rect x="209" y="94.1" width="4.9" height="4" rx="1" fill="#a03434"/><rect x="209.8" y="94.5" width="3.5" height="1.2" fill="#1d2025" opacity=".8"/><rect x="214.3" y="96.7" width="7.5" height="2.2" fill="#26282b" opacity=".75"/><rect x="217.8" y="94.5" width="5" height="4" rx="1" fill="#1f2226"/><rect x="218.6" y="94.9" width="3.5" height="1.2" fill="#1d2025" opacity=".8"/><rect x="282.6" y="97.3" width="7.6" height="2.3" fill="#26282b" opacity=".75"/><rect x="286.1" y="95" width="5.1" height="4.1" rx="1" fill="#8a8f96"/><rect x="286.9" y="95.4" width="3.6" height="1.3" fill="#1d2025" opacity=".8"/><rect x="214.9" y="97.3" width="7.6" height="2.3" fill="#26282b" opacity=".75"/><rect x="218.5" y="95" width="5.1" height="4.1" rx="1" fill="#55585e"/><rect x="219.2" y="95.4" width="3.6" height="1.3" fill="#1d2025" opacity=".8"/><rect x="194.5" y="97.3" width="7.6" height="2.3" fill="#26282b" opacity=".75"/><rect x="198.1" y="95" width="5.1" height="4.1" rx="1" fill="#b8bcc0"/><rect x="198.9" y="95.5" width="3.6" height="1.3" fill="#1d2025" opacity=".8"/><rect x="184.3" y="97.4" width="7.6" height="2.3" fill="#26282b" opacity=".75"/><rect x="187.9" y="95.1" width="5.1" height="4.1" rx="1" fill="#3a3d44"/><rect x="188.7" y="95.5" width="3.6" height="1.3" fill="#1d2025" opacity=".8"/><rect x="191.9" y="97.5" width="7.7" height="2.3" fill="#26282b" opacity=".75"/><rect x="195.4" y="95.2" width="5.1" height="4.1" rx="1" fill="#2b2e36"/><rect x="196.2" y="95.6" width="3.6" height="1.3" fill="#1d2025" opacity=".8"/><rect x="284.9" y="97.6" width="7.7" height="2.3" fill="#26282b" opacity=".75"/><rect x="288.5" y="95.3" width="5.1" height="4.1" rx="1" fill="#e4e4e4"/><rect x="289.2" y="95.7" width="3.6" height="1.3" fill="#1d2025" opacity=".8"/><rect x="211.1" y="97.6" width="7.7" height="2.3" fill="#26282b" opacity=".75"/><rect x="214.7" y="95.3" width="5.1" height="4.1" rx="1" fill="#2a2c30"/><rect x="215.4" y="95.7" width="3.6" height="1.3" fill="#1d2025" opacity=".8"/><rect x="192" y="97.8" width="7.7" height="2.3" fill="#26282b" opacity=".75"/><rect x="195.6" y="95.5" width="5.2" height="4.1" rx="1" fill="#2b2e36"/><rect x="196.3" y="95.9" width="3.6" height="1.3" fill="#1d2025" opacity=".8"/><rect x="239.4" y="98.1" width="7.8" height="2.3" fill="#26282b" opacity=".75"/><rect x="243" y="95.7" width="5.2" height="4.2" rx="1" fill="#b8bcc0"/><rect x="243.8" y="96.1" width="3.6" height="1.3" fill="#1d2025" opacity=".8"/><rect x="195.8" y="98.4" width="7.9" height="2.4" fill="#26282b" opacity=".75"/><rect x="199.4" y="96.1" width="5.3" height="4.2" rx="1.1" fill="#dcdcdc"/><rect x="200.2" y="96.5" width="3.7" height="1.3" fill="#1d2025" opacity=".8"/><rect x="295.5" y="98.5" width="7.9" height="2.4" fill="#26282b" opacity=".75"/><rect x="299.2" y="96.1" width="5.3" height="4.2" rx="1.1" fill="#b8bcc0"/><rect x="300" y="96.5" width="3.7" height="1.3" fill="#1d2025" opacity=".8"/><rect x="251.3" y="98.7" width="7.9" height="2.4" fill="#26282b" opacity=".75"/><rect x="255" y="96.3" width="5.3" height="4.2" rx="1.1" fill="#a03434"/><rect x="255.8" y="96.8" width="3.7" height="1.3" fill="#1d2025" opacity=".8"/><rect x="211" y="98.9" width="8" height="2.4" fill="#26282b" opacity=".75"/><rect x="214.7" y="96.5" width="5.3" height="4.3" rx="1.1" fill="#c9c9c6"/><rect x="215.5" y="97" width="3.7" height="1.3" fill="#1d2025" opacity=".8"/><rect x="231.3" y="98.9" width="8" height="2.4" fill="#26282b" opacity=".75"/><rect x="235" y="96.5" width="5.3" height="4.3" rx="1.1" fill="#e4e4e4"/><rect x="235.8" y="97" width="3.7" height="1.3" fill="#1d2025" opacity=".8"/><rect x="234" y="99.5" width="8.1" height="2.4" fill="#26282b" opacity=".75"/><rect x="237.8" y="97" width="5.4" height="4.3" rx="1.1" fill="#a03434"/><rect x="238.6" y="97.5" width="3.8" height="1.4" fill="#1d2025" opacity=".8"/><rect x="244.9" y="99.5" width="8.1" height="2.4" fill="#26282b" opacity=".75"/><rect x="248.6" y="97.1" width="5.4" height="4.3" rx="1.1" fill="#a03434"/><rect x="249.5" y="97.5" width="3.8" height="1.4" fill="#1d2025" opacity=".8"/><rect x="302.5" y="99.5" width="8.1" height="2.4" fill="#26282b" opacity=".75"/><rect x="306.3" y="97.1" width="5.4" height="4.3" rx="1.1" fill="#8a8f96"/><rect x="307.1" y="97.5" width="3.8" height="1.4" fill="#1d2025" opacity=".8"/><rect x="187.8" y="99.6" width="8.1" height="2.4" fill="#26282b" opacity=".75"/><rect x="191.6" y="97.1" width="5.4" height="4.3" rx="1.1" fill="#e4e4e4"/><rect x="192.4" y="97.6" width="3.8" height="1.4" fill="#1d2025" opacity=".8"/><rect x="201.9" y="100.5" width="8.3" height="2.5" fill="#26282b" opacity=".75"/><rect x="205.8" y="98" width="5.6" height="4.5" rx="1.1" fill="#c9c9c6"/><rect x="206.6" y="98.4" width="3.9" height="1.4" fill="#1d2025" opacity=".8"/><rect x="215.2" y="100.6" width="8.4" height="2.5" fill="#26282b" opacity=".75"/><rect x="219.1" y="98.1" width="5.6" height="4.5" rx="1.1" fill="#3a3d44"/><rect x="219.9" y="98.5" width="3.9" height="1.4" fill="#1d2025" opacity=".8"/><rect x="235.6" y="100.7" width="8.4" height="2.5" fill="#26282b" opacity=".75"/><rect x="239.5" y="98.2" width="5.6" height="4.5" rx="1.1" fill="#e4e4e4"/><rect x="240.4" y="98.6" width="3.9" height="1.4" fill="#1d2025" opacity=".8"/><rect x="279.4" y="100.8" width="8.4" height="2.5" fill="#26282b" opacity=".75"/><rect x="283.3" y="98.3" width="5.6" height="4.5" rx="1.1" fill="#b8bcc0"/><rect x="284.1" y="98.7" width="3.9" height="1.4" fill="#1d2025" opacity=".8"/><rect x="304.8" y="100.8" width="8.4" height="2.5" fill="#26282b" opacity=".75"/><rect x="308.7" y="98.3" width="5.6" height="4.5" rx="1.1" fill="#dcdcdc"/><rect x="309.5" y="98.8" width="3.9" height="1.4" fill="#1d2025" opacity=".8"/><rect x="214.7" y="100.8" width="8.4" height="2.5" fill="#26282b" opacity=".75"/><rect x="218.7" y="98.3" width="5.6" height="4.5" rx="1.1" fill="#2b2e36"/><rect x="219.5" y="98.8" width="3.9" height="1.4" fill="#1d2025" opacity=".8"/><rect x="291.9" y="101.4" width="8.5" height="2.6" fill="#26282b" opacity=".75"/><rect x="295.9" y="98.8" width="5.7" height="4.6" rx="1.1" fill="#c9c9c6"/><rect x="296.7" y="99.3" width="4" height="1.4" fill="#1d2025" opacity=".8"/><rect x="296.5" y="102" width="8.7" height="2.6" fill="#26282b" opacity=".75"/><rect x="300.5" y="99.4" width="5.8" height="4.6" rx="1.2" fill="#e4e4e4"/><rect x="301.4" y="99.9" width="4.1" height="1.4" fill="#1d2025" opacity=".8"/><rect x="211.2" y="102.3" width="8.8" height="2.6" fill="#26282b" opacity=".75"/><rect x="215.3" y="99.7" width="5.8" height="4.7" rx="1.2" fill="#a03434"/><rect x="216.2" y="100.1" width="4.1" height="1.5" fill="#1d2025" opacity=".8"/><rect x="279.4" y="102.5" width="8.8" height="2.6" fill="#26282b" opacity=".75"/><rect x="283.5" y="99.9" width="5.9" height="4.7" rx="1.2" fill="#f0f0f0"/><rect x="284.3" y="100.4" width="4.1" height="1.5" fill="#1d2025" opacity=".8"/><rect x="203.2" y="102.6" width="8.8" height="2.6" fill="#26282b" opacity=".75"/><rect x="207.3" y="100" width="5.9" height="4.7" rx="1.2" fill="#2b2e36"/><rect x="208.2" y="100.4" width="4.1" height="1.5" fill="#1d2025" opacity=".8"/><rect x="273.7" y="102.7" width="8.8" height="2.6" fill="#26282b" opacity=".75"/><rect x="277.8" y="100" width="5.9" height="4.7" rx="1.2" fill="#a03434"/><rect x="278.7" y="100.5" width="4.1" height="1.5" fill="#1d2025" opacity=".8"/><rect x="239.7" y="102.9" width="8.9" height="2.7" fill="#26282b" opacity=".75"/><rect x="243.9" y="100.2" width="5.9" height="4.7" rx="1.2" fill="#8a8f96"/><rect x="244.8" y="100.7" width="4.1" height="1.5" fill="#1d2025" opacity=".8"/><rect x="201.9" y="103" width="8.9" height="2.7" fill="#26282b" opacity=".75"/><rect x="206" y="100.3" width="5.9" height="4.7" rx="1.2" fill="#b8bcc0"/><rect x="206.9" y="100.8" width="4.2" height="1.5" fill="#1d2025" opacity=".8"/><rect x="195.1" y="103.1" width="8.9" height="2.7" fill="#26282b" opacity=".75"/><rect x="199.3" y="100.4" width="6" height="4.8" rx="1.2" fill="#3a3d44"/><rect x="200.2" y="100.9" width="4.2" height="1.5" fill="#1d2025" opacity=".8"/><rect x="275.5" y="104.2" width="9.2" height="2.8" fill="#26282b" opacity=".75"/><rect x="279.8" y="101.4" width="6.1" height="4.9" rx="1.2" fill="#2a2c30"/><rect x="280.7" y="101.9" width="4.3" height="1.5" fill="#1d2025" opacity=".8"/><rect x="214" y="104.4" width="9.2" height="2.8" fill="#26282b" opacity=".75"/><rect x="218.3" y="101.6" width="6.1" height="4.9" rx="1.2" fill="#c9c9c6"/><rect x="219.2" y="102.1" width="4.3" height="1.5" fill="#1d2025" opacity=".8"/><rect x="321" y="104.4" width="9.2" height="2.8" fill="#26282b" opacity=".75"/><rect x="325.3" y="101.7" width="6.2" height="4.9" rx="1.2" fill="#e4e4e4"/><rect x="326.3" y="102.2" width="4.3" height="1.5" fill="#1d2025" opacity=".8"/><rect x="311.4" y="104.6" width="9.3" height="2.8" fill="#26282b" opacity=".75"/><rect x="315.8" y="101.8" width="6.2" height="4.9" rx="1.2" fill="#55585e"/><rect x="316.7" y="102.3" width="4.3" height="1.5" fill="#1d2025" opacity=".8"/><rect x="318.1" y="105.1" width="9.4" height="2.8" fill="#26282b" opacity=".75"/><rect x="322.5" y="102.2" width="6.2" height="5" rx="1.2" fill="#1f2226"/><rect x="323.4" y="102.7" width="4.4" height="1.6" fill="#1d2025" opacity=".8"/><rect x="232.1" y="105.1" width="9.4" height="2.8" fill="#26282b" opacity=".75"/><rect x="236.5" y="102.3" width="6.3" height="5" rx="1.3" fill="#55585e"/><rect x="237.4" y="102.8" width="4.4" height="1.6" fill="#1d2025" opacity=".8"/><rect x="314.5" y="105.2" width="9.4" height="2.8" fill="#26282b" opacity=".75"/><rect x="318.9" y="102.4" width="6.3" height="5" rx="1.3" fill="#2a2c30"/><rect x="319.9" y="102.9" width="4.4" height="1.6" fill="#1d2025" opacity=".8"/><rect x="320.7" y="105.2" width="9.4" height="2.8" fill="#26282b" opacity=".75"/><rect x="325.1" y="102.4" width="6.3" height="5" rx="1.3" fill="#f0f0f0"/><rect x="326.1" y="102.9" width="4.4" height="1.6" fill="#1d2025" opacity=".8"/><rect x="183.5" y="105.8" width="9.5" height="2.9" fill="#26282b" opacity=".75"/><rect x="187.9" y="102.9" width="6.4" height="5.1" rx="1.3" fill="#2a2c30"/><rect x="188.9" y="103.4" width="4.4" height="1.6" fill="#1d2025" opacity=".8"/><rect x="234.2" y="106.3" width="9.7" height="2.9" fill="#26282b" opacity=".75"/><rect x="238.7" y="103.4" width="6.4" height="5.1" rx="1.3" fill="#f0f0f0"/><rect x="239.7" y="103.9" width="4.5" height="1.6" fill="#1d2025" opacity=".8"/><rect x="247.9" y="106.3" width="9.7" height="2.9" fill="#26282b" opacity=".75"/><rect x="252.4" y="103.4" width="6.4" height="5.2" rx="1.3" fill="#2b2e36"/><rect x="253.4" y="103.9" width="4.5" height="1.6" fill="#1d2025" opacity=".8"/><rect x="306.9" y="106.7" width="9.7" height="2.9" fill="#26282b" opacity=".75"/><rect x="311.5" y="103.7" width="6.5" height="5.2" rx="1.3" fill="#1f2226"/><rect x="312.4" y="104.3" width="4.5" height="1.6" fill="#1d2025" opacity=".8"/><rect x="311.1" y="107.2" width="9.9" height="3" fill="#26282b" opacity=".75"/><rect x="315.7" y="104.2" width="6.6" height="5.3" rx="1.3" fill="#8a8f96"/><rect x="316.7" y="104.8" width="4.6" height="1.6" fill="#1d2025" opacity=".8"/><rect x="276.3" y="107.7" width="10" height="3" fill="#26282b" opacity=".75"/><rect x="281" y="104.7" width="6.6" height="5.3" rx="1.3" fill="#2b2e36"/><rect x="282" y="105.2" width="4.6" height="1.7" fill="#1d2025" opacity=".8"/><rect x="267.7" y="107.7" width="10" height="3" fill="#26282b" opacity=".75"/><rect x="272.4" y="104.7" width="6.7" height="5.3" rx="1.3" fill="#1f2226"/><rect x="273.4" y="105.3" width="4.7" height="1.7" fill="#1d2025" opacity=".8"/><rect x="295.3" y="108.3" width="10.1" height="3" fill="#26282b" opacity=".75"/><rect x="300" y="105.3" width="6.7" height="5.4" rx="1.3" fill="#2a2c30"/><rect x="301" y="105.8" width="4.7" height="1.7" fill="#1d2025" opacity=".8"/><rect x="185.8" y="108.4" width="10.1" height="3" fill="#26282b" opacity=".75"/><rect x="190.5" y="105.4" width="6.8" height="5.4" rx="1.4" fill="#2b2e36"/><rect x="191.6" y="105.9" width="4.7" height="1.7" fill="#1d2025" opacity=".8"/><rect x="328.7" y="108.6" width="10.2" height="3" fill="#26282b" opacity=".75"/><rect x="333.5" y="105.5" width="6.8" height="5.4" rx="1.4" fill="#8a8f96"/><rect x="334.5" y="106" width="4.7" height="1.7" fill="#1d2025" opacity=".8"/><rect x="274.8" y="108.9" width="10.2" height="3.1" fill="#26282b" opacity=".75"/><rect x="279.5" y="105.9" width="6.8" height="5.5" rx="1.4" fill="#f0f0f0"/><rect x="280.6" y="106.4" width="4.8" height="1.7" fill="#1d2025" opacity=".8"/><rect x="205.4" y="108.9" width="10.3" height="3.1" fill="#26282b" opacity=".75"/><rect x="210.2" y="105.9" width="6.8" height="5.5" rx="1.4" fill="#dcdcdc"/><rect x="211.2" y="106.4" width="4.8" height="1.7" fill="#1d2025" opacity=".8"/><rect x="309.7" y="109.4" width="10.3" height="3.1" fill="#26282b" opacity=".75"/><rect x="314.5" y="106.3" width="6.9" height="5.5" rx="1.4" fill="#3a3d44"/><rect x="315.6" y="106.8" width="4.8" height="1.7" fill="#1d2025" opacity=".8"/><rect x="326.6" y="109.7" width="10.4" height="3.1" fill="#26282b" opacity=".75"/><rect x="331.5" y="106.5" width="6.9" height="5.6" rx="1.4" fill="#f0f0f0"/><rect x="332.5" y="107.1" width="4.9" height="1.7" fill="#1d2025" opacity=".8"/><rect x="241.9" y="109.8" width="10.4" height="3.1" fill="#26282b" opacity=".75"/><rect x="246.8" y="106.6" width="7" height="5.6" rx="1.4" fill="#3a3d44"/><rect x="247.8" y="107.2" width="4.9" height="1.7" fill="#1d2025" opacity=".8"/><rect x="263.5" y="109.8" width="10.4" height="3.1" fill="#26282b" opacity=".75"/><rect x="268.4" y="106.7" width="7" height="5.6" rx="1.4" fill="#2b2e36"/><rect x="269.4" y="107.2" width="4.9" height="1.7" fill="#1d2025" opacity=".8"/><rect x="273.7" y="110" width="10.5" height="3.1" fill="#26282b" opacity=".75"/><rect x="278.6" y="106.8" width="7" height="5.6" rx="1.4" fill="#3a3d44"/><rect x="279.6" y="107.4" width="4.9" height="1.7" fill="#1d2025" opacity=".8"/><rect x="319.2" y="110.1" width="10.5" height="3.2" fill="#26282b" opacity=".75"/><rect x="324.1" y="106.9" width="7" height="5.6" rx="1.4" fill="#f0f0f0"/><rect x="325.1" y="107.5" width="4.9" height="1.8" fill="#1d2025" opacity=".8"/><rect x="229.9" y="110.3" width="10.6" height="3.2" fill="#26282b" opacity=".75"/><rect x="234.9" y="107.2" width="7" height="5.6" rx="1.4" fill="#e4e4e4"/><rect x="235.9" y="107.7" width="4.9" height="1.8" fill="#1d2025" opacity=".8"/><rect x="328.1" y="110.4" width="10.6" height="3.2" fill="#26282b" opacity=".75"/><rect x="333.1" y="107.3" width="7.1" height="5.6" rx="1.4" fill="#3a3d44"/><rect x="334.1" y="107.8" width="4.9" height="1.8" fill="#1d2025" opacity=".8"/><rect x="183.4" y="111.4" width="10.8" height="3.2" fill="#26282b" opacity=".75"/><rect x="188.5" y="108.2" width="7.2" height="5.8" rx="1.4" fill="#dcdcdc"/><rect x="189.5" y="108.7" width="5" height="1.8" fill="#1d2025" opacity=".8"/><rect x="257.1" y="111.8" width="10.9" height="3.3" fill="#26282b" opacity=".75"/><rect x="262.2" y="108.6" width="7.3" height="5.8" rx="1.5" fill="#b8bcc0"/><rect x="263.3" y="109.2" width="5.1" height="1.8" fill="#1d2025" opacity=".8"/><rect x="328.8" y="112.5" width="11" height="3.3" fill="#26282b" opacity=".75"/><rect x="334" y="109.2" width="7.4" height="5.9" rx="1.5" fill="#a03434"/><rect x="335.1" y="109.7" width="5.2" height="1.8" fill="#1d2025" opacity=".8"/><rect x="263" y="113.3" width="11.2" height="3.4" fill="#26282b" opacity=".75"/><rect x="268.2" y="109.9" width="7.5" height="6" rx="1.5" fill="#f0f0f0"/><rect x="269.4" y="110.5" width="5.2" height="1.9" fill="#1d2025" opacity=".8"/><rect x="338.1" y="113.6" width="11.3" height="3.4" fill="#26282b" opacity=".75"/><rect x="343.3" y="110.2" width="7.5" height="6" rx="1.5" fill="#f0f0f0"/><rect x="344.5" y="110.8" width="5.3" height="1.9" fill="#1d2025" opacity=".8"/><rect x="305.6" y="114.1" width="11.4" height="3.4" fill="#26282b" opacity=".75"/><rect x="310.9" y="110.7" width="7.6" height="6.1" rx="1.5" fill="#e4e4e4"/><rect x="312.1" y="111.3" width="5.3" height="1.9" fill="#1d2025" opacity=".8"/><rect x="313.5" y="114.2" width="11.4" height="3.4" fill="#26282b" opacity=".75"/><rect x="318.8" y="110.8" width="7.6" height="6.1" rx="1.5" fill="#a03434"/><rect x="320" y="111.4" width="5.3" height="1.9" fill="#1d2025" opacity=".8"/><rect x="179.9" y="116.5" width="12" height="3.6" fill="#26282b" opacity=".75"/><rect x="185.4" y="112.9" width="8" height="6.4" rx="1.6" fill="#2b2e36"/><rect x="186.6" y="113.5" width="5.6" height="2" fill="#1d2025" opacity=".8"/><rect x="233.9" y="116.5" width="12" height="3.6" fill="#26282b" opacity=".75"/><rect x="239.5" y="112.9" width="8" height="6.4" rx="1.6" fill="#c9c9c6"/><rect x="240.7" y="113.6" width="5.6" height="2" fill="#1d2025" opacity=".8"/><rect x="328.6" y="117" width="12.1" height="3.6" fill="#26282b" opacity=".75"/><rect x="334.2" y="113.4" width="8" height="6.4" rx="1.6" fill="#f0f0f0"/><rect x="335.4" y="114" width="5.6" height="2" fill="#1d2025" opacity=".8"/><rect x="286.5" y="117.2" width="12.1" height="3.6" fill="#26282b" opacity=".75"/><rect x="292.1" y="113.5" width="8.1" height="6.5" rx="1.6" fill="#dcdcdc"/><rect x="293.3" y="114.2" width="5.6" height="2" fill="#1d2025" opacity=".8"/><rect x="325.6" y="117.3" width="12.1" height="3.6" fill="#26282b" opacity=".75"/><rect x="331.2" y="113.6" width="8.1" height="6.5" rx="1.6" fill="#f0f0f0"/><rect x="332.4" y="114.3" width="5.7" height="2" fill="#1d2025" opacity=".8"/><rect x="269.8" y="117.9" width="12.3" height="3.7" fill="#26282b" opacity=".75"/><rect x="275.6" y="114.2" width="8.2" height="6.5" rx="1.6" fill="#c9c9c6"/><rect x="276.8" y="114.9" width="5.7" height="2" fill="#1d2025" opacity=".8"/><rect x="241.1" y="117.9" width="12.3" height="3.7" fill="#26282b" opacity=".75"/><rect x="246.8" y="114.2" width="8.2" height="6.5" rx="1.6" fill="#e4e4e4"/><rect x="248" y="114.9" width="5.7" height="2" fill="#1d2025" opacity=".8"/><rect x="181.6" y="119.4" width="12.6" height="3.8" fill="#26282b" opacity=".75"/><rect x="187.5" y="115.6" width="8.4" height="6.7" rx="1.7" fill="#f0f0f0"/><rect x="188.8" y="116.3" width="5.9" height="2.1" fill="#1d2025" opacity=".8"/><rect x="337.7" y="119.5" width="12.6" height="3.8" fill="#26282b" opacity=".75"/><rect x="343.5" y="115.7" width="8.4" height="6.7" rx="1.7" fill="#8a8f96"/><rect x="344.8" y="116.4" width="5.9" height="2.1" fill="#1d2025" opacity=".8"/><rect x="245.8" y="120.1" width="12.8" height="3.8" fill="#26282b" opacity=".75"/><rect x="251.7" y="116.3" width="8.5" height="6.8" rx="1.7" fill="#f0f0f0"/><rect x="253" y="116.9" width="6" height="2.1" fill="#1d2025" opacity=".8"/><rect x="184.3" y="120.9" width="12.9" height="3.9" fill="#26282b" opacity=".75"/><rect x="190.3" y="117" width="8.6" height="6.9" rx="1.7" fill="#2a2c30"/><rect x="191.6" y="117.7" width="6" height="2.2" fill="#1d2025" opacity=".8"/><rect x="307.1" y="121.5" width="13.1" height="3.9" fill="#26282b" opacity=".75"/><rect x="313.2" y="117.5" width="8.7" height="7" rx="1.7" fill="#2a2c30"/><rect x="314.6" y="118.2" width="6.1" height="2.2" fill="#1d2025" opacity=".8"/><rect x="303.3" y="122.3" width="13.3" height="4" fill="#26282b" opacity=".75"/><rect x="309.5" y="118.4" width="8.8" height="7.1" rx="1.8" fill="#f0f0f0"/><rect x="310.9" y="119.1" width="6.2" height="2.2" fill="#1d2025" opacity=".8"/><rect x="351.6" y="122.6" width="13.3" height="4" fill="#26282b" opacity=".75"/><rect x="357.8" y="118.6" width="8.9" height="7.1" rx="1.8" fill="#b8bcc0"/><rect x="359.2" y="119.4" width="6.2" height="2.2" fill="#1d2025" opacity=".8"/><rect x="358.7" y="122.8" width="13.4" height="4" fill="#26282b" opacity=".75"/><rect x="364.9" y="118.8" width="8.9" height="7.1" rx="1.8" fill="#a03434"/><rect x="366.3" y="119.5" width="6.2" height="2.2" fill="#1d2025" opacity=".8"/><rect x="184.1" y="123" width="13.4" height="4" fill="#26282b" opacity=".75"/><rect x="190.4" y="118.9" width="8.9" height="7.2" rx="1.8" fill="#55585e"/><rect x="191.7" y="119.6" width="6.3" height="2.2" fill="#1d2025" opacity=".8"/><rect x="330.8" y="124.4" width="13.7" height="4.1" fill="#26282b" opacity=".75"/><rect x="337.2" y="120.2" width="9.2" height="7.3" rx="1.8" fill="#8a8f96"/><rect x="338.6" y="121" width="6.4" height="2.3" fill="#1d2025" opacity=".8"/><rect x="180.7" y="124.4" width="13.7" height="4.1" fill="#26282b" opacity=".75"/><rect x="187.1" y="120.3" width="9.2" height="7.3" rx="1.8" fill="#8a8f96"/><rect x="188.5" y="121" width="6.4" height="2.3" fill="#1d2025" opacity=".8"/><rect x="271.3" y="124.6" width="13.8" height="4.1" fill="#26282b" opacity=".75"/><rect x="277.8" y="120.5" width="9.2" height="7.4" rx="1.8" fill="#e4e4e4"/><rect x="279.1" y="121.2" width="6.4" height="2.3" fill="#1d2025" opacity=".8"/><rect x="355.1" y="125.2" width="13.9" height="4.2" fill="#26282b" opacity=".75"/><rect x="361.6" y="121" width="9.3" height="7.4" rx="1.9" fill="#e4e4e4"/><rect x="362.9" y="121.8" width="6.5" height="2.3" fill="#1d2025" opacity=".8"/><rect x="262.8" y="125.7" width="14" height="4.2" fill="#26282b" opacity=".75"/><rect x="269.4" y="121.5" width="9.4" height="7.5" rx="1.9" fill="#1f2226"/><rect x="270.8" y="122.2" width="6.5" height="2.3" fill="#1d2025" opacity=".8"/><rect x="175.9" y="126.3" width="14.2" height="4.2" fill="#26282b" opacity=".75"/><rect x="182.5" y="122" width="9.4" height="7.5" rx="1.9" fill="#8a8f96"/><rect x="184" y="122.8" width="6.6" height="2.4" fill="#1d2025" opacity=".8"/><rect x="284.8" y="126.5" width="14.2" height="4.3" fill="#26282b" opacity=".75"/><rect x="291.5" y="122.2" width="9.5" height="7.6" rx="1.9" fill="#2b2e36"/><rect x="292.9" y="123" width="6.6" height="2.4" fill="#1d2025" opacity=".8"/><rect x="267" y="126.7" width="14.3" height="4.3" fill="#26282b" opacity=".75"/><rect x="273.7" y="122.5" width="9.5" height="7.6" rx="1.9" fill="#f0f0f0"/><rect x="275.1" y="123.2" width="6.7" height="2.4" fill="#1d2025" opacity=".8"/><rect x="163.6" y="127.3" width="14.4" height="4.3" fill="#26282b" opacity=".75"/><rect x="170.3" y="123" width="9.6" height="7.7" rx="1.9" fill="#2a2c30"/><rect x="171.8" y="123.7" width="6.7" height="2.4" fill="#1d2025" opacity=".8"/><rect x="181.9" y="127.4" width="14.4" height="4.3" fill="#26282b" opacity=".75"/><rect x="188.7" y="123" width="9.6" height="7.7" rx="1.9" fill="#b8bcc0"/><rect x="190.1" y="123.8" width="6.7" height="2.4" fill="#1d2025" opacity=".8"/><rect x="189.8" y="129.1" width="14.8" height="4.4" fill="#26282b" opacity=".75"/><rect x="196.7" y="124.6" width="9.9" height="7.9" rx="2" fill="#b8bcc0"/><rect x="198.2" y="125.4" width="6.9" height="2.5" fill="#1d2025" opacity=".8"/><rect x="296.2" y="129.1" width="14.8" height="4.4" fill="#26282b" opacity=".75"/><rect x="303.1" y="124.6" width="9.9" height="7.9" rx="2" fill="#a03434"/><rect x="304.6" y="125.4" width="6.9" height="2.5" fill="#1d2025" opacity=".8"/><rect x="285.6" y="130.3" width="15.1" height="4.5" fill="#26282b" opacity=".75"/><rect x="292.6" y="125.8" width="10" height="8" rx="2" fill="#dcdcdc"/><rect x="294.1" y="126.6" width="7" height="2.5" fill="#1d2025" opacity=".8"/><rect x="285.3" y="130.5" width="15.1" height="4.5" fill="#26282b" opacity=".75"/><rect x="292.4" y="126" width="10.1" height="8.1" rx="2" fill="#1f2226"/><rect x="293.9" y="126.8" width="7.1" height="2.5" fill="#1d2025" opacity=".8"/><rect x="154" y="130.6" width="15.1" height="4.5" fill="#26282b" opacity=".75"/><rect x="161" y="126" width="10.1" height="8.1" rx="2" fill="#8a8f96"/><rect x="162.5" y="126.8" width="7.1" height="2.5" fill="#1d2025" opacity=".8"/><rect x="337.2" y="130.9" width="15.2" height="4.6" fill="#26282b" opacity=".75"/><rect x="344.3" y="126.4" width="10.1" height="8.1" rx="2" fill="#8a8f96"/><rect x="345.8" y="127.2" width="7.1" height="2.5" fill="#1d2025" opacity=".8"/><rect x="354.8" y="131.3" width="15.3" height="4.6" fill="#26282b" opacity=".75"/><rect x="361.9" y="126.8" width="10.2" height="8.2" rx="2" fill="#a03434"/><rect x="363.5" y="127.6" width="7.1" height="2.6" fill="#1d2025" opacity=".8"/><rect x="364" y="131.4" width="15.3" height="4.6" fill="#26282b" opacity=".75"/><rect x="371.2" y="126.8" width="10.2" height="8.2" rx="2" fill="#3a3d44"/><rect x="372.7" y="127.6" width="7.1" height="2.6" fill="#1d2025" opacity=".8"/><rect x="188.1" y="131.7" width="15.4" height="4.6" fill="#26282b" opacity=".75"/><rect x="195.3" y="127.1" width="10.3" height="8.2" rx="2.1" fill="#8a8f96"/><rect x="196.8" y="127.9" width="7.2" height="2.6" fill="#1d2025" opacity=".8"/><rect x="268.6" y="132" width="15.4" height="4.6" fill="#26282b" opacity=".75"/><rect x="275.8" y="127.3" width="10.3" height="8.2" rx="2.1" fill="#1f2226"/><rect x="277.3" y="128.1" width="7.2" height="2.6" fill="#1d2025" opacity=".8"/><rect x="361.2" y="132" width="15.5" height="4.6" fill="#26282b" opacity=".75"/><rect x="368.4" y="127.4" width="10.3" height="8.2" rx="2.1" fill="#8a8f96"/><rect x="369.9" y="128.2" width="7.2" height="2.6" fill="#1d2025" opacity=".8"/><rect x="318.9" y="132.2" width="15.5" height="4.7" fill="#26282b" opacity=".75"/><rect x="326.1" y="127.6" width="10.3" height="8.3" rx="2.1" fill="#2a2c30"/><rect x="327.7" y="128.4" width="7.2" height="2.6" fill="#1d2025" opacity=".8"/><rect x="375" y="132.5" width="15.6" height="4.7" fill="#26282b" opacity=".75"/><rect x="382.3" y="127.8" width="10.4" height="8.3" rx="2.1" fill="#2a2c30"/><rect x="383.8" y="128.6" width="7.3" height="2.6" fill="#1d2025" opacity=".8"/><rect x="326.9" y="132.5" width="15.6" height="4.7" fill="#26282b" opacity=".75"/><rect x="334.2" y="127.9" width="10.4" height="8.3" rx="2.1" fill="#f0f0f0"/><rect x="335.7" y="128.7" width="7.3" height="2.6" fill="#1d2025" opacity=".8"/><rect x="353.9" y="133.2" width="15.7" height="4.7" fill="#26282b" opacity=".75"/><rect x="361.3" y="128.5" width="10.5" height="8.4" rx="2.1" fill="#55585e"/><rect x="362.8" y="129.3" width="7.3" height="2.6" fill="#1d2025" opacity=".8"/><rect x="323.3" y="133.3" width="15.7" height="4.7" fill="#26282b" opacity=".75"/><rect x="330.7" y="128.5" width="10.5" height="8.4" rx="2.1" fill="#c9c9c6"/><rect x="332.2" y="129.4" width="7.3" height="2.6" fill="#1d2025" opacity=".8"/><rect x="280" y="135.4" width="16.2" height="4.9" fill="#26282b" opacity=".75"/><rect x="287.6" y="130.6" width="10.8" height="8.7" rx="2.2" fill="#3a3d44"/><rect x="289.2" y="131.4" width="7.6" height="2.7" fill="#1d2025" opacity=".8"/><rect x="259.9" y="136.1" width="16.4" height="4.9" fill="#26282b" opacity=".75"/><rect x="267.5" y="131.2" width="10.9" height="8.7" rx="2.2" fill="#8a8f96"/><rect x="269.2" y="132.1" width="7.6" height="2.7" fill="#1d2025" opacity=".8"/><rect x="272.4" y="136.4" width="16.4" height="4.9" fill="#26282b" opacity=".75"/><rect x="280.1" y="131.5" width="11" height="8.8" rx="2.2" fill="#e4e4e4"/><rect x="281.7" y="132.4" width="7.7" height="2.7" fill="#1d2025" opacity=".8"/><rect x="322.6" y="138.1" width="16.8" height="5" fill="#26282b" opacity=".75"/><rect x="330.5" y="133" width="11.2" height="9" rx="2.2" fill="#55585e"/><rect x="332.2" y="133.9" width="7.8" height="2.8" fill="#1d2025" opacity=".8"/><rect x="186.4" y="138.2" width="16.8" height="5.1" fill="#26282b" opacity=".75"/><rect x="194.3" y="133.1" width="11.2" height="9" rx="2.2" fill="#a03434"/><rect x="196" y="134" width="7.9" height="2.8" fill="#1d2025" opacity=".8"/><rect x="370.6" y="138.4" width="16.9" height="5.1" fill="#26282b" opacity=".75"/><rect x="378.4" y="133.3" width="11.3" height="9" rx="2.3" fill="#e4e4e4"/><rect x="380.1" y="134.2" width="7.9" height="2.8" fill="#1d2025" opacity=".8"/><rect x="250.1" y="138.8" width="17" height="5.1" fill="#26282b" opacity=".75"/><rect x="258" y="133.7" width="11.3" height="9.1" rx="2.3" fill="#b8bcc0"/><rect x="259.7" y="134.6" width="7.9" height="2.8" fill="#1d2025" opacity=".8"/><rect x="262.4" y="138.9" width="17" height="5.1" fill="#26282b" opacity=".75"/><rect x="270.3" y="133.8" width="11.3" height="9.1" rx="2.3" fill="#2b2e36"/><rect x="272" y="134.7" width="7.9" height="2.8" fill="#1d2025" opacity=".8"/><rect x="300.8" y="138.9" width="17" height="5.1" fill="#26282b" opacity=".75"/><rect x="308.7" y="133.8" width="11.3" height="9.1" rx="2.3" fill="#f0f0f0"/><rect x="310.4" y="134.7" width="7.9" height="2.8" fill="#1d2025" opacity=".8"/><rect x="384.6" y="139.8" width="17.2" height="5.2" fill="#26282b" opacity=".75"/><rect x="392.6" y="134.6" width="11.5" height="9.2" rx="2.3" fill="#2a2c30"/><rect x="394.3" y="135.5" width="8" height="2.9" fill="#1d2025" opacity=".8"/><rect x="344" y="140" width="17.3" height="5.2" fill="#26282b" opacity=".75"/><rect x="352" y="134.8" width="11.5" height="9.2" rx="2.3" fill="#dcdcdc"/><rect x="353.8" y="135.7" width="8.1" height="2.9" fill="#1d2025" opacity=".8"/><rect x="202" y="140" width="17.3" height="5.2" fill="#26282b" opacity=".75"/><rect x="210" y="134.9" width="11.5" height="9.2" rx="2.3" fill="#b8bcc0"/><rect x="211.8" y="135.8" width="8.1" height="2.9" fill="#1d2025" opacity=".8"/><rect x="190.7" y="140.7" width="17.4" height="5.2" fill="#26282b" opacity=".75"/><rect x="198.8" y="135.5" width="11.6" height="9.3" rx="2.3" fill="#dcdcdc"/><rect x="200.6" y="136.4" width="8.1" height="2.9" fill="#1d2025" opacity=".8"/><rect x="349.8" y="141.7" width="17.6" height="5.3" fill="#26282b" opacity=".75"/><rect x="358" y="136.4" width="11.8" height="9.4" rx="2.4" fill="#8a8f96"/><rect x="359.8" y="137.4" width="8.2" height="2.9" fill="#1d2025" opacity=".8"/><rect x="147.9" y="142.1" width="17.7" height="5.3" fill="#26282b" opacity=".75"/><rect x="156.2" y="136.8" width="11.8" height="9.5" rx="2.4" fill="#2b2e36"/><rect x="158" y="137.8" width="8.3" height="3" fill="#1d2025" opacity=".8"/><rect x="315.6" y="142.7" width="17.9" height="5.4" fill="#26282b" opacity=".75"/><rect x="323.9" y="137.4" width="11.9" height="9.5" rx="2.4" fill="#c9c9c6"/><rect x="325.7" y="138.3" width="8.3" height="3" fill="#1d2025" opacity=".8"/><rect x="378.2" y="142.8" width="17.9" height="5.4" fill="#26282b" opacity=".75"/><rect x="386.5" y="137.5" width="11.9" height="9.5" rx="2.4" fill="#b8bcc0"/><rect x="388.3" y="138.4" width="8.3" height="3" fill="#1d2025" opacity=".8"/><rect x="264" y="142.9" width="17.9" height="5.4" fill="#26282b" opacity=".75"/><rect x="272.4" y="137.5" width="11.9" height="9.6" rx="2.4" fill="#f0f0f0"/><rect x="274.2" y="138.5" width="8.4" height="3" fill="#1d2025" opacity=".8"/><rect x="151.9" y="142.9" width="17.9" height="5.4" fill="#26282b" opacity=".75"/><rect x="160.2" y="137.6" width="11.9" height="9.6" rx="2.4" fill="#b8bcc0"/><rect x="162" y="138.5" width="8.4" height="3" fill="#1d2025" opacity=".8"/><rect x="293.2" y="143.1" width="17.9" height="5.4" fill="#26282b" opacity=".75"/><rect x="301.6" y="137.7" width="12" height="9.6" rx="2.4" fill="#c9c9c6"/><rect x="303.4" y="138.6" width="8.4" height="3" fill="#1d2025" opacity=".8"/><rect x="380.8" y="143.2" width="18" height="5.4" fill="#26282b" opacity=".75"/><rect x="389.2" y="137.8" width="12" height="9.6" rx="2.4" fill="#55585e"/><rect x="391" y="138.8" width="8.4" height="3" fill="#1d2025" opacity=".8"/><rect x="279.5" y="143.4" width="18" height="5.4" fill="#26282b" opacity=".75"/><rect x="287.9" y="138" width="12" height="9.6" rx="2.4" fill="#8a8f96"/><rect x="289.7" y="138.9" width="8.4" height="3" fill="#1d2025" opacity=".8"/><rect x="228.4" y="144.8" width="18.3" height="5.5" fill="#26282b" opacity=".75"/><rect x="237" y="139.3" width="12.2" height="9.8" rx="2.4" fill="#b8bcc0"/><rect x="238.8" y="140.3" width="8.6" height="3.1" fill="#1d2025" opacity=".8"/><rect x="313.1" y="146.1" width="18.6" height="5.6" fill="#26282b" opacity=".75"/><rect x="321.8" y="140.5" width="12.4" height="9.9" rx="2.5" fill="#c9c9c6"/><rect x="323.7" y="141.5" width="8.7" height="3.1" fill="#1d2025" opacity=".8"/><rect x="288" y="77" width="5" height="3" rx="1" fill="#e4e4e4"/><rect x="293.9" y="78.8" width="5.2" height="3.2" rx="1" fill="#f0f0f0"/><rect x="299.4" y="80.5" width="6.8" height="3.3" rx="1" fill="#dcdcdc"/><rect x="306.6" y="82.6" width="7.3" height="3.5" rx="1" fill="#1f2226"/><rect x="315.6" y="85.3" width="7.9" height="3.8" rx="1" fill="#2b2e36"/><rect x="323.7" y="87.8" width="7.1" height="4" rx="1" fill="#b8bcc0"/><rect x="333.4" y="90.7" width="8.3" height="4.3" rx="1" fill="#3a3d44"/><rect x="342.7" y="93.5" width="8" height="4.6" rx="1" fill="#c9c9c6"/><rect x="353.1" y="96.7" width="8.8" height="4.9" rx="1" fill="#55585e"/><rect x="362.7" y="99.6" width="9.9" height="5.2" rx="1" fill="#e4e4e4"/><rect x="374.7" y="103.2" width="9.8" height="5.5" rx="1" fill="#c9c9c6"/><rect x="387.5" y="107.1" width="12.4" height="5.9" rx="1" fill="#55585e"/><rect x="404.2" y="112.1" width="9.5" height="6.4" rx="1" fill="#f0f0f0"/><rect x="414.4" y="115.2" width="11.4" height="6.7" rx="1" fill="#f0f0f0"/><rect x="430.8" y="120.2" width="13.2" height="7.2" rx="1" fill="#1f2226"/><rect x="444.2" y="124.2" width="11.4" height="7.5" rx="1" fill="#2b2e36"/><ellipse cx="418" cy="103" rx="12" ry="6.500" fill="#4b7a3a"/><path d="M128.2 110.6L133.4 109.8H142.8V113H129z" fill="#242629" opacity=".88"/><path d="M111.5 116.1L118.6 115.2H131.5V118.7H112.6z" fill="#242629" opacity=".88"/><path d="M285.5 118.4L297 116.9H318V122.9H287.2z" fill="#242629" opacity=".88"/><path d="M241.1 120L252.6 118.6H273.6V124.2H242.9z" fill="#242629" opacity=".88"/><path d="M312.1 120.3L323.6 118.7H344.6V125.1H313.9z" fill="#242629" opacity=".88"/><path d="M131.9 126.9L140.4 125.6H155.7V131H133.2z" fill="#242629" opacity=".88"/><path d="M334.3 129.6L345.8 128.5H366.8V133.1H336.1z" fill="#242629" opacity=".88"/><path d="M356.5 133.9L368 132.4H388.9V138.4H358.2z" fill="#242629" opacity=".88"/><path d="M226.4 133.9L235.6 132.4H252.4V138.4H227.8z" fill="#242629" opacity=".88"/><path d="M64.8 135L74.5 133.8H92.2V138.7H66.2z" fill="#242629" opacity=".88"/><path d="M258.9 135.3L270.4 133.6H291.3V140.6H260.6z" fill="#242629" opacity=".88"/><path d="M243 136.1L253.1 134.6H271.4V140.6H244.5z" fill="#242629" opacity=".88"/><path d="M307.7 135.3L319.2 133.6H340.1V140.6H309.4z" fill="#242629" opacity=".88"/><path d="M376.4 135.3L388 133.6H408.9V140.6H378.2z" fill="#242629" opacity=".88"/><path d="M82.1 138.6L94.3 136.9H116.3V143.7H84z" fill="#242629" opacity=".88"/><path d="M115.4 140.9L124 139.5H139.7V145H116.7z" fill="#242629" opacity=".88"/><path d="M40.3 144.4L52.2 143.3H73.6V147.8H42.1z" fill="#242629" opacity=".88"/><path d="M414.1 147.8L425.7 146.2H446.6V152.6H415.9z" fill="#242629" opacity=".88"/><path d="M68.5 148.4L79.2 147H98.7V152.8H70.1z" fill="#242629" opacity=".88"/><path d="M330.5 147.1L344.9 145H371.1V153.9H332.7z" fill="#242629" opacity=".88"/><path d="M283.6 148.7L296.6 146.9H320.1V153.9H285.6z" fill="#242629" opacity=".88"/><path d="M227.5 152.2L237.6 150.7H255.9V157H229z" fill="#242629" opacity=".88"/><path d="M379 151.5L392 149.7H415.5V157H381z" fill="#242629" opacity=".88"/><path d="M263.6 154L276.6 152.1H300.2V159.7H265.6z" fill="#242629" opacity=".88"/><path d="M125.5 155.6L136.6 154.2H156.7V160H127.2z" fill="#242629" opacity=".88"/><path d="M430 156.8L443 154.8H466.5V162.8H432z" fill="#242629" opacity=".88"/><path d="M148.8 159.2L165 157.7H194.5V164H151.2z" fill="#242629" opacity=".88"/><path d="M346 159.7L360.5 158H386.6V165H348.3z" fill="#242629" opacity=".88"/><path d="M398.1 163.4L413.4 161.5H441.2V169.5H400.5z" fill="#242629" opacity=".88"/><path d="M307.5 161.9L324.3 159.5H354.6V169.5H310.1z" fill="#242629" opacity=".88"/><path d="M312.1 167L323.6 166H344.6V170.3H313.9z" fill="#242629" opacity=".88"/><path d="M255.1 167L269.5 166H295.7V170.3H257.3z" fill="#242629" opacity=".88"/><path d="M277.3 174.5L291.7 172.6H317.9V180.6H279.5z" fill="#242629" opacity=".88"/><path d="M326.6 175L341.6 173.2H368.9V180.6H329z" fill="#242629" opacity=".88"/><path d="M430.8 176L441.5 173.8H460.8V182.8H432.4z" fill="#242629" opacity=".88"/><path d="M54.9 179.4L68.7 177.6H93.8V185H57z" fill="#242629" opacity=".88"/><path d="M369.5 178.9L389.7 176.2H426.4V187.2H372.7z" fill="#242629" opacity=".88"/><path d="M2.2 179.4L20.7 176.8H54.2V187.2H5.1z" fill="#242629" opacity=".88"/><path d="M116.4 184.9L131.7 182.7H159.4V191.6H118.8z" fill="#242629" opacity=".88"/><path d="M218 185.4L235.3 183.1H266.8V192.5H220.7z" fill="#242629" opacity=".88"/><path d="M336 193.6L351.3 191.6H379.1V199.6H338.4z" fill="#242629" opacity=".88"/><path d="M387.6 191.5L409.3 188.5H448.5V200.5H391z" fill="#242629" opacity=".88"/><path d="M142.8 194.7L158.9 192.2H188.3V202.7H145.3z" fill="#242629" opacity=".88"/><path d="M284.7 205.5L304.3 202.8H339.9V213.8H287.7z" fill="#242629" opacity=".88"/><path d="M355.9 208.5L374.6 206.8H408.7V213.8H358.8z" fill="#242629" opacity=".88"/><path d="M64.5 206.2L85.6 203.1H123.8V216H67.8z" fill="#242629" opacity=".88"/><path d="M222.7 218.4L244.9 215.2H285.2V228H226.1z" fill="#242629" opacity=".88"/><path d="M371.9 243.9L402.2 239.2H457.1V258.2H376.5z" fill="#242629" opacity=".88"/><path d="M308.5 255.9L335.3 252H384V268H312.6z" fill="#242629" opacity=".88"/><path d="M90.6 258.7L118.8 254.5H170.1V271.5H94.9z" fill="#242629" opacity=".88"/><path d="M-12.9 271.3L20.5 265.8H81.3V288.4H-7.8z" fill="#242629" opacity=".88"/><path d="M414 293.7L444.3 288.7H499.3V309.2H418.7z" fill="#242629" opacity=".88"/><path d="M293.7 291.5L339 284.3H421.2V313.7H300.7z" fill="#242629" opacity=".88"/><path d="M210 294.8L248 287.9H317.1V315.9H215.8z" fill="#242629" opacity=".88"/><path d="M136 109.1L136.6 106.3Q139 105.8 141.4 106.3L142 109.1z" fill="#2c2e33"/><path d="M136.4 108.8L136.9 106.8H141.1L141.6 108.8z" fill="#2a2e34"/><rect x="135" y="108.5" width="8" height="3.8" rx="0.8" fill="#2c2e33"/><rect x="135.2" y="111.2" width="7.5" height="1" rx="0.3" fill="#1f2124"/><rect x="135.4" y="112" width="1.4" height="1" fill="#131416"/><rect x="141.2" y="112" width="1.4" height="1" fill="#131416"/><rect x="135.4" y="109.8" width="1.5" height="0.8" fill="#f3efdf" opacity=".9"/><rect x="141.1" y="109.8" width="1.5" height="0.8" fill="#f3efdf" opacity=".9"/><rect x="137.2" y="109.9" width="3.5" height="1" fill="#111" opacity=".45"/><rect x="138.2" y="111.3" width="1.6" height="0.6" fill="#e6e6e6" opacity=".7"/><path d="M122.1 114.4L123 111.4Q126.2 110.8 129.5 111.4L130.4 114.4z" fill="#c9c9c9"/><path d="M122.7 114.1L123.4 111.9H129.1L129.8 114.1z" fill="#2a2e34"/><rect x="120.8" y="113.8" width="10.9" height="4.2" rx="0.9" fill="#c9c9c9"/><rect x="121.1" y="116.7" width="10.2" height="1.1" rx="0.3" fill="#909090"/><rect x="121.3" y="117.6" width="1.9" height="1.1" fill="#131416"/><rect x="129.3" y="117.6" width="1.9" height="1.1" fill="#131416"/><rect x="121.3" y="115.2" width="2.1" height="0.8" fill="#f3efdf" opacity=".9"/><rect x="129.1" y="115.2" width="2.1" height="0.8" fill="#f3efdf" opacity=".9"/><rect x="123.9" y="115.3" width="4.8" height="1.1" fill="#111" opacity=".45"/><rect x="125.2" y="116.9" width="2.2" height="0.6" fill="#e6e6e6" opacity=".7"/><path d="M302.7 115.4L304.1 110.2Q309.4 109.2 314.8 110.2L316.2 115.4z" fill="#333"/><path d="M303.6 114.9L304.8 111.2H314L315.3 114.9z" fill="#2a2e34"/><rect x="300.6" y="114.4" width="17.7" height="7.2" rx="1.6" fill="#333"/><rect x="301.1" y="119.4" width="16.7" height="1.9" rx="0.5" fill="#242424"/><rect x="301.4" y="121" width="3" height="1.9" fill="#131416"/><rect x="314.4" y="121" width="3" height="1.9" fill="#131416"/><rect x="301.3" y="116.2" width="2.3" height="1.7" fill="#d23c2c"/><rect x="315.3" y="116.2" width="2.3" height="1.7" fill="#d23c2c"/><rect x="307.7" y="118.1" width="3.5" height="1.1" fill="#e6e6e6" opacity=".8"/><path d="M258.3 117.3L259.7 112.4Q265.1 111.4 270.4 112.4L271.8 117.3z" fill="#ddd"/><path d="M259.2 116.8L260.5 113.3H269.7L270.9 116.8z" fill="#2a2e34"/><rect x="256.2" y="116.3" width="17.7" height="6.7" rx="1.5" fill="#ddd"/><rect x="256.7" y="121" width="16.7" height="1.7" rx="0.4" fill="#9f9f9f"/><rect x="257.1" y="122.5" width="3" height="1.7" fill="#131416"/><rect x="270" y="122.5" width="3" height="1.7" fill="#131416"/><rect x="256.9" y="118" width="2.3" height="1.6" fill="#d23c2c"/><rect x="270.9" y="118" width="2.3" height="1.6" fill="#d23c2c"/><rect x="263.3" y="119.7" width="3.5" height="1" fill="#e6e6e6" opacity=".8"/><path d="M329.3 117.1L330.7 111.6Q336.1 110.5 341.4 111.6L342.8 117.1z" fill="#ccc"/><path d="M330.2 116.6L331.4 112.6H340.7L341.9 116.6z" fill="#2a2e34"/><rect x="327.2" y="116" width="17.7" height="7.7" rx="1.7" fill="#ccc"/><rect x="327.7" y="121.4" width="16.7" height="2" rx="0.5" fill="#929292"/><rect x="328.1" y="123.1" width="3" height="2" fill="#131416"/><rect x="341" y="123.1" width="3" height="2" fill="#131416"/><rect x="327.9" y="118" width="2.3" height="1.8" fill="#d23c2c"/><rect x="341.9" y="118" width="2.3" height="1.8" fill="#d23c2c"/><rect x="334.3" y="120" width="3.5" height="1.1" fill="#e6e6e6" opacity=".8"/><path d="M144.6 124.3L145.6 119.6Q149.5 118.6 153.4 119.6L154.4 124.3z" fill="#2c3f6a"/><path d="M145.2 123.8L146.1 120.4H152.9L153.8 123.8z" fill="#2a2e34"/><rect x="143" y="123.3" width="13" height="6.5" rx="1.4" fill="#2c3f6a"/><rect x="143.4" y="127.9" width="12.2" height="1.7" rx="0.4" fill="#1f2d4c"/><rect x="143.7" y="129.3" width="2.2" height="1.7" fill="#131416"/><rect x="153.1" y="129.3" width="2.2" height="1.7" fill="#131416"/><rect x="143.7" y="125.6" width="2.5" height="1.3" fill="#f3efdf" opacity=".9"/><rect x="152.9" y="125.6" width="2.5" height="1.3" fill="#f3efdf" opacity=".9"/><rect x="146.6" y="125.7" width="5.7" height="1.7" fill="#111" opacity=".45"/><rect x="148.2" y="128.1" width="2.6" height="1" fill="#e6e6e6" opacity=".7"/><path d="M351.5 127.4L352.9 123.4Q358.2 122.6 363.6 123.4L365 127.4z" fill="#3a3a3a"/><path d="M352.4 127L353.6 124.1H362.8L364.1 127z" fill="#2a2e34"/><rect x="349.4" y="126.6" width="17.7" height="5.5" rx="1.2" fill="#3a3a3a"/><rect x="349.9" y="130.4" width="16.7" height="1.4" rx="0.4" fill="#292929"/><rect x="350.2" y="131.7" width="3" height="1.4" fill="#131416"/><rect x="363.2" y="131.7" width="3" height="1.4" fill="#131416"/><rect x="350.1" y="128" width="2.3" height="1.3" fill="#d23c2c"/><rect x="364.1" y="128" width="2.3" height="1.3" fill="#d23c2c"/><rect x="356.5" y="129.4" width="3.5" height="0.8" fill="#e6e6e6" opacity=".8"/><path d="M373.7 131L375.1 125.8Q380.4 124.7 385.7 125.8L387.2 131z" fill="#dedede"/><path d="M374.6 130.4L375.8 126.7H385L386.3 130.4z" fill="#2a2e34"/><rect x="371.5" y="129.9" width="17.7" height="7.2" rx="1.6" fill="#dedede"/><rect x="372.1" y="134.9" width="16.7" height="1.9" rx="0.5" fill="#9f9f9f"/><rect x="372.4" y="136.5" width="3" height="1.9" fill="#131416"/><rect x="385.4" y="136.5" width="3" height="1.9" fill="#131416"/><rect x="372.3" y="131.8" width="2.3" height="1.7" fill="#d23c2c"/><rect x="386.3" y="131.8" width="2.3" height="1.7" fill="#d23c2c"/><rect x="378.6" y="133.6" width="3.5" height="1.1" fill="#e6e6e6" opacity=".8"/><path d="M240.2 131L241.3 125.8Q245.5 124.7 249.8 125.8L250.9 131z" fill="#35383e"/><path d="M240.9 130.4L241.9 126.7H249.2L250.2 130.4z" fill="#2a2e34"/><rect x="238.4" y="129.9" width="14.2" height="7.2" rx="1.6" fill="#35383e"/><rect x="238.9" y="134.9" width="13.3" height="1.9" rx="0.5" fill="#26282c"/><rect x="239.2" y="136.5" width="2.4" height="1.9" fill="#131416"/><rect x="249.5" y="136.5" width="2.4" height="1.9" fill="#131416"/><rect x="239" y="131.8" width="1.8" height="1.7" fill="#d23c2c"/><rect x="250.2" y="131.8" width="1.8" height="1.7" fill="#d23c2c"/><rect x="244.1" y="133.6" width="2.8" height="1.1" fill="#e6e6e6" opacity=".8"/><path d="M79.3 132.6L80.5 128.3Q85 127.5 89.5 128.3L90.7 132.6z" fill="#3a3f4a"/><path d="M80 132.2L81.1 129.1H88.9L90 132.2z" fill="#2a2e34"/><rect x="77.5" y="131.7" width="15" height="5.9" rx="1.3" fill="#3a3f4a"/><rect x="78" y="135.9" width="14.1" height="1.5" rx="0.4" fill="#292d35"/><rect x="78.2" y="137.2" width="2.5" height="1.5" fill="#131416"/><rect x="89.2" y="137.2" width="2.5" height="1.5" fill="#131416"/><rect x="78.2" y="133.8" width="2.9" height="1.2" fill="#f3efdf" opacity=".9"/><rect x="88.9" y="133.8" width="2.8" height="1.2" fill="#f3efdf" opacity=".9"/><rect x="81.7" y="133.9" width="6.6" height="1.5" fill="#111" opacity=".45"/><rect x="83.5" y="136.1" width="3" height="0.9" fill="#e6e6e6" opacity=".7"/><path d="M276.1 131.9L277.5 125.9Q282.8 124.6 288.1 125.9L289.6 131.9z" fill="#cfcfcf"/><path d="M277 131.3L278.2 127H287.4L288.7 131.3z" fill="#2a2e34"/><rect x="273.9" y="130.7" width="17.7" height="8.4" rx="1.9" fill="#cfcfcf"/><rect x="274.5" y="136.6" width="16.7" height="2.2" rx="0.6" fill="#959595"/><rect x="274.8" y="138.5" width="3" height="2.2" fill="#131416"/><rect x="287.8" y="138.5" width="3" height="2.2" fill="#131416"/><rect x="274.6" y="132.9" width="2.3" height="2" fill="#d23c2c"/><rect x="288.7" y="132.9" width="2.3" height="2" fill="#d23c2c"/><rect x="281" y="135" width="3.5" height="1.2" fill="#e6e6e6" opacity=".8"/><path d="M258.1 133.2L259.3 128Q264 126.9 268.6 128L269.9 133.2z" fill="#e6e6e6"/><path d="M258.8 132.6L259.9 128.9H268L269.1 132.6z" fill="#2a2e34"/><rect x="256.2" y="132.1" width="15.5" height="7.2" rx="1.6" fill="#e6e6e6"/><rect x="256.7" y="137.2" width="14.6" height="1.9" rx="0.5" fill="#a5a5a5"/><rect x="257" y="138.8" width="2.6" height="1.9" fill="#131416"/><rect x="268.3" y="138.8" width="2.6" height="1.9" fill="#131416"/><rect x="256.8" y="134" width="2" height="1.7" fill="#d23c2c"/><rect x="269.1" y="134" width="2" height="1.7" fill="#d23c2c"/><rect x="262.4" y="135.8" width="3.1" height="1.1" fill="#e6e6e6" opacity=".8"/><path d="M324.9 131.9L326.3 125.9Q331.6 124.6 336.9 125.9L338.4 131.9z" fill="#b43a3a"/><path d="M325.8 131.3L327 127H336.2L337.5 131.3z" fill="#2a2e34"/><rect x="322.7" y="130.7" width="17.7" height="8.4" rx="1.9" fill="#b43a3a"/><rect x="323.3" y="136.6" width="16.7" height="2.2" rx="0.6" fill="#812929"/><rect x="323.6" y="138.5" width="3" height="2.2" fill="#131416"/><rect x="336.6" y="138.5" width="3" height="2.2" fill="#131416"/><rect x="323.5" y="132.9" width="2.3" height="2" fill="#d23c2c"/><rect x="337.5" y="132.9" width="2.3" height="2" fill="#d23c2c"/><rect x="329.8" y="135" width="3.5" height="1.2" fill="#e6e6e6" opacity=".8"/><path d="M393.6 131.9L395.1 125.9Q400.4 124.6 405.7 125.9L407.1 131.9z" fill="#2d2f35"/><path d="M394.5 131.3L395.8 127H405L406.2 131.3z" fill="#2a2e34"/><rect x="391.5" y="130.7" width="17.7" height="8.4" rx="1.9" fill="#2d2f35"/><rect x="392" y="136.6" width="16.7" height="2.2" rx="0.6" fill="#202126"/><rect x="392.4" y="138.5" width="3" height="2.2" fill="#131416"/><rect x="405.4" y="138.5" width="3" height="2.2" fill="#131416"/><rect x="392.2" y="132.9" width="2.3" height="2" fill="#d23c2c"/><rect x="406.2" y="132.9" width="2.3" height="2" fill="#d23c2c"/><rect x="398.6" y="135" width="3.5" height="1.2" fill="#e6e6e6" opacity=".8"/><path d="M100.2 135.3L101.7 129.4Q107.4 128.2 113 129.4L114.5 135.3z" fill="#ececec"/><path d="M101.2 134.7L102.5 130.5H112.2L113.5 134.7z" fill="#2a2e34"/><rect x="98" y="134.1" width="18.7" height="8.1" rx="1.8" fill="#ececec"/><rect x="98.6" y="139.8" width="17.6" height="2.1" rx="0.5" fill="#a9a9a9"/><rect x="98.9" y="141.6" width="3.2" height="2.1" fill="#131416"/><rect x="112.6" y="141.6" width="3.2" height="2.1" fill="#131416"/><rect x="98.9" y="136.9" width="3.6" height="1.6" fill="#f3efdf" opacity=".9"/><rect x="112.2" y="136.9" width="3.6" height="1.6" fill="#f3efdf" opacity=".9"/><rect x="103.2" y="137.1" width="8.2" height="2.1" fill="#111" opacity=".45"/><rect x="105.5" y="140.1" width="3.7" height="1.2" fill="#e6e6e6" opacity=".7"/><path d="M128.3 138.2L129.4 133.4Q133.4 132.4 137.3 133.4L138.4 138.2z" fill="#dcdcdc"/><path d="M129 137.7L129.9 134.3H136.8L137.7 137.7z" fill="#2a2e34"/><rect x="126.7" y="137.2" width="13.3" height="6.6" rx="1.5" fill="#dcdcdc"/><rect x="127.1" y="141.8" width="12.5" height="1.7" rx="0.4" fill="#9e9e9e"/><rect x="127.4" y="143.3" width="2.3" height="1.7" fill="#131416"/><rect x="137.1" y="143.3" width="2.3" height="1.7" fill="#131416"/><rect x="127.4" y="139.5" width="2.5" height="1.3" fill="#f3efdf" opacity=".9"/><rect x="136.8" y="139.5" width="2.5" height="1.3" fill="#f3efdf" opacity=".9"/><rect x="130.4" y="139.6" width="5.9" height="1.7" fill="#111" opacity=".45"/><rect x="132" y="142.1" width="2.7" height="1" fill="#e6e6e6" opacity=".7"/><path d="M58 142.2L59.4 138.3Q64.9 137.5 70.4 138.3L71.8 142.2z" fill="#3b4150"/><path d="M58.9 141.8L60.2 139H69.6L70.9 141.8z" fill="#2a2e34"/><rect x="55.8" y="141.4" width="18.2" height="5.4" rx="1.2" fill="#3b4150"/><rect x="56.3" y="145.2" width="17.1" height="1.4" rx="0.4" fill="#2a2e39"/><rect x="56.7" y="146.4" width="3.1" height="1.4" fill="#131416"/><rect x="70" y="146.4" width="3.1" height="1.4" fill="#131416"/><rect x="56.7" y="143.3" width="3.5" height="1.1" fill="#f3efdf" opacity=".9"/><rect x="69.6" y="143.3" width="3.5" height="1.1" fill="#f3efdf" opacity=".9"/><rect x="60.9" y="143.4" width="8" height="1.4" fill="#111" opacity=".45"/><rect x="63.1" y="145.4" width="3.6" height="0.8" fill="#e6e6e6" opacity=".7"/><path d="M431.3 144.7L432.8 139.1Q438.1 138 443.4 139.1L444.8 144.7z" fill="#d9d9d9"/><path d="M432.2 144.1L433.5 140.1H442.7L443.9 144.1z" fill="#2a2e34"/><rect x="429.2" y="143.5" width="17.7" height="7.7" rx="1.7" fill="#d9d9d9"/><rect x="429.8" y="148.9" width="16.7" height="2" rx="0.5" fill="#9c9c9c"/><rect x="430.1" y="150.6" width="3" height="2" fill="#131416"/><rect x="443.1" y="150.6" width="3" height="2" fill="#131416"/><rect x="429.9" y="145.5" width="2.3" height="1.8" fill="#d23c2c"/><rect x="443.9" y="145.5" width="2.3" height="1.8" fill="#d23c2c"/><rect x="436.3" y="147.5" width="3.5" height="1.1" fill="#e6e6e6" opacity=".8"/><path d="M84.5 145.6L85.8 140.6Q90.8 139.6 95.7 140.6L97 145.6z" fill="#26282c"/><path d="M85.3 145.1L86.5 141.5H95L96.2 145.1z" fill="#2a2e34"/><rect x="82.5" y="144.6" width="16.5" height="6.9" rx="1.5" fill="#26282c"/><rect x="83" y="149.5" width="15.5" height="1.8" rx="0.5" fill="#1b1c1f"/><rect x="83.3" y="151" width="2.8" height="1.8" fill="#131416"/><rect x="95.4" y="151" width="2.8" height="1.8" fill="#131416"/><rect x="83.3" y="147" width="3.1" height="1.4" fill="#f3efdf" opacity=".9"/><rect x="95" y="147" width="3.1" height="1.4" fill="#f3efdf" opacity=".9"/><rect x="87.1" y="147.2" width="7.3" height="1.8" fill="#111" opacity=".45"/><rect x="89.1" y="149.7" width="3.3" height="1" fill="#e6e6e6" opacity=".7"/><rect x="349.8" y="135.2" width="21.3" height="16.8" rx="2.4" fill="#e9e9e9"/><rect x="351.1" y="134.4" width="18.6" height="2.4" rx="1.4" fill="#eeeeee"/><rect x="351.6" y="137.2" width="17.7" height="5.2" rx="1" fill="#2a2e34"/><rect x="349.8" y="148.3" width="21.3" height="2.8" rx="0.7" fill="#a7a7a7"/><rect x="350.5" y="151.1" width="3.8" height="2.8" fill="#131416"/><rect x="366.7" y="151.1" width="3.8" height="2.8" fill="#131416"/><rect x="350.2" y="144" width="2.9" height="2.6" fill="#d23c2c"/><rect x="367.8" y="144" width="2.9" height="2.6" fill="#d23c2c"/><rect x="358.2" y="146.7" width="4.4" height="1.6" fill="#e6e6e6" opacity=".8"/><path d="M303 145.2L304.6 139.2Q310.5 137.9 316.5 139.2L318.1 145.2z" fill="#30333a"/><path d="M304 144.6L305.4 140.3H315.7L317.1 144.6z" fill="#2a2e34"/><rect x="300.6" y="144" width="20" height="8.4" rx="1.9" fill="#30333a"/><rect x="301.2" y="149.9" width="18.8" height="2.2" rx="0.6" fill="#222429"/><rect x="301.6" y="151.8" width="3.4" height="2.2" fill="#131416"/><rect x="316.1" y="151.8" width="3.4" height="2.2" fill="#131416"/><rect x="301.4" y="146.2" width="2.6" height="2" fill="#d23c2c"/><rect x="317.1" y="146.2" width="2.6" height="2" fill="#d23c2c"/><rect x="308.5" y="148.3" width="4" height="1.2" fill="#e6e6e6" opacity=".8"/><path d="M242.5 149.1L243.8 143.6Q248.4 142.4 253.1 143.6L254.3 149.1z" fill="#1d1f22"/><path d="M243.3 148.5L244.4 144.5H252.5L253.6 148.5z" fill="#2a2e34"/><rect x="240.7" y="148" width="15.5" height="7.7" rx="1.7" fill="#1d1f22"/><rect x="241.1" y="153.3" width="14.6" height="2" rx="0.5" fill="#141618"/><rect x="241.4" y="155.1" width="2.6" height="2" fill="#131416"/><rect x="252.8" y="155.1" width="2.6" height="2" fill="#131416"/><rect x="241.3" y="149.9" width="2" height="1.8" fill="#d23c2c"/><rect x="253.6" y="149.9" width="2" height="1.8" fill="#d23c2c"/><rect x="246.9" y="151.9" width="3.1" height="1.1" fill="#e6e6e6" opacity=".8"/><rect x="396.3" y="141.6" width="19.2" height="13.8" rx="2" fill="#b9b9b4"/><rect x="397.5" y="141" width="16.8" height="2" rx="1.2" fill="#cacac6"/><rect x="397.9" y="143.3" width="16" height="4.3" rx="0.8" fill="#2a2e34"/><rect x="396.3" y="152.4" width="19.2" height="2.3" rx="0.6" fill="#858581"/><rect x="396.9" y="154.7" width="3.4" height="2.3" fill="#131416"/><rect x="411.5" y="154.7" width="3.4" height="2.3" fill="#131416"/><rect x="396.7" y="148.8" width="2.6" height="2.1" fill="#d23c2c"/><rect x="412.5" y="148.8" width="2.6" height="2.1" fill="#d23c2c"/><rect x="403.9" y="151.1" width="4" height="1.3" fill="#e6e6e6" opacity=".8"/><path d="M283 150.3L284.6 143.7Q290.6 142.3 296.6 143.7L298.2 150.3z" fill="#e2e2e2"/><path d="M284 149.6L285.4 144.9H295.8L297.2 149.6z" fill="#2a2e34"/><rect x="280.6" y="148.9" width="20" height="9.1" rx="2" fill="#e2e2e2"/><rect x="281.2" y="155.3" width="18.8" height="2.4" rx="0.6" fill="#a2a2a2"/><rect x="281.6" y="157.3" width="3.4" height="2.4" fill="#131416"/><rect x="296.2" y="157.3" width="3.4" height="2.4" fill="#131416"/><rect x="281.4" y="151.3" width="2.6" height="2.2" fill="#d23c2c"/><rect x="297.2" y="151.3" width="2.6" height="2.2" fill="#d23c2c"/><rect x="288.6" y="153.6" width="4" height="1.3" fill="#e6e6e6" opacity=".8"/><path d="M142 152.7L143.4 147.7Q148.5 146.6 153.6 147.7L155 152.7z" fill="#d9d9d9"/><path d="M142.9 152.2L144.1 148.6H152.9L154.1 152.2z" fill="#2a2e34"/><rect x="140" y="151.7" width="17" height="7" rx="1.6" fill="#d9d9d9"/><rect x="140.5" y="156.6" width="16" height="1.8" rx="0.5" fill="#9c9c9c"/><rect x="140.8" y="158.2" width="2.9" height="1.8" fill="#131416"/><rect x="153.3" y="158.2" width="2.9" height="1.8" fill="#131416"/><rect x="140.8" y="154.2" width="3.2" height="1.4" fill="#f3efdf" opacity=".9"/><rect x="152.9" y="154.2" width="3.2" height="1.4" fill="#f3efdf" opacity=".9"/><rect x="144.8" y="154.3" width="7.5" height="1.8" fill="#111" opacity=".45"/><rect x="146.8" y="156.9" width="3.4" height="1" fill="#e6e6e6" opacity=".7"/><rect x="447.4" y="146.1" width="19.2" height="14.9" rx="2.1" fill="#c9c9c9"/><rect x="448.6" y="145.4" width="16.8" height="2.1" rx="1.3" fill="#d6d6d6"/><rect x="449" y="147.9" width="16" height="4.6" rx="0.9" fill="#2a2e34"/><rect x="447.4" y="157.8" width="19.2" height="2.5" rx="0.6" fill="#909090"/><rect x="448" y="160.3" width="3.4" height="2.5" fill="#131416"/><rect x="462.5" y="160.3" width="3.4" height="2.5" fill="#131416"/><rect x="447.8" y="153.9" width="2.6" height="2.3" fill="#d23c2c"/><rect x="463.5" y="153.9" width="2.6" height="2.3" fill="#d23c2c"/><rect x="455" y="156.4" width="4" height="1.4" fill="#e6e6e6" opacity=".8"/><path d="M173 156.2L175 150.7Q182.5 149.6 190 150.7L192 156.2z" fill="#cfcfcf"/><path d="M174.2 155.6L176 151.7H189L190.8 155.6z" fill="#2a2e34"/><rect x="170" y="155" width="25" height="7.6" rx="1.7" fill="#cfcfcf"/><rect x="170.8" y="160.4" width="23.5" height="2" rx="0.5" fill="#959595"/><rect x="171.2" y="162" width="4.2" height="2" fill="#131416"/><rect x="189.5" y="162" width="4.2" height="2" fill="#131416"/><rect x="171.2" y="157.7" width="4.8" height="1.5" fill="#f3efdf" opacity=".9"/><rect x="189" y="157.7" width="4.7" height="1.5" fill="#f3efdf" opacity=".9"/><rect x="177" y="157.8" width="11" height="2" fill="#111" opacity=".45"/><rect x="180" y="160.6" width="5" height="1.1" fill="#e6e6e6" opacity=".7"/><path d="M367.6 156.3L369.3 150.3Q376 149 382.6 150.3L384.4 156.3z" fill="#e6e6e6"/><path d="M368.7 155.7L370.2 151.4H381.7L383.3 155.7z" fill="#2a2e34"/><rect x="364.9" y="155.1" width="22.2" height="8.4" rx="1.9" fill="#e6e6e6"/><rect x="365.6" y="161" width="20.9" height="2.2" rx="0.6" fill="#a5a5a5"/><rect x="366" y="162.9" width="3.8" height="2.2" fill="#131416"/><rect x="382.2" y="162.9" width="3.8" height="2.2" fill="#131416"/><rect x="365.8" y="157.3" width="2.9" height="2" fill="#d23c2c"/><rect x="383.3" y="157.3" width="2.9" height="2" fill="#d23c2c"/><rect x="373.8" y="159.4" width="4.4" height="1.2" fill="#e6e6e6" opacity=".8"/><rect x="418.6" y="152.8" width="22.6" height="14.9" rx="2.1" fill="#e8e8e8"/><rect x="420" y="152.1" width="19.8" height="2.1" rx="1.3" fill="#ededed"/><rect x="420.5" y="154.6" width="18.8" height="4.6" rx="0.9" fill="#2a2e34"/><rect x="418.6" y="164.5" width="22.6" height="2.5" rx="0.6" fill="#a7a7a7"/><rect x="419.3" y="167" width="4" height="2.5" fill="#131416"/><rect x="436.5" y="167" width="4" height="2.5" fill="#131416"/><rect x="419.1" y="160.6" width="3.1" height="2.3" fill="#d23c2c"/><rect x="437.6" y="160.6" width="3.1" height="2.3" fill="#d23c2c"/><rect x="427.5" y="163.1" width="4.7" height="1.4" fill="#e6e6e6" opacity=".8"/><rect x="329.9" y="148.6" width="24.7" height="18.6" rx="2.7" fill="#2b2d33"/><rect x="331.5" y="147.7" width="21.6" height="2.7" rx="1.6" fill="#606166"/><rect x="332" y="150.8" width="20.6" height="5.8" rx="1.1" fill="#2a2e34"/><rect x="329.9" y="163.3" width="24.7" height="3.1" rx="0.8" fill="#1e2024"/><rect x="330.7" y="166.4" width="4.4" height="3.1" fill="#131416"/><rect x="349.5" y="166.4" width="4.4" height="3.1" fill="#131416"/><rect x="330.4" y="158.4" width="3.3" height="2.9" fill="#d23c2c"/><rect x="350.8" y="158.4" width="3.3" height="2.9" fill="#d23c2c"/><rect x="339.7" y="161.5" width="5.1" height="1.8" fill="#e6e6e6" opacity=".8"/><path d="M329.3 164.9L330.7 161.1Q336.1 160.3 341.4 161.1L342.8 164.9z" fill="#8a2f2f"/><path d="M330.2 164.5L331.4 161.8H340.7L341.9 164.5z" fill="#2a2e34"/><rect x="327.2" y="164.1" width="17.7" height="5.3" rx="1.2" fill="#8a2f2f"/><rect x="327.7" y="167.8" width="16.7" height="1.4" rx="0.4" fill="#632121"/><rect x="328.1" y="169" width="3" height="1.4" fill="#131416"/><rect x="341" y="169" width="3" height="1.4" fill="#131416"/><rect x="327.9" y="165.5" width="2.3" height="1.3" fill="#d23c2c"/><rect x="341.9" y="165.5" width="2.3" height="1.3" fill="#d23c2c"/><rect x="334.3" y="166.8" width="3.5" height="0.8" fill="#e6e6e6" opacity=".8"/><path d="M276.6 164.9L278.4 161.1Q285 160.3 291.7 161.1L293.5 164.9z" fill="#444"/><path d="M277.7 164.5L279.3 161.8H290.8L292.4 164.5z" fill="#2a2e34"/><rect x="273.9" y="164.1" width="22.2" height="5.3" rx="1.2" fill="#444"/><rect x="274.6" y="167.8" width="20.9" height="1.4" rx="0.4" fill="#303030"/><rect x="275" y="169" width="3.8" height="1.4" fill="#131416"/><rect x="291.2" y="169" width="3.8" height="1.4" fill="#131416"/><rect x="274.8" y="165.5" width="2.9" height="1.3" fill="#d23c2c"/><rect x="292.4" y="165.5" width="2.9" height="1.3" fill="#d23c2c"/><rect x="282.8" y="166.8" width="4.4" height="0.8" fill="#e6e6e6" opacity=".8"/><path d="M298.8 170.6L300.6 163.7Q307.2 162.3 313.9 163.7L315.6 170.6z" fill="#2a3350"/><path d="M299.9 169.9L301.4 164.9H313L314.5 169.9z" fill="#2a2e34"/><rect x="296.1" y="169.2" width="22.2" height="9.6" rx="2.1" fill="#2a3350"/><rect x="296.8" y="175.9" width="20.9" height="2.5" rx="0.6" fill="#1e2439"/><rect x="297.2" y="178.1" width="3.8" height="2.5" fill="#131416"/><rect x="313.4" y="178.1" width="3.8" height="2.5" fill="#131416"/><rect x="297" y="171.7" width="2.9" height="2.3" fill="#d23c2c"/><rect x="314.5" y="171.7" width="2.9" height="2.3" fill="#d23c2c"/><rect x="305" y="174.2" width="4.4" height="1.4" fill="#e6e6e6" opacity=".8"/><path d="M349 171.4L350.9 165Q357.8 163.6 364.7 165L366.6 171.4z" fill="#e4e4e4"/><path d="M350.2 170.7L351.8 166.1H363.8L365.4 170.7z" fill="#2a2e34"/><rect x="346.3" y="170" width="23.1" height="8.9" rx="2" fill="#e4e4e4"/><rect x="346.9" y="176.3" width="21.7" height="2.3" rx="0.6" fill="#a4a4a4"/><rect x="347.4" y="178.3" width="3.9" height="2.3" fill="#131416"/><rect x="364.3" y="178.3" width="3.9" height="2.3" fill="#131416"/><rect x="347.2" y="172.3" width="3" height="2.1" fill="#d23c2c"/><rect x="365.4" y="172.3" width="3" height="2.1" fill="#d23c2c"/><rect x="355.5" y="174.6" width="4.6" height="1.3" fill="#e6e6e6" opacity=".8"/><rect x="445.1" y="164" width="15.8" height="16.8" rx="2" fill="#7a2a2a"/><rect x="446.1" y="163.2" width="13.8" height="2.4" rx="1.2" fill="#9b5f5f"/><rect x="446.4" y="166" width="13.1" height="5.2" rx="0.8" fill="#2a2e34"/><rect x="445.1" y="177.2" width="15.8" height="2.8" rx="0.6" fill="#571e1e"/><rect x="445.6" y="180" width="2.8" height="2.8" fill="#131416"/><rect x="457.6" y="180" width="2.8" height="2.8" fill="#131416"/><rect x="445.4" y="172.8" width="2.1" height="2.6" fill="#d23c2c"/><rect x="458.4" y="172.8" width="2.1" height="2.6" fill="#d23c2c"/><rect x="451.3" y="175.6" width="3.3" height="1.6" fill="#e6e6e6" opacity=".8"/><path d="M75.5 175.8L77.2 169.4Q83.6 168.1 90 169.4L91.7 175.8z" fill="#8d99a8"/><path d="M76.6 175.1L78.1 170.5H89.1L90.6 175.1z" fill="#2a2e34"/><rect x="73" y="174.5" width="21.3" height="8.9" rx="2" fill="#8d99a8"/><rect x="73.6" y="180.7" width="20" height="2.3" rx="0.6" fill="#656e78"/><rect x="74" y="182.7" width="3.6" height="2.3" fill="#131416"/><rect x="89.6" y="182.7" width="3.6" height="2.3" fill="#131416"/><rect x="74" y="177.6" width="4" height="1.8" fill="#f3efdf" opacity=".9"/><rect x="89.1" y="177.6" width="4" height="1.8" fill="#f3efdf" opacity=".9"/><rect x="78.9" y="177.8" width="9.4" height="2.3" fill="#111" opacity=".45"/><rect x="81.5" y="181.1" width="4.3" height="1.3" fill="#e6e6e6" opacity=".7"/><rect x="396.6" y="164.3" width="29.8" height="20.5" rx="2.9" fill="#ececec"/><rect x="398.4" y="163.3" width="26.1" height="2.9" rx="1.8" fill="#f0f0f0"/><rect x="399.1" y="166.7" width="24.8" height="6.3" rx="1.2" fill="#2a2e34"/><rect x="396.6" y="180.4" width="29.8" height="3.4" rx="0.9" fill="#a9a9a9"/><rect x="397.5" y="183.8" width="5.3" height="3.4" fill="#131416"/><rect x="420.2" y="183.8" width="5.3" height="3.4" fill="#131416"/><rect x="397.2" y="175" width="4" height="3.2" fill="#d23c2c"/><rect x="421.7" y="175" width="4" height="3.2" fill="#d23c2c"/><rect x="408.4" y="178.4" width="6.2" height="2" fill="#e6e6e6" opacity=".8"/><rect x="26.9" y="165.5" width="27.3" height="19.4" rx="2.8" fill="#e9e9e9"/><rect x="28.7" y="164.6" width="23.9" height="2.8" rx="1.7" fill="#eeeeee"/><rect x="29.2" y="167.8" width="22.7" height="6" rx="1.1" fill="#2a2e34"/><rect x="26.9" y="180.7" width="27.3" height="3.2" rx="0.8" fill="#a7a7a7"/><rect x="27.8" y="184" width="4.8" height="3.2" fill="#131416"/><rect x="48.5" y="184" width="4.8" height="3.2" fill="#131416"/><rect x="27.8" y="176.8" width="5.4" height="2.5" fill="#f3efdf" opacity=".9"/><rect x="48" y="176.8" width="5.4" height="2.5" fill="#f3efdf" opacity=".9"/><rect x="34.3" y="177.1" width="12.5" height="3.2" fill="#111" opacity=".45"/><rect x="37.7" y="181.7" width="5.7" height="1.8" fill="#e6e6e6" opacity=".7"/><path d="M139.2 180.5L141.1 172.7Q148.2 171.1 155.2 172.7L157.1 180.5z" fill="#303236"/><path d="M140.4 179.7L142 174.1H154.3L155.9 179.7z" fill="#2a2e34"/><rect x="136.4" y="178.9" width="23.5" height="10.8" rx="2.4" fill="#303236"/><rect x="137.1" y="186.5" width="22.1" height="2.8" rx="0.7" fill="#222426"/><rect x="137.6" y="188.9" width="4" height="2.8" fill="#131416"/><rect x="154.7" y="188.9" width="4" height="2.8" fill="#131416"/><rect x="137.6" y="182.7" width="4.5" height="2.2" fill="#f3efdf" opacity=".9"/><rect x="154.3" y="182.7" width="4.5" height="2.2" fill="#f3efdf" opacity=".9"/><rect x="143" y="182.9" width="10.3" height="2.8" fill="#111" opacity=".45"/><rect x="145.8" y="186.9" width="4.7" height="1.6" fill="#e6e6e6" opacity=".7"/><path d="M243.9 180.9L246 172.7Q254 171.1 262 172.7L264.1 180.9z" fill="#1f2124"/><path d="M245.2 180L247.1 174.2H260.9L262.8 180z" fill="#2a2e34"/><rect x="240.7" y="179.2" width="26.6" height="11.3" rx="2.5" fill="#1f2124"/><rect x="241.5" y="187.1" width="25" height="2.9" rx="0.8" fill="#161719"/><rect x="242" y="189.6" width="4.5" height="2.9" fill="#131416"/><rect x="261.4" y="189.6" width="4.5" height="2.9" fill="#131416"/><rect x="241.7" y="182.1" width="3.5" height="2.7" fill="#d23c2c"/><rect x="262.8" y="182.1" width="3.5" height="2.7" fill="#d23c2c"/><rect x="251.3" y="185" width="5.3" height="1.7" fill="#e6e6e6" opacity=".8"/><path d="M358.8 189.7L360.7 182.8Q367.8 181.4 374.8 182.8L376.7 189.7z" fill="#a82f2f"/><path d="M360 189L361.7 184H373.9L375.5 189z" fill="#2a2e34"/><rect x="356" y="188.3" width="23.5" height="9.6" rx="2.1" fill="#a82f2f"/><rect x="356.7" y="195" width="22.1" height="2.5" rx="0.6" fill="#782121"/><rect x="357.2" y="197.1" width="4" height="2.5" fill="#131416"/><rect x="374.4" y="197.1" width="4" height="2.5" fill="#131416"/><rect x="357" y="190.8" width="3.1" height="2.3" fill="#d23c2c"/><rect x="375.5" y="190.8" width="3.1" height="2.3" fill="#d23c2c"/><rect x="365.4" y="193.2" width="4.7" height="1.4" fill="#e6e6e6" opacity=".8"/><rect x="419.9" y="173.9" width="25.3" height="10.6" rx="3.2" fill="#6a3030"/><rect x="421.6" y="176.6" width="22" height="6.1" rx="1" fill="#2a2e34"/><rect x="415.9" y="182.4" width="33.3" height="14.4" rx="1.6" fill="#6a3030"/><rect x="416.9" y="182.9" width="31.3" height="1.6" fill="#8f6363"/><rect x="416.6" y="194.1" width="31.9" height="3.7" rx="1" fill="#a9aaab"/><rect x="417.6" y="196.8" width="5.7" height="3.7" fill="#131416"/><rect x="441.9" y="196.8" width="5.7" height="3.7" fill="#131416"/><rect x="417.2" y="187.2" width="4.3" height="3.5" fill="#d23c2c"/><rect x="443.5" y="187.2" width="4.3" height="3.5" fill="#d23c2c"/><rect x="429.2" y="190.9" width="6.7" height="2.1" fill="#e6e6e6" opacity=".8"/><path d="M166.9 189.6L168.9 180.4Q176.3 178.5 183.8 180.4L185.8 189.6z" fill="#c1bcb5"/><path d="M168.1 188.6L169.9 182H182.8L184.5 188.6z" fill="#2a2e34"/><rect x="163.9" y="187.7" width="24.8" height="12.7" rx="2.8" fill="#c1bcb5"/><rect x="164.7" y="196.6" width="23.4" height="3.3" rx="0.8" fill="#8a8782"/><rect x="165.2" y="199.4" width="4.2" height="3.3" fill="#131416"/><rect x="183.3" y="199.4" width="4.2" height="3.3" fill="#131416"/><rect x="165.2" y="192.2" width="4.7" height="2.6" fill="#f3efdf" opacity=".9"/><rect x="182.8" y="192.2" width="4.7" height="2.6" fill="#f3efdf" opacity=".9"/><rect x="170.9" y="192.4" width="10.9" height="3.3" fill="#111" opacity=".45"/><rect x="173.9" y="197.1" width="5" height="1.9" fill="#e6e6e6" opacity=".7"/><path d="M313.9 200.2L316.4 190.6Q325.4 188.7 334.5 190.6L336.9 200.2z" fill="#212326"/><path d="M315.4 199.2L317.6 192.4H333.2L335.4 199.2z" fill="#2a2e34"/><rect x="310.3" y="198.2" width="30.2" height="13.2" rx="2.9" fill="#212326"/><rect x="311.2" y="207.5" width="28.4" height="3.4" rx="0.9" fill="#17191b"/><rect x="311.8" y="210.4" width="5.1" height="3.4" fill="#131416"/><rect x="333.9" y="210.4" width="5.1" height="3.4" fill="#131416"/><rect x="311.5" y="201.6" width="3.9" height="3.2" fill="#d23c2c"/><rect x="335.4" y="201.6" width="3.9" height="3.2" fill="#d23c2c"/><rect x="322.4" y="205" width="6" height="2" fill="#e6e6e6" opacity=".8"/><path d="M383.9 205.1L386.2 199.1Q394.8 197.8 403.5 199.1L405.8 205.1z" fill="#2d3442"/><path d="M385.3 204.5L387.3 200.2H402.3L404.4 204.5z" fill="#2a2e34"/><rect x="380.4" y="203.9" width="28.8" height="8.4" rx="1.9" fill="#2d3442"/><rect x="381.3" y="209.8" width="27.1" height="2.2" rx="0.6" fill="#20252f"/><rect x="381.9" y="211.7" width="4.9" height="2.2" fill="#131416"/><rect x="402.9" y="211.7" width="4.9" height="2.2" fill="#131416"/><rect x="381.6" y="206.1" width="3.7" height="2" fill="#d23c2c"/><rect x="404.4" y="206.1" width="3.7" height="2" fill="#d23c2c"/><rect x="392" y="208.2" width="5.8" height="1.2" fill="#e6e6e6" opacity=".8"/><rect x="92.7" y="188.9" width="31.1" height="24.2" rx="3.5" fill="#b7b8b6"/><rect x="94.6" y="187.8" width="27.2" height="3.5" rx="2.1" fill="#c9c9c8"/><rect x="95.3" y="191.8" width="25.9" height="7.5" rx="1.4" fill="#2a2e34"/><rect x="92.7" y="208" width="31.1" height="4" rx="1" fill="#838483"/><rect x="93.7" y="212" width="5.5" height="4" fill="#131416"/><rect x="117.3" y="212" width="5.5" height="4" fill="#131416"/><rect x="93.7" y="203.1" width="6.2" height="3.2" fill="#f3efdf" opacity=".9"/><rect x="116.7" y="203.1" width="6.2" height="3.2" fill="#f3efdf" opacity=".9"/><rect x="101.1" y="203.4" width="14.3" height="4" fill="#111" opacity=".45"/><rect x="105" y="209.1" width="6.5" height="2.3" fill="#e6e6e6" opacity=".7"/><path d="M255.9 212.1L258.6 201.1Q268.8 198.8 279.1 201.1L281.8 212.1z" fill="#ededed"/><path d="M257.6 211L260 203H277.7L280.1 211z" fill="#2a2e34"/><rect x="251.8" y="209.9" width="34.2" height="15.3" rx="3.4" fill="#ededed"/><rect x="252.8" y="220.6" width="32.1" height="4" rx="1" fill="#aaaaaa"/><rect x="253.5" y="224" width="5.8" height="4" fill="#131416"/><rect x="278.4" y="224" width="5.8" height="4" fill="#131416"/><rect x="253.1" y="213.8" width="4.4" height="3.7" fill="#d23c2c"/><rect x="280.1" y="213.8" width="4.4" height="3.7" fill="#d23c2c"/><rect x="265.4" y="217.8" width="6.8" height="2.3" fill="#e6e6e6" opacity=".8"/><rect x="412.4" y="218.6" width="44.7" height="35.4" rx="5.1" fill="#5a5d61"/><rect x="415.2" y="216.9" width="39.1" height="5.1" rx="3" fill="#838588"/><rect x="416.1" y="222.8" width="37.3" height="11" rx="2" fill="#2a2e34"/><rect x="412.4" y="246.4" width="44.7" height="5.9" rx="1.5" fill="#404245"/><rect x="413.8" y="252.3" width="7.9" height="5.9" fill="#131416"/><rect x="447.8" y="252.3" width="7.9" height="5.9" fill="#131416"/><rect x="413.3" y="237.1" width="6.1" height="5.5" fill="#d23c2c"/><rect x="450.1" y="237.1" width="6.1" height="5.5" fill="#d23c2c"/><rect x="430.1" y="243" width="9.3" height="3.4" fill="#e6e6e6" opacity=".8"/><path d="M348.5 248.1L351.8 234.2Q364.2 231.4 376.6 234.2L379.9 248.1z" fill="#25282e"/><path d="M350.6 246.7L353.5 236.7H375L377.8 246.7z" fill="#2a2e34"/><rect x="343.6" y="245.2" width="41.3" height="19.2" rx="4.3" fill="#25282e"/><rect x="344.8" y="258.7" width="38.8" height="5" rx="1.3" fill="#1a1c21"/><rect x="345.7" y="263" width="7" height="5" fill="#131416"/><rect x="375.8" y="263" width="7" height="5" fill="#131416"/><rect x="345.2" y="250.2" width="5.4" height="4.6" fill="#d23c2c"/><rect x="377.8" y="250.2" width="5.4" height="4.6" fill="#d23c2c"/><rect x="360.1" y="255.2" width="8.3" height="2.8" fill="#e6e6e6" opacity=".8"/><path d="M132.8 250.4L136.2 235.7Q149.3 232.7 162.3 235.7L165.8 250.4z" fill="#2b2e35"/><path d="M134.9 248.9L138 238.3H160.6L163.6 248.9z" fill="#2a2e34"/><rect x="127.5" y="247.4" width="43.5" height="20.4" rx="4.5" fill="#2b2e35"/><rect x="128.8" y="261.7" width="40.9" height="5.3" rx="1.4" fill="#1e2126"/><rect x="129.7" y="266.2" width="7.4" height="5.3" fill="#131416"/><rect x="161.4" y="266.2" width="7.4" height="5.3" fill="#131416"/><rect x="129.7" y="254.5" width="8.3" height="4.1" fill="#f3efdf" opacity=".9"/><rect x="160.6" y="254.5" width="8.3" height="4.1" fill="#f3efdf" opacity=".9"/><rect x="139.7" y="254.9" width="19.1" height="5.3" fill="#111" opacity=".45"/><rect x="144.9" y="262.5" width="8.7" height="3" fill="#e6e6e6" opacity=".7"/><rect x="31.8" y="241.2" width="49.4" height="42.1" rx="6" fill="#a3343a"/><rect x="34.9" y="239.2" width="43.2" height="6" rx="3.6" fill="#ba666b"/><rect x="36" y="246.3" width="41.2" height="13" rx="2.4" fill="#2a2e34"/><rect x="31.8" y="274.3" width="49.4" height="7" rx="1.8" fill="#752529"/><rect x="33.4" y="281.3" width="8.7" height="7" fill="#131416"/><rect x="71" y="281.3" width="8.7" height="7" fill="#131416"/><rect x="33.4" y="265.8" width="9.8" height="5.5" fill="#f3efdf" opacity=".9"/><rect x="69.9" y="265.8" width="9.8" height="5.5" fill="#f3efdf" opacity=".9"/><rect x="45.2" y="266.3" width="22.6" height="7" fill="#111" opacity=".45"/><rect x="51.4" y="276.3" width="10.3" height="4" fill="#e6e6e6" opacity=".7"/><rect x="454.6" y="266.3" width="44.7" height="38.4" rx="5.5" fill="#2a2c30"/><rect x="457.3" y="264.4" width="39.1" height="5.5" rx="3.3" fill="#5f6063"/><rect x="458.3" y="270.8" width="37.3" height="11.9" rx="2.2" fill="#2a2e34"/><rect x="454.6" y="296.4" width="44.7" height="6.4" rx="1.6" fill="#1e1f22"/><rect x="455.9" y="302.8" width="7.9" height="6.4" fill="#131416"/><rect x="490" y="302.8" width="7.9" height="6.4" fill="#131416"/><rect x="455.5" y="286.4" width="6.1" height="5.9" fill="#d23c2c"/><rect x="492.3" y="286.4" width="6.1" height="5.9" fill="#d23c2c"/><rect x="472.3" y="292.8" width="9.3" height="3.7" fill="#e6e6e6" opacity=".8"/><rect x="361.3" y="248.4" width="52.9" height="26.1" rx="7.8" fill="#ececec"/><rect x="364.8" y="255" width="46" height="15" rx="2.3" fill="#2a2e34"/><rect x="352.9" y="269.3" width="69.7" height="35.2" rx="3.9" fill="#ececec"/><rect x="355" y="270.6" width="65.5" height="3.9" fill="#f0f0f0"/><rect x="354.3" y="298" width="66.9" height="9.1" rx="2.3" fill="#a9aaab"/><rect x="356.4" y="304.5" width="11.8" height="9.1" fill="#131416"/><rect x="407.2" y="304.5" width="11.8" height="9.1" fill="#131416"/><rect x="355.7" y="281" width="9.1" height="8.5" fill="#d23c2c"/><rect x="410.7" y="281" width="9.1" height="8.5" fill="#d23c2c"/><rect x="380.8" y="290.2" width="13.9" height="5.2" fill="#e6e6e6" opacity=".8"/><rect x="260.9" y="257.5" width="56.2" height="52.2" rx="7" fill="#b9b3a8"/><rect x="264.4" y="255" width="49.2" height="7.5" rx="4.2" fill="#cac6bd"/><rect x="265.6" y="263.7" width="46.9" height="16.1" rx="2.8" fill="#2a2e34"/><rect x="260.9" y="298.5" width="56.2" height="8.7" rx="2.1" fill="#858078"/><rect x="262.7" y="307.2" width="10" height="8.7" fill="#131416"/><rect x="305.4" y="307.2" width="10" height="8.7" fill="#131416"/><rect x="262.1" y="284.8" width="7.6" height="8.1" fill="#d23c2c"/><rect x="308.3" y="284.8" width="7.6" height="8.1" fill="#d23c2c"/><rect x="283.2" y="293.5" width="11.7" height="5" fill="#e6e6e6" opacity=".8"/></g><g filter="url(#h2b)" opacity="1"><rect x="28.2" y="235.1" width="55" height="55.5" fill="none" stroke="#f24c31" stroke-width="2.800"/><rect x="125.3" y="231.6" width="46.6" height="42.1" fill="none" stroke="#f24c31" stroke-width="2.800"/><rect x="250.9" y="199.2" width="35.5" height="30.2" fill="none" stroke="#f24c31" stroke-width="2.800"/><rect x="257.5" y="252.4" width="62.1" height="66.5" fill="none" stroke="#f24c31" stroke-width="2.800"/><rect x="341.4" y="230.2" width="82.5" height="87" fill="none" stroke="#f24c31" stroke-width="2.800"/><rect x="409.3" y="214.7" width="57.7" height="44.8" fill="none" stroke="#f24c31" stroke-width="2.800"/><rect x="452.3" y="262.6" width="14.6" height="46.6" fill="none" stroke="#f24c31" stroke-width="2.800"/><rect x="407" y="227.1" width="15.5" height="33.3" fill="none" stroke="#f24c31" stroke-width="2.800"/><rect x="23" y="163" width="32" height="26.5" fill="none" stroke="#f24c31" stroke-width="2.800"/><rect x="71" y="168" width="20" height="20.7" fill="none" stroke="#f24c31" stroke-width="2.800"/><rect x="90" y="185" width="37.5" height="33.7" fill="none" stroke="#f24c31" stroke-width="2.800"/><rect x="134" y="172" width="26" height="22.5" fill="none" stroke="#f24c31" stroke-width="2.800"/><rect x="160.8" y="178.7" width="30" height="25" fill="none" stroke="#f24c31" stroke-width="2.800"/><rect x="238.5" y="172" width="30" height="22.4" fill="none" stroke="#f24c31" stroke-width="2.800"/><rect x="308.6" y="187.5" width="33.9" height="29.3" fill="none" stroke="#f24c31" stroke-width="2.800"/><rect x="354.8" y="179.8" width="24.7" height="22.2" fill="none" stroke="#f24c31" stroke-width="2.800"/><rect x="379.5" y="196.8" width="30.5" height="18.2" fill="none" stroke="#f24c31" stroke-width="2.800"/><rect x="296" y="162" width="26" height="18.6" fill="none" stroke="#f24c31" stroke-width="2.800"/><rect x="240" y="131" width="16" height="27" fill="none" stroke="#f24c31" stroke-width="2.800"/><rect x="450" y="200" width="15" height="42" fill="none" stroke="#f24c31" stroke-width="2.800"/></g><rect x="202" y="99.8" width="66.6" height="14.2" fill="#f24c31"/><text x="203.5" y="111.2" font-family="Liberation Sans,Arial,sans-serif" font-size="14.2" fill="#fff" fill-opacity=".9" textLength="62.6" lengthAdjust="spacingAndGlyphs">car 0.67</text><rect x="142.5" y="109.5" width="30.5" height="15" fill="#f24c31"/><text x="144" y="121.7" font-family="Liberation Sans,Arial,sans-serif" font-size="15" fill="#fff" fill-opacity=".9" textLength="26.5" lengthAdjust="spacingAndGlyphs">car</text><rect x="170" y="110" width="68" height="14.5" fill="#f24c31"/><text x="171.5" y="121.7" font-family="Liberation Sans,Arial,sans-serif" font-size="14.5" fill="#fff" fill-opacity=".9" textLength="64" lengthAdjust="spacingAndGlyphs">car 0.78</text><rect x="230" y="112.8" width="27.7" height="17.7" fill="#f24c31"/><text x="231.5" y="127.7" font-family="Liberation Sans,Arial,sans-serif" font-size="17.7" fill="#fff" fill-opacity=".9" textLength="23.7" lengthAdjust="spacingAndGlyphs">8.67</text><rect x="155" y="123.7" width="66.7" height="12.8" fill="#f24c31"/><text x="156.5" y="133.7" font-family="Liberation Sans,Arial,sans-serif" font-size="12.8" fill="#fff" fill-opacity=".9" textLength="62.7" lengthAdjust="spacingAndGlyphs">car 0.84</text><rect x="138" y="135" width="69.5" height="14.5" fill="#f24c31"/><text x="139.5" y="146.7" font-family="Liberation Sans,Arial,sans-serif" font-size="14.5" fill="#fff" fill-opacity=".9" textLength="65.5" lengthAdjust="spacingAndGlyphs">car 0.78</text><rect x="24" y="148" width="67" height="15" fill="#f24c31"/><text x="25.5" y="160.2" font-family="Liberation Sans,Arial,sans-serif" font-size="15" fill="#fff" fill-opacity=".9" textLength="63" lengthAdjust="spacingAndGlyphs">car 0.64</text><rect x="71" y="153.7" width="67" height="14.3" fill="#f24c31"/><text x="72.5" y="165.2" font-family="Liberation Sans,Arial,sans-serif" font-size="14.3" fill="#fff" fill-opacity=".9" textLength="63" lengthAdjust="spacingAndGlyphs">car 0.82</text><rect x="135" y="158" width="66.7" height="14" fill="#f24c31"/><text x="136.5" y="169.2" font-family="Liberation Sans,Arial,sans-serif" font-size="14" fill="#fff" fill-opacity=".9" textLength="62.7" lengthAdjust="spacingAndGlyphs">car 0.79</text><rect x="160" y="165" width="68" height="13.7" fill="#f24c31"/><text x="161.5" y="175.9" font-family="Liberation Sans,Arial,sans-serif" font-size="13.7" fill="#fff" fill-opacity=".9" textLength="64" lengthAdjust="spacingAndGlyphs">car 0.67</text><rect x="90" y="172" width="67.5" height="13" fill="#f24c31"/><text x="91.5" y="182.2" font-family="Liberation Sans,Arial,sans-serif" font-size="13" fill="#fff" fill-opacity=".9" textLength="63.5" lengthAdjust="spacingAndGlyphs">car 0.87</text><rect x="28" y="221" width="66.5" height="14" fill="#f24c31"/><text x="29.5" y="232.2" font-family="Liberation Sans,Arial,sans-serif" font-size="14" fill="#fff" fill-opacity=".9" textLength="62.5" lengthAdjust="spacingAndGlyphs">car 0.76</text><rect x="125.5" y="217" width="67" height="14.5" fill="#f24c31"/><text x="127" y="228.7" font-family="Liberation Sans,Arial,sans-serif" font-size="14.5" fill="#fff" fill-opacity=".9" textLength="63" lengthAdjust="spacingAndGlyphs">car 0.77</text><rect x="237.7" y="127" width="66.3" height="15" fill="#f24c31"/><text x="239.2" y="139.2" font-family="Liberation Sans,Arial,sans-serif" font-size="15" fill="#fff" fill-opacity=".9" textLength="62.3" lengthAdjust="spacingAndGlyphs">car 0.72</text><rect x="284" y="125" width="57" height="15" fill="#f24c31"/><text x="285.5" y="137.2" font-family="Liberation Sans,Arial,sans-serif" font-size="15" fill="#fff" fill-opacity=".9" textLength="53" lengthAdjust="spacingAndGlyphs">0.53</text><rect x="279" y="133.6" width="68" height="14.6" fill="#f24c31"/><text x="280.5" y="145.4" font-family="Liberation Sans,Arial,sans-serif" font-size="14.6" fill="#fff" fill-opacity=".9" textLength="64" lengthAdjust="spacingAndGlyphs">car 0.84</text><rect x="347" y="135" width="48.6" height="14" fill="#f24c31"/><text x="348.5" y="146.2" font-family="Liberation Sans,Arial,sans-serif" font-size="14" fill="#fff" fill-opacity=".9" textLength="44.6" lengthAdjust="spacingAndGlyphs">r 0.40</text><rect x="250" y="146.7" width="52" height="10.3" fill="#f24c31"/><text x="251.5" y="154.2" font-family="Liberation Sans,Arial,sans-serif" font-size="10.3" fill="#fff" fill-opacity=".9" textLength="48" lengthAdjust="spacingAndGlyphs">car 0.</text><rect x="297.8" y="148.2" width="64.7" height="13.8" fill="#f24c31"/><text x="299.3" y="159.2" font-family="Liberation Sans,Arial,sans-serif" font-size="13.8" fill="#fff" fill-opacity=".9" textLength="60.7" lengthAdjust="spacingAndGlyphs">car 0.82</text><rect x="238.5" y="158" width="65.5" height="14" fill="#f24c31"/><text x="240" y="169.2" font-family="Liberation Sans,Arial,sans-serif" font-size="14" fill="#fff" fill-opacity=".9" textLength="61.5" lengthAdjust="spacingAndGlyphs">car 0.75</text><rect x="354.8" y="166" width="67" height="13.8" fill="#f24c31"/><text x="356.3" y="177" font-family="Liberation Sans,Arial,sans-serif" font-size="13.8" fill="#fff" fill-opacity=".9" textLength="63" lengthAdjust="spacingAndGlyphs">car 0.86</text><rect x="308.6" y="173.6" width="67" height="13.9" fill="#f24c31"/><text x="310.1" y="184.7" font-family="Liberation Sans,Arial,sans-serif" font-size="13.9" fill="#fff" fill-opacity=".9" textLength="63" lengthAdjust="spacingAndGlyphs">car 0.87</text><rect x="378.7" y="183.7" width="67.8" height="13.1" fill="#f24c31"/><text x="380.2" y="194" font-family="Liberation Sans,Arial,sans-serif" font-size="13.1" fill="#fff" fill-opacity=".9" textLength="63.8" lengthAdjust="spacingAndGlyphs">car 0.85</text><rect x="250" y="185" width="65.5" height="13.3" fill="#f24c31"/><text x="251.5" y="195.5" font-family="Liberation Sans,Arial,sans-serif" font-size="13.3" fill="#fff" fill-opacity=".9" textLength="61.5" lengthAdjust="spacingAndGlyphs">car 0.88</text><rect x="450" y="187.5" width="67" height="13.1" fill="#f24c31"/><text x="451.5" y="197.8" font-family="Liberation Sans,Arial,sans-serif" font-size="13.1" fill="#fff" fill-opacity=".9" textLength="63" lengthAdjust="spacingAndGlyphs">car 0.81</text><rect x="408.7" y="201.4" width="67.3" height="13.1" fill="#f24c31"/><text x="410.2" y="211.7" font-family="Liberation Sans,Arial,sans-serif" font-size="13.1" fill="#fff" fill-opacity=".9" textLength="63.3" lengthAdjust="spacingAndGlyphs">car 0.84</text><rect x="342.5" y="215" width="67.5" height="14" fill="#f24c31"/><text x="344" y="226.2" font-family="Liberation Sans,Arial,sans-serif" font-size="14" fill="#fff" fill-opacity=".9" textLength="63.5" lengthAdjust="spacingAndGlyphs">car 0.78</text><rect x="257.5" y="238" width="66.5" height="14.5" fill="#f24c31"/><text x="259" y="249.7" font-family="Liberation Sans,Arial,sans-serif" font-size="14.5" fill="#fff" fill-opacity=".9" textLength="62.5" lengthAdjust="spacingAndGlyphs">car 0.82</text><rect x="452" y="249" width="67" height="14" fill="#f24c31"/><text x="453.5" y="260.2" font-family="Liberation Sans,Arial,sans-serif" font-size="14" fill="#fff" fill-opacity=".9" textLength="63" lengthAdjust="spacingAndGlyphs">car 0.80</text></svg></div>
<div class="abs mono cap" style="left:461px">Uploaded Image</div><div class="abs mono cap" style="left:940px">Detected Image</div>
<div id="exp" class="abs"></div><div id="exptxt" class="abs mono">Detection Persons 30</div><svg class="abs" style="left:1366px;top:724.500px" width="12" height="9" viewBox="0 0 12 9"><path d="M1.500 1.800l4.500 4.500 4.500-4.500" fill="none" stroke="#f2f2f2" stroke-width="2"/></svg>
<div class="abs ctl" style="left:1423px;width:35.500px"></div><div class="abs ctl" style="left:1459.500px;width:36px;border-radius:0 0 9px 0"></div><svg class="abs" style="left:1432px;top:761px" width="18" height="17" viewBox="0 0 18 17" fill="#b4b4b4"><rect x="1" y="0.500" width="5.800" height="16"/><rect x="11" y="0.500" width="5.800" height="16"/></svg><svg class="abs" style="left:1465px;top:760px" width="23" height="18" viewBox="0 0 23 18"><rect x="1.200" y="1.200" width="20.600" height="15.600" fill="#3a3b3c" stroke="#b4b4b4" stroke-width="1.200"/><circle cx="11.500" cy="7.200" r="2.600" fill="#b4b4b4"/><path d="M5 16.800c.5-3.500 3-5 6.500-5s6 1.500 6.500 5z" fill="#b4b4b4"/></svg>
<div id="dlg" class="abs"><div id="dtop"></div><div id="dbar"></div>
<svg style="left:8px;top:8px" width="18" height="18" viewBox="0 0 18 18"><defs><linearGradient id="eg1" x1="0" y1="0" x2="1" y2="1"><stop offset="0" stop-color="#35c1f1"/><stop offset=".5" stop-color="#2a8fd8"/><stop offset="1" stop-color="#0c59a4"/></linearGradient><linearGradient id="eg2" x1="0" y1="0" x2="1" y2="0"><stop offset="0" stop-color="#1b9de2"/><stop offset="1" stop-color="#5bd35a"/></linearGradient></defs>
<circle cx="9" cy="9" r="8.700" fill="url(#eg1)"/><path d="M.4 8.200C1 3.500 4.700.3 9.300.3c4.500 0 8.300 3.200 8.300 7.300 0 2.600-2 4.400-4.400 4.400-1.800 0-2.700-.8-2.400-1.600.6-1.300.3-3.300-2.300-3.800C5.200 6 1.500 7.200.4 8.200z" fill="url(#eg2)"/><path d="M6.500 10.500c0 3.500 2.500 6 6 6.500-4 1.800-8.500-.5-9-5 0-2.500 2-4.200 3.500-4.200-.3.800-.5 1.700-.5 2.700z" fill="#0c4f96"/></svg><div class="t" style="left:32px;top:9px">Open</div><svg style="left:709px;top:10px" width="14" height="14" viewBox="0 0 14 14"><path d="M1.500 1.500l11 11M12.500 1.500l-11 11" stroke="#222" stroke-width="1.300" fill="none"/></svg>
<svg style="left:12px;top:52px" width="130" height="24" viewBox="0 0 130 24" fill="none" stroke="#9a9a9a" stroke-width="1.300" stroke-linecap="round" stroke-linejoin="round"><path d="M17 11.500H4.500M10 5.500l-6 6 6 6"/><path d="M43 11.500h12.500M50 5.500l6 6-6 6"/><path d="M79 10l3 3 3-3" stroke-width="1.100"/><path d="M114 18.500V5M108 11l6-6.500 6 6.500" stroke="#555"/></svg><div class="box" style="left:150px;top:45px;width:334.500px;height:36.500px"></div><svg style="left:159px;top:54px" width="20" height="16" viewBox="0 0 20 16"><path d="M1 2.500a1.500 1.500 0 0 1 1.500-1.500h4.500l2 2h8.500a1.500 1.500 0 0 1 1.500 1.500V13a1.500 1.500 0 0 1-1.500 1.500h-15A1.500 1.500 0 0 1 1 13z" fill="#e9a820"/><path d="M1 5.500h18V13a1.500 1.500 0 0 1-1.500 1.500h-15A1.500 1.500 0 0 1 1 13z" fill="#ffd65c"/></svg><div class="t sep" style="left:183px;top:54px;font-size:13px">«</div><div class="t crumb" style="left:200px">Vehicle</div><svg style="left:251px;top:57px" width="8" height="12" viewBox="0 0 8 12"><path d="M1.500 1.500l4.500 4.500-4.500 4.500" fill="none" stroke="#444" stroke-width="1.300"/></svg><div class="t crumb" style="left:267px">utils</div><svg style="left:300px;top:57px" width="8" height="12" viewBox="0 0 8 12"><path d="M1.500 1.500l4.500 4.500-4.500 4.500" fill="none" stroke="#444" stroke-width="1.300"/></svg><div class="t crumb" style="left:316px">images</div><svg style="left:416px;top:61px" width="10" height="7" viewBox="0 0 10 7"><path d="M1 1.200l4 4 4-4" fill="none" stroke="#555" stroke-width="1.200"/></svg><svg style="left:454px;top:56px" width="15" height="15" viewBox="0 0 15 15" fill="none" stroke="#666" stroke-width="1.200"><path d="M12.800 7.500a5.300 5.300 0 1 1-1.600-3.800"/><path d="M12.800 1.800v3h-3" stroke-linejoin="round"/></svg><div class="box" style="left:497px;top:45px;width:222px;height:36.500px"></div><svg style="left:513px;top:56px" width="15" height="15" viewBox="0 0 15 15" fill="none" stroke="#777" stroke-width="1.200"><circle cx="9" cy="6" r="4.300"/><path d="M5.800 9.200L1.500 13.500"/></svg><div class="t" style="left:542px;top:55px;color:#6e6e6e;letter-spacing:-.65px">Search images</div>
<div class="t" style="left:20px;top:102px;color:#243a5e">Organize</div><svg style="left:76px;top:108px" width="10" height="6" viewBox="0 0 10 6"><path d="M0 0h10l-5 5.500z" fill="#243a5e"/></svg><div class="t" style="left:119px;top:102px;color:#243a5e">New folder</div><svg style="left:601px;top:104px" width="14" height="13" viewBox="0 0 14 13"><rect x=".7" y=".7" width="12.600" height="9" fill="#fff" stroke="#333" stroke-width="1.300"/><path d="M0 12h14" stroke="#333" stroke-width="1.600"/></svg><svg style="left:627px;top:108px" width="9" height="5" viewBox="0 0 9 5"><path d="M0 0h9l-4.500 5z" fill="#333"/></svg><svg style="left:658px;top:104px" width="18" height="14" viewBox="0 0 18 14"><rect x=".6" y=".6" width="16.800" height="12.800" fill="#fff" stroke="#666" stroke-width="1.200"/><rect x="9.500" y="2" width="7" height="10" fill="#3b8ee0"/></svg><div style="left:698px;top:102px;width:17px;height:17px;border-radius:9px;background:#0f6fd6;color:#fff;font-weight:700;font-size:12.500px;line-height:17px;text-align:center">?</div>
<div id="dnav"><svg style="left:18px;top:15.0px" width="8" height="12" viewBox="0 0 8 12"><path d="M1.500 1.500l4.500 4.500-4.500 4.500" fill="none" stroke="#777" stroke-width="1.300"/></svg><svg style="left:40px;top:12.0px" width="18" height="18" viewBox="0 0 18 18"><rect x="2.500" y="1" width="13" height="16" rx="1.500" fill="#8fb0cf"/><rect x="2.500" y="1" width="13" height="14.500" rx="1.500" fill="#b9d0e6"/><path d="M5 5h4M5 7.500h4M5 10h8" stroke="#fff" stroke-width="1.300"/><rect x="10" y="4" width="3" height="3" fill="#fff"/></svg><div class="navt" style="top:12.5px">Documents</div><svg style="left:18px;top:50.15px" width="8" height="12" viewBox="0 0 8 12"><path d="M1.500 1.500l4.500 4.500-4.500 4.500" fill="none" stroke="#777" stroke-width="1.300"/></svg><svg style="left:40px;top:47.15px" width="18" height="18" viewBox="0 0 18 18"><path d="M9 1.500v10M4.500 7.500L9 12l4.500-4.500" fill="none" stroke="#12a37f" stroke-width="1.700"/><path d="M2.500 16h13" stroke="#12a37f" stroke-width="1.700"/></svg><div class="navt" style="top:47.6px">Downloads</div><svg style="left:18px;top:85.3px" width="8" height="12" viewBox="0 0 8 12"><path d="M1.500 1.500l4.500 4.500-4.500 4.500" fill="none" stroke="#777" stroke-width="1.300"/></svg><svg style="left:40px;top:82.3px" width="18" height="18" viewBox="0 0 18 18"><defs><linearGradient id="mg" x1="0" y1="0" x2="1" y2="1"><stop offset="0" stop-color="#f0a24a"/><stop offset="1" stop-color="#d9567f"/></linearGradient></defs><circle cx="9" cy="9" r="8.500" fill="url(#mg)"/><path d="M8 4.500l4-1v2l-2.800.7v5.300a2 2 0 1 1-1.200-1.800z" fill="#fff"/></svg><div class="navt" style="top:82.8px">Music</div><svg style="left:18px;top:120.44999999999999px" width="8" height="12" viewBox="0 0 8 12"><path d="M1.500 1.500l4.500 4.500-4.500 4.500" fill="none" stroke="#777" stroke-width="1.300"/></svg><svg style="left:40px;top:117.44999999999999px" width="18" height="18" viewBox="0 0 18 18"><rect x="1.500" y="1.500" width="15" height="15" rx="2" fill="#2f8be6"/><path d="M1.500 14.500l5-5.500 4 4.500 2-2 4 4v-1a2 2 0 0 1-2 2h-11a2 2 0 0 1-2-2z" fill="#fff"/><circle cx="12" cy="5.500" r="1.500" fill="#fff"/></svg><div class="navt" style="top:117.9px">Pictures</div><svg style="left:18px;top:155.6px" width="8" height="12" viewBox="0 0 8 12"><path d="M1.500 1.500l4.500 4.500-4.500 4.500" fill="none" stroke="#777" stroke-width="1.300"/></svg><svg style="left:40px;top:152.6px" width="18" height="18" viewBox="0 0 18 18"><rect x="1.500" y="1.500" width="15" height="15" rx="2" fill="#9a4fd6"/><path d="M7 5.500l5 3.500-5 3.500z" fill="#fff"/><path d="M3.200 3v12M14.800 3v12" stroke="#d9b8f2" stroke-width="1.400" stroke-dasharray="1.600 1.600"/></svg><div class="navt" style="top:153.1px">Videos</div><svg style="left:18px;top:190.75px" width="8" height="12" viewBox="0 0 8 12"><path d="M1.500 1.500l4.500 4.500-4.500 4.500" fill="none" stroke="#777" stroke-width="1.300"/></svg><svg style="left:40px;top:187.75px" width="18" height="18" viewBox="0 0 18 18"><rect x="1" y="1" width="3.200" height="3.200" fill="#1e90e8"/><rect x="5" y="1" width="3.200" height="3.200" fill="#1e90e8"/><rect x="1" y="5" width="3.200" height="3.200" fill="#1e90e8"/><rect x="5" y="5" width="3.200" height="3.200" fill="#1e90e8"/><rect x="2" y="10.500" width="15" height="4" rx="1" fill="#444"/><rect x="2" y="10.500" width="15" height="1.500" fill="#9a9a9a"/></svg><div class="navt" style="top:188.2px">Local Disk (C:)</div><svg style="left:18px;top:225.89999999999998px" width="8" height="12" viewBox="0 0 8 12"><path d="M1.500 1.500l4.500 4.500-4.500 4.500" fill="none" stroke="#777" stroke-width="1.300"/></svg><svg style="left:40px;top:222.89999999999998px" width="18" height="18" viewBox="0 0 18 18"><rect x="1.500" y="8" width="15" height="3.600" rx="1" fill="#333"/><rect x="2" y="7.500" width="14" height="1.300" fill="#a8a8a8"/></svg><div class="navt" style="top:223.4px">New Volume (D</div><div style="left:0;top:251.0px;width:152px;height:32px;background:#e4e4e4"></div><svg style="left:18px;top:261.04999999999995px" width="8" height="12" viewBox="0 0 8 12"><path d="M1.500 1.500l4.500 4.500-4.500 4.500" fill="none" stroke="#777" stroke-width="1.300"/></svg><svg style="left:40px;top:258.04999999999995px" width="18" height="18" viewBox="0 0 18 18"><rect x="1.500" y="8" width="15" height="3.600" rx="1" fill="#333"/><rect x="2" y="7.500" width="14" height="1.300" fill="#a8a8a8"/></svg><div class="navt" style="top:258.5px">New Volume (E:</div><svg style="left:29px;top:300.2px" width="18" height="18" viewBox="0 0 18 18"><rect x="3" y="2" width="12" height="9" fill="#2f8be6"/><rect x="1" y="13" width="16" height="2" fill="#555"/></svg><div class="navt" style="left:55px;top:300.7px">Network</div></div><div style="left:161.500px;top:238px;width:2px;height:165px;background:#8c8c8c;border-radius:1px"></div><div id="dfiles"><div class="thumb" style="left:26px;top:55px;width:100px;height:57px"><svg width="100" height="57" viewBox="0 0 100 57" preserveAspectRatio="none"><defs><filter id="s3b" x="-3%" y="-3%" width="106%" height="106%"><feGaussianBlur stdDeviation=".55"/></filter><linearGradient id="s3r" x1="0" y1="0" x2="0" y2="1"><stop offset="0" stop-color="#7c7e80"/><stop offset="1" stop-color="#8c8d8f"/></linearGradient></defs><g filter="url(#s3b)"><rect x="-3" y="-3" width="106" height="63" fill="url(#s3r)"/><path d="M60 8h43v38C92 36 84 28 76 22 70 18 64 14 60 8z" fill="#6f7270"/><path d="M48 -3h18l-2 14h-12z" fill="#c2c8cc"/><path d="M52 6h10l2 10h-14z" fill="#a9adb0"/><path d="M-3 -3h53c-2 5-6 8-14 11-8 5-14 10-20 16-6 4-12 6-19 9z" fill="#44544a"/><path d="M2 3c10-4 24-4 36-2-6 5-16 8-24 11-6 2-10 0-12-3z" fill="#596b56"/><path d="M-3 30c6-2 12-6 18-10l4 4c-6 6-14 12-22 16z" fill="#5b615c"/><path d="M103 -3H66c2 6 8 8 16 9 8 2 14 4 21 8z" fill="#4c5e48"/><path d="M-3 40L14 30 36 14l3 2L22 34-3 62z" fill="#8d8f8c"/><path d="M-3 50L20 32l2 2L-3 60z" fill="#a6a7a4"/><path d="M60 11c6 6 10 9 15 12 6 4 12 10 18 16l10 8v-7l-9-8c-5-6-11-11-17-14-5-4-9-7-13-10z" fill="#b3a263"/><path d="M60 11c6 6 10 9 15 12 6 4 12 10 18 16l10 8v-3l-9-8c-6-6-12-11-18-15-5-4-9-7-14-12z" fill="#c9b872"/><path d="M18 30l6 3 5-6" fill="none" stroke="#c6a83c" stroke-width="1.300"/><path d="M3 57l6-5M12 49l4-4M19 42l3-3" stroke="#c9aa36" stroke-width="1.500"/><path d="M51.2 16.7L50.4 18.6" stroke="#efefef" stroke-width="0.8"/><path d="M48.4 23.1L47.4 25.1" stroke="#efefef" stroke-width="0.9"/><path d="M45.4 29.7L44.4 31.9" stroke="#efefef" stroke-width="1"/><path d="M42.3 36.4L41.2 38.9" stroke="#efefef" stroke-width="1.2"/><path d="M39.1 43.4L37.9 46.1" stroke="#efefef" stroke-width="1.3"/><path d="M35.9 50.6L34.6 53.6" stroke="#efefef" stroke-width="1.4"/><path d="M32.5 58.1L31.1 61.2" stroke="#efefef" stroke-width="1.5"/><path d="M57.7 16.7L57.8 18.6" stroke="#efefef" stroke-width="0.8"/><path d="M58.1 23.1L58.2 25.1" stroke="#efefef" stroke-width="0.9"/><path d="M58.5 29.7L58.6 31.9" stroke="#efefef" stroke-width="1"/><path d="M58.8 36.4L59 38.9" stroke="#efefef" stroke-width="1.2"/><path d="M59.2 43.4L59.4 46.1" stroke="#efefef" stroke-width="1.3"/><path d="M59.6 50.6L59.8 53.6" stroke="#efefef" stroke-width="1.4"/><path d="M60.1 58.1L60.2 61.2" stroke="#efefef" stroke-width="1.5"/><path d="M64 16.7L65 18.6" stroke="#efefef" stroke-width="0.8"/><path d="M67.4 23.1L68.6 25.1" stroke="#efefef" stroke-width="0.9"/><path d="M71 29.7L72.3 31.9" stroke="#efefef" stroke-width="1"/><path d="M74.7 36.4L76.1 38.9" stroke="#efefef" stroke-width="1.2"/><path d="M78.6 43.4L80.1 46.1" stroke="#efefef" stroke-width="1.3"/><path d="M82.5 50.6L84.1 53.6" stroke="#efefef" stroke-width="1.4"/><path d="M86.6 58.1L88.3 61.2" stroke="#efefef" stroke-width="1.5"/><rect x="39" y="16" width="5" height="5" rx="1" fill="#eeeeee"/><rect x="47" y="17" width="5" height="4" rx="1" fill="#e4e4e4"/><rect x="44" y="10" width="4" height="3" rx="1" fill="#ddd"/><rect x="57" y="8" width="3" height="3" rx="1" fill="#eee"/><rect x="70" y="13" width="5" height="4" rx="1" fill="#33363a"/><rect x="76" y="16" width="5" height="4" rx="1" fill="#e6e6e6"/><rect x="84" y="14" width="4" height="3" rx="1" fill="#ddd"/><rect x="90" y="16" width="6" height="6" rx="1" fill="#3a3d40"/><rect x="95" y="20" width="7" height="6" rx="1" fill="#c23a34"/><rect x="3.500" y="31" width="2" height="7" fill="#3a3f3a"/><rect x="8.500" y="31" width="2.200" height="7" fill="#7a2b2b"/><rect x="14" y="30" width="2.400" height="8" fill="#1f2024"/><rect x="9" y="14" width="3.400" height="5" fill="#4a78c0"/><rect x="10.300" y="19" width=".8" height="12" fill="#9aa"/></g></svg></div><div class="lab" style="left:12px;top:116px">1</div><div class="thumb" style="left:157px;top:55px;width:100px;height:57px"><svg width="100" height="57" viewBox="0 0 100 57" preserveAspectRatio="none"><defs><filter id="s4b" x="-3%" y="-3%" width="106%" height="106%"><feGaussianBlur stdDeviation=".55"/></filter><linearGradient id="s4r" x1="0" y1="0" x2="0" y2="1"><stop offset="0" stop-color="#7c7e80"/><stop offset="1" stop-color="#8c8d8f"/></linearGradient></defs><g filter="url(#s4b)"><rect x="-3" y="-3" width="106" height="63" fill="url(#s4r)"/><path d="M60 8h43v38C92 36 84 28 76 22 70 18 64 14 60 8z" fill="#6f7270"/><path d="M48 -3h18l-2 14h-12z" fill="#c2c8cc"/><path d="M52 6h10l2 10h-14z" fill="#a9adb0"/><path d="M-3 -3h53c-2 5-6 8-14 11-8 5-14 10-20 16-6 4-12 6-19 9z" fill="#44544a"/><path d="M2 3c10-4 24-4 36-2-6 5-16 8-24 11-6 2-10 0-12-3z" fill="#596b56"/><path d="M-3 30c6-2 12-6 18-10l4 4c-6 6-14 12-22 16z" fill="#5b615c"/><path d="M103 -3H66c2 6 8 8 16 9 8 2 14 4 21 8z" fill="#4c5e48"/><path d="M-3 40L14 30 36 14l3 2L22 34-3 62z" fill="#8d8f8c"/><path d="M-3 50L20 32l2 2L-3 60z" fill="#a6a7a4"/><path d="M60 11c6 6 10 9 15 12 6 4 12 10 18 16l10 8v-7l-9-8c-5-6-11-11-17-14-5-4-9-7-13-10z" fill="#b3a263"/><path d="M60 11c6 6 10 9 15 12 6 4 12 10 18 16l10 8v-3l-9-8c-6-6-12-11-18-15-5-4-9-7-14-12z" fill="#c9b872"/><path d="M18 30l6 3 5-6" fill="none" stroke="#c6a83c" stroke-width="1.300"/><path d="M3 57l6-5M12 49l4-4M19 42l3-3" stroke="#c9aa36" stroke-width="1.500"/><path d="M51.2 16.7L50.4 18.6" stroke="#efefef" stroke-width="0.8"/><path d="M48.4 23.1L47.4 25.1" stroke="#efefef" stroke-width="0.9"/><path d="M45.4 29.7L44.4 31.9" stroke="#efefef" stroke-width="1"/><path d="M42.3 36.4L41.2 38.9" stroke="#efefef" stroke-width="1.2"/><path d="M39.1 43.4L37.9 46.1" stroke="#efefef" stroke-width="1.3"/><path d="M35.9 50.6L34.6 53.6" stroke="#efefef" stroke-width="1.4"/><path d="M32.5 58.1L31.1 61.2" stroke="#efefef" stroke-width="1.5"/><path d="M57.7 16.7L57.8 18.6" stroke="#efefef" stroke-width="0.8"/><path d="M58.1 23.1L58.2 25.1" stroke="#efefef" stroke-width="0.9"/><path d="M58.5 29.7L58.6 31.9" stroke="#efefef" stroke-width="1"/><path d="M58.8 36.4L59 38.9" stroke="#efefef" stroke-width="1.2"/><path d="M59.2 43.4L59.4 46.1" stroke="#efefef" stroke-width="1.3"/><path d="M59.6 50.6L59.8 53.6" stroke="#efefef" stroke-width="1.4"/><path d="M60.1 58.1L60.2 61.2" stroke="#efefef" stroke-width="1.5"/><path d="M64 16.7L65 18.6" stroke="#efefef" stroke-width="0.8"/><path d="M67.4 23.1L68.6 25.1" stroke="#efefef" stroke-width="0.9"/><path d="M71 29.7L72.3 31.9" stroke="#efefef" stroke-width="1"/><path d="M74.7 36.4L76.1 38.9" stroke="#efefef" stroke-width="1.2"/><path d="M78.6 43.4L80.1 46.1" stroke="#efefef" stroke-width="1.3"/><path d="M82.5 50.6L84.1 53.6" stroke="#efefef" stroke-width="1.4"/><path d="M86.6 58.1L88.3 61.2" stroke="#efefef" stroke-width="1.5"/><rect x="32" y="25" width="7" height="9" rx="1.500" fill="#f0f0f0"/><rect x="31" y="33" width="13" height="9" rx="2" fill="#d8d8d8"/><rect x="33" y="34" width="9" height="3" fill="#6a6f78"/><rect x="52" y="13" width="4" height="4" rx="1" fill="#e8e8e8"/><rect x="75" y="17" width="5" height="4" rx="1" fill="#ececec"/><rect x="66" y="12" width="4" height="3" rx="1" fill="#3a3a3a"/><rect x="90" y="16" width="6" height="6" rx="1" fill="#7a2f2f"/><rect x="96" y="22" width="6" height="7" rx="1" fill="#d9d9d9"/><rect x="84" y="13" width="5" height="4" rx="1" fill="#a33"/><rect x="3.500" y="31" width="2" height="7" fill="#3a3f3a"/><rect x="8.500" y="31" width="2.200" height="7" fill="#7a2b2b"/><rect x="14" y="30" width="2.400" height="8" fill="#1f2024"/><rect x="9" y="14" width="3.400" height="5" fill="#4a78c0"/><rect x="10.300" y="19" width=".8" height="12" fill="#9aa"/></g></svg></div><div class="lab" style="left:143px;top:116px">2</div><div class="thumb" style="left:287px;top:49px;width:100px;height:63px"><svg width="100" height="63" viewBox="0 0 100 63" preserveAspectRatio="none"><defs><filter id="d5b" x="-3%" y="-3%" width="106%" height="106%"><feGaussianBlur stdDeviation="0.55"/></filter></defs><g filter="url(#d5b)"><rect x="-3" y="-3" width="106" height="69" fill="#52618e"/><rect x="-3" y="-3" width="106" height="24" fill="#2c2b33"/><path d="M60 -3h43v34H74z" fill="#3a456e"/><rect x="78" y="4" width="14" height="20" fill="#55607a"/><path d="M-3 40h106v26H-3z" fill="#5b6a98"/><path d="M33 -3h14l1 50H35z" fill="#3b2723"/><path d="M56 -3h13l-2 44H57z" fill="#35231f"/><path d="M31 47h17v7H33z" fill="#b8472a"/><path d="M58 44h12v6H60z" fill="#a9431f"/><path d="M9 10c2-6 10-8 15-5 5 2 7 8 5 14l-2 8 2 8-1 6h-16l-2-10c-2-6-3-14-1-21z" fill="#cf8f4c"/><path d="M17 12c4 0 8 3 8 8l-2 8-6 1-2-8z" fill="#f4efe6"/><path d="M12 30c4-3 12-3 15 1l1 12-3 6h-10z" fill="#f1ece2"/><path d="M10 42h4l1 20h-4zM23 42h4l1 18h-4zM4 34h4v16H5z" fill="#ece6da"/><path d="M52 30c10-4 24-4 34 0 6 2 9 8 8 14l-4 6c-8-3-18-2-28 2-6-4-10-14-10-22z" fill="#c47e3c"/><path d="M62 29c8-3 18-2 24 2 2 4 0 8-4 10-8 0-16-4-20-12z" fill="#8a5428"/><path d="M58 46c8-3 20-3 30 2l-2 6c-8-2-18-1-26 2z" fill="#f0eadf"/><path d="M85 46h6l2 14h-5zM78 48h4l2 12h-4z" fill="#ece6da"/><path d="M40 16c2-6 10-9 16-5 5 3 6 10 4 16l-2 10-8 6-8-6c-3-6-4-14-2-21z" fill="#d1924d"/><path d="M49 14c3 0 5 3 5 8l1 12-5 5-4-6 1-12z" fill="#f5f0e8"/><path d="M46 40c3-2 9-2 12 1l1 12-2 6h-9z" fill="#f3eee4"/><path d="M45 50h5l1 13h-5zM55 50h4l1 11h-4z" fill="#efe9de"/><circle cx="20" cy="17" r="1.100" fill="#15100c"/><circle cx="54" cy="24" r="1.100" fill="#15100c"/><ellipse cx="26" cy="22" rx="1.400" ry="1.100" fill="#1a1410"/><ellipse cx="57" cy="33" rx="1.400" ry="1.100" fill="#1a1410"/></g></svg></div><div class="lab" style="left:273px;top:116px">image1</div><div class="thumb" style="left:418px;top:45px;width:100px;height:67px"><svg width="100" height="67" viewBox="0 0 100 67" preserveAspectRatio="none"><defs><filter id="b6b" x="-3%" y="-3%" width="106%" height="106%"><feGaussianBlur stdDeviation="0.55"/></filter></defs><g filter="url(#b6b)"><rect x="-3" y="-3" width="106" height="73" fill="#ecedee"/><rect x="-3" y="14" width="106" height="16" fill="#e1e4e6"/><rect x="-3" y="28" width="106" height="5" fill="#c9ced1"/><path d="M-3 29c20-2 40-1 58 0 8 1 14 2 20 3H-3z" fill="#4e6b3f"/><rect x="-3" y="32.500" width="106" height="38" fill="#cdb595"/><path d="M20 33h83v14c-20 0-40-4-83-14z" fill="#c6b096"/><path d="M-3 33c10 0 16 4 18 12 4 8 8 16 12 25H-3z" fill="#ddb888"/><path d="M14 40c4 6 6 14 12 20 2 4 4 6 6 10h-8c-4-8-8-18-10-30z" fill="#e9dcc8"/><path d="M60 48c8 2 14 6 22 7 8 0 14 2 21 5v3c-8-4-16-3-24-4-8-2-14-6-19-11z" fill="#f0e8da"/><path d="M30 40c10 2 20 3 30 3M40 52c8 1 14 3 20 6" stroke="#dccdb6" stroke-width="1.200" fill="none"/><path d="M86 58c3-3 8-3 11 0z" fill="#a89a5a"/><rect x="8.500" y="45" width="3" height="8" rx="1" fill="#3c6fa6"/><rect x="16" y="52" width="3.200" height="9" rx="1" fill="#31447a"/><rect x="6" y="37" width="1.300" height="3.500" fill="#555"/><path d="M44 9c2-3 5-2 6 1" fill="none" stroke="#3aa357" stroke-width="1.700"/><circle cx="21" cy="19" r=".9" fill="#666"/><rect x="79.500" y="27" width="1" height="4" fill="#999"/></g></svg></div><div class="lab" style="left:403px;top:116px">image2</div><div class="thumb" style="left:26px;top:184px;width:100px;height:56px"><svg width="100" height="56" viewBox="0 0 100 57" preserveAspectRatio="none"><defs><filter id="s7b" x="-3%" y="-3%" width="106%" height="106%"><feGaussianBlur stdDeviation=".55"/></filter><linearGradient id="s7r" x1="0" y1="0" x2="0" y2="1"><stop offset="0" stop-color="#7c7e80"/><stop offset="1" stop-color="#8c8d8f"/></linearGradient></defs><g filter="url(#s7b)"><rect x="-3" y="-3" width="106" height="63" fill="url(#s7r)"/><path d="M60 8h43v38C92 36 84 28 76 22 70 18 64 14 60 8z" fill="#6f7270"/><path d="M48 -3h18l-2 14h-12z" fill="#c2c8cc"/><path d="M52 6h10l2 10h-14z" fill="#a9adb0"/><path d="M-3 -3h53c-2 5-6 8-14 11-8 5-14 10-20 16-6 4-12 6-19 9z" fill="#44544a"/><path d="M2 3c10-4 24-4 36-2-6 5-16 8-24 11-6 2-10 0-12-3z" fill="#596b56"/><path d="M-3 30c6-2 12-6 18-10l4 4c-6 6-14 12-22 16z" fill="#5b615c"/><path d="M103 -3H66c2 6 8 8 16 9 8 2 14 4 21 8z" fill="#4c5e48"/><path d="M-3 40L14 30 36 14l3 2L22 34-3 62z" fill="#8d8f8c"/><path d="M-3 50L20 32l2 2L-3 60z" fill="#a6a7a4"/><path d="M60 11c6 6 10 9 15 12 6 4 12 10 18 16l10 8v-7l-9-8c-5-6-11-11-17-14-5-4-9-7-13-10z" fill="#b3a263"/><path d="M60 11c6 6 10 9 15 12 6 4 12 10 18 16l10 8v-3l-9-8c-6-6-12-11-18-15-5-4-9-7-14-12z" fill="#c9b872"/><path d="M18 30l6 3 5-6" fill="none" stroke="#c6a83c" stroke-width="1.300"/><path d="M3 57l6-5M12 49l4-4M19 42l3-3" stroke="#c9aa36" stroke-width="1.500"/><path d="M51.2 16.7L50.4 18.6" stroke="#efefef" stroke-width="0.8"/><path d="M48.4 23.1L47.4 25.1" stroke="#efefef" stroke-width="0.9"/><path d="M45.4 29.7L44.4 31.9" stroke="#efefef" stroke-width="1"/><path d="M42.3 36.4L41.2 38.9" stroke="#efefef" stroke-width="1.2"/><path d="M39.1 43.4L37.9 46.1" stroke="#efefef" stroke-width="1.3"/><path d="M35.9 50.6L34.6 53.6" stroke="#efefef" stroke-width="1.4"/><path d="M32.5 58.1L31.1 61.2" stroke="#efefef" stroke-width="1.5"/><path d="M57.7 16.7L57.8 18.6" stroke="#efefef" stroke-width="0.8"/><path d="M58.1 23.1L58.2 25.1" stroke="#efefef" stroke-width="0.9"/><path d="M58.5 29.7L58.6 31.9" stroke="#efefef" stroke-width="1"/><path d="M58.8 36.4L59 38.9" stroke="#efefef" stroke-width="1.2"/><path d="M59.2 43.4L59.4 46.1" stroke="#efefef" stroke-width="1.3"/><path d="M59.6 50.6L59.8 53.6" stroke="#efefef" stroke-width="1.4"/><path d="M60.1 58.1L60.2 61.2" stroke="#efefef" stroke-width="1.5"/><path d="M64 16.7L65 18.6" stroke="#efefef" stroke-width="0.8"/><path d="M67.4 23.1L68.6 25.1" stroke="#efefef" stroke-width="0.9"/><path d="M71 29.7L72.3 31.9" stroke="#efefef" stroke-width="1"/><path d="M74.7 36.4L76.1 38.9" stroke="#efefef" stroke-width="1.2"/><path d="M78.6 43.4L80.1 46.1" stroke="#efefef" stroke-width="1.3"/><path d="M82.5 50.6L84.1 53.6" stroke="#efefef" stroke-width="1.4"/><path d="M86.6 58.1L88.3 61.2" stroke="#efefef" stroke-width="1.5"/><rect x="39" y="16" width="5" height="5" rx="1" fill="#eeeeee"/><rect x="47" y="17" width="5" height="4" rx="1" fill="#e4e4e4"/><rect x="44" y="10" width="4" height="3" rx="1" fill="#ddd"/><rect x="57" y="8" width="3" height="3" rx="1" fill="#eee"/><rect x="70" y="13" width="5" height="4" rx="1" fill="#33363a"/><rect x="76" y="16" width="5" height="4" rx="1" fill="#e6e6e6"/><rect x="84" y="14" width="4" height="3" rx="1" fill="#ddd"/><rect x="90" y="16" width="6" height="6" rx="1" fill="#3a3d40"/><rect x="95" y="20" width="7" height="6" rx="1" fill="#c23a34"/><rect x="3.500" y="31" width="2" height="7" fill="#3a3f3a"/><rect x="8.500" y="31" width="2.200" height="7" fill="#7a2b2b"/><rect x="14" y="30" width="2.400" height="8" fill="#1f2024"/><rect x="9" y="14" width="3.400" height="5" fill="#4a78c0"/><rect x="10.300" y="19" width=".8" height="12" fill="#9aa"/></g></svg></div><div class="lab" style="left:12px;top:245px">test</div><div class="thumb" style="left:157px;top:184px;width:100px;height:56px"><svg width="100" height="56" viewBox="0 0 100 57" preserveAspectRatio="none"><defs><filter id="s8b" x="-3%" y="-3%" width="106%" height="106%"><feGaussianBlur stdDeviation=".55"/></filter><linearGradient id="s8r" x1="0" y1="0" x2="0" y2="1"><stop offset="0" stop-color="#7c7e80"/><stop offset="1" stop-color="#8c8d8f"/></linearGradient></defs><g filter="url(#s8b)"><rect x="-3" y="-3" width="106" height="63" fill="url(#s8r)"/><path d="M60 8h43v38C92 36 84 28 76 22 70 18 64 14 60 8z" fill="#6f7270"/><path d="M48 -3h18l-2 14h-12z" fill="#c2c8cc"/><path d="M52 6h10l2 10h-14z" fill="#a9adb0"/><path d="M-3 -3h53c-2 5-6 8-14 11-8 5-14 10-20 16-6 4-12 6-19 9z" fill="#44544a"/><path d="M2 3c10-4 24-4 36-2-6 5-16 8-24 11-6 2-10 0-12-3z" fill="#596b56"/><path d="M-3 30c6-2 12-6 18-10l4 4c-6 6-14 12-22 16z" fill="#5b615c"/><path d="M103 -3H66c2 6 8 8 16 9 8 2 14 4 21 8z" fill="#4c5e48"/><path d="M-3 40L14 30 36 14l3 2L22 34-3 62z" fill="#8d8f8c"/><path d="M-3 50L20 32l2 2L-3 60z" fill="#a6a7a4"/><path d="M60 11c6 6 10 9 15 12 6 4 12 10 18 16l10 8v-7l-9-8c-5-6-11-11-17-14-5-4-9-7-13-10z" fill="#b3a263"/><path d="M60 11c6 6 10 9 15 12 6 4 12 10 18 16l10 8v-3l-9-8c-6-6-12-11-18-15-5-4-9-7-14-12z" fill="#c9b872"/><path d="M18 30l6 3 5-6" fill="none" stroke="#c6a83c" stroke-width="1.300"/><path d="M3 57l6-5M12 49l4-4M19 42l3-3" stroke="#c9aa36" stroke-width="1.500"/><path d="M51.2 16.7L50.4 18.6" stroke="#efefef" stroke-width="0.8"/><path d="M48.4 23.1L47.4 25.1" stroke="#efefef" stroke-width="0.9"/><path d="M45.4 29.7L44.4 31.9" stroke="#efefef" stroke-width="1"/><path d="M42.3 36.4L41.2 38.9" stroke="#efefef" stroke-width="1.2"/><path d="M39.1 43.4L37.9 46.1" stroke="#efefef" stroke-width="1.3"/><path d="M35.9 50.6L34.6 53.6" stroke="#efefef" stroke-width="1.4"/><path d="M32.5 58.1L31.1 61.2" stroke="#efefef" stroke-width="1.5"/><path d="M57.7 16.7L57.8 18.6" stroke="#efefef" stroke-width="0.8"/><path d="M58.1 23.1L58.2 25.1" stroke="#efefef" stroke-width="0.9"/><path d="M58.5 29.7L58.6 31.9" stroke="#efefef" stroke-width="1"/><path d="M58.8 36.4L59 38.9" stroke="#efefef" stroke-width="1.2"/><path d="M59.2 43.4L59.4 46.1" stroke="#efefef" stroke-width="1.3"/><path d="M59.6 50.6L59.8 53.6" stroke="#efefef" stroke-width="1.4"/><path d="M60.1 58.1L60.2 61.2" stroke="#efefef" stroke-width="1.5"/><path d="M64 16.7L65 18.6" stroke="#efefef" stroke-width="0.8"/><path d="M67.4 23.1L68.6 25.1" stroke="#efefef" stroke-width="0.9"/><path d="M71 29.7L72.3 31.9" stroke="#efefef" stroke-width="1"/><path d="M74.7 36.4L76.1 38.9" stroke="#efefef" stroke-width="1.2"/><path d="M78.6 43.4L80.1 46.1" stroke="#efefef" stroke-width="1.3"/><path d="M82.5 50.6L84.1 53.6" stroke="#efefef" stroke-width="1.4"/><path d="M86.6 58.1L88.3 61.2" stroke="#efefef" stroke-width="1.5"/><rect x="39" y="16" width="5" height="5" rx="1" fill="#eeeeee"/><rect x="47" y="17" width="5" height="4" rx="1" fill="#e4e4e4"/><rect x="44" y="10" width="4" height="3" rx="1" fill="#ddd"/><rect x="57" y="8" width="3" height="3" rx="1" fill="#eee"/><rect x="70" y="13" width="5" height="4" rx="1" fill="#33363a"/><rect x="76" y="16" width="5" height="4" rx="1" fill="#e6e6e6"/><rect x="84" y="14" width="4" height="3" rx="1" fill="#ddd"/><rect x="90" y="16" width="6" height="6" rx="1" fill="#3a3d40"/><rect x="95" y="20" width="7" height="6" rx="1" fill="#c23a34"/><rect x="3.500" y="31" width="2" height="7" fill="#3a3f3a"/><rect x="8.500" y="31" width="2.200" height="7" fill="#7a2b2b"/><rect x="14" y="30" width="2.400" height="8" fill="#1f2024"/><rect x="9" y="14" width="3.400" height="5" fill="#4a78c0"/><rect x="10.300" y="19" width=".8" height="12" fill="#9aa"/></g><g filter="url(#s8b)" opacity=".92"><rect x="38" y="8" width="10" height="6" fill="#f0533a"/><rect x="44" y="10" width="14" height="7" fill="#f0533a"/><rect x="40" y="14" width="6" height="6" fill="#f0533a"/><rect x="68" y="9" width="12" height="7" fill="#f0533a"/><rect x="78" y="10" width="14" height="9" fill="#f0533a"/><rect x="90" y="10" width="12" height="12" fill="#f0533a"/><rect x="94" y="20" width="8" height="6" fill="#f0533a"/><rect x="13" y="28" width="14" height="3.500" fill="#f0533a" opacity=".45"/><rect x="41" y="16" width="4" height="5" fill="#f4f4f4"/><rect x="48" y="17" width="5" height="3.500" fill="#f0f0f0"/><rect x="76" y="16.500" width="5" height="3.500" fill="#f0e8e8"/></g></svg></div><div class="lab" style="left:143px;top:245px">test_detat</div><div class="thumb" style="left:287px;top:184px;width:100px;height:56px"><svg width="100" height="56" viewBox="0 0 100 56" preserveAspectRatio="none"><defs><filter id="c9b" x="-3%" y="-3%" width="106%" height="106%"><feGaussianBlur stdDeviation="0.55"/></filter></defs><g filter="url(#c9b)"><rect x="-3" y="-3" width="106" height="62" fill="#b7b8ba"/><rect x="-3" y="-3" width="106" height="14" fill="#eef0f2"/><path d="M-3 4c8-4 18-2 26 2 8 2 18 4 28 4 12-2 24-2 36 0l16 1v12H-3z" fill="#5e7a4c"/><path d="M-3 2c6-2 12 0 16 4-4 6-10 8-16 8z" fill="#4a6a3c"/><rect x="-3" y="13" width="22" height="5" fill="#3a6aa8"/><rect x="90" y="4" width="8" height="14" fill="#8a8a86"/><rect x="-3" y="20" width="106" height="8" fill="#8f9193"/><rect x="-3" y="27" width="106" height="32" fill="#bcbdbf"/><rect x="18" y="17" width="18" height="19" rx="3" fill="#b9babb"/><rect x="20" y="19" width="14" height="6" fill="#4a4f57"/><rect x="19" y="33" width="16" height="3" fill="#3a3a3a"/><rect x="47" y="19" width="9" height="13" rx="1" fill="#3d4a2c"/><rect x="47" y="19" width="9" height="3" fill="#c7b13a"/><rect x="60" y="20" width="9" height="11" rx="1" fill="#33402a"/><rect x="60" y="20" width="9" height="2.500" fill="#c7b13a"/><rect x="72" y="21" width="31" height="27" rx="5" fill="#eeefef"/><path d="M77 23h26v9H75z" fill="#5a6068"/><rect x="84" y="40" width="12" height="2.500" fill="#d7c032"/><rect x="74" y="46" width="29" height="4" fill="#25272a"/><rect x="74" y="35" width="6" height="3" fill="#f8f8f4"/><path d="M70 50h33v3H66z" fill="#8e9092"/><circle cx="12.500" cy="20.500" r="2.400" fill="#2e221c"/><path d="M9.500 23h6l1.500 11h-8z" fill="#ecece8"/><path d="M10 34h6l1 8 -1 9h-2.500l.5-9-2-4-3 6-2 5-2.500-1 3-7z" fill="#56607a"/><circle cx="38.500" cy="17" r="2.800" fill="#1a1512"/><path d="M33 20h9l2 15h-12z" fill="#1f2026"/><path d="M32 34h11l2 9 2 10h-4l-4-13-5 8-4 6-3-2 5-9z" fill="#1b1c20"/><circle cx="47.500" cy="26.500" r="2.200" fill="#2a1d16"/><path d="M45 29h5l1 9h-7z" fill="#93a3bb"/><path d="M44.500 38h6l.5 12h-2.200l-1-9-1.500 9h-2.300z" fill="#3d4560"/></g></svg></div><div class="lab" style="left:273px;top:245px">WhatsApp Image<br>2024-03-01 at<br>4.03.11 PM</div><div class="thumb" style="left:418px;top:168px;width:100px;height:72px"><svg width="100" height="72" viewBox="0 0 461 330" preserveAspectRatio="none"><defs><linearGradient id="h10s" x1="0" y1="0" x2="0" y2="1"><stop offset="0" stop-color="#b5c7de"/><stop offset="1" stop-color="#d4dde8"/></linearGradient><linearGradient id="h10r" x1="0" y1="0" x2="0" y2="1"><stop offset="0" stop-color="#696b6d"/><stop offset="1" stop-color="#5d5f60"/></linearGradient><linearGradient id="h10q" x1="0" y1="0" x2="0" y2="1"><stop offset="0" stop-color="#77797b"/><stop offset=".4" stop-color="#8b8c8d"/><stop offset="1" stop-color="#9a9a9a"/></linearGradient><linearGradient id="h10w" x1="0" y1="0" x2="0" y2="1"><stop offset="0" stop-color="#adb8be"/><stop offset="1" stop-color="#97a5ad"/></linearGradient><filter id="h10b" x="-2%" y="-2%" width="104%" height="104%"><feGaussianBlur stdDeviation="1.6"/></filter><filter id="h10b2" x="-5%" y="-5%" width="110%" height="110%"><feGaussianBlur stdDeviation="2.2"/></filter></defs><g filter="url(#h10b)"><rect x="-5" y="-5" width="471" height="90" fill="url(#h10s)"/><path d="M-5 56C60 52 120 54 180 56H466V70H-5z" fill="#a9bbcd"/><rect x="-5" y="66" width="471" height="270" fill="url(#h10r)"/><path d="M229 76L272 78L466 150V336H236z" fill="url(#h10q)"/><path d="M290 72H466V124L300 80z" fill="url(#h10w)"/><path d="M280 76L466 119V142L276 78z" fill="#8e9569"/><path d="M272 78L466 129V152L270 79z" fill="#77797a"/><path d="M268 78L466 139V153L268 80z" fill="#a3a5a2"/><path d="M268 80L466 151V156L268 81z" fill="#4f5152"/><path d="M-5 66H215L205 76L-5 152z" fill="#a09f77"/><path d="M70 80h28v16H72z" fill="#b7c2ca"/><path d="M-5 153L205 76L208 78L-5 165z" fill="#dcdcda"/><path d="M-5 141L205 74L205 76L-5 153z" fill="#8d8e88"/><path d="M70 62c20-6 50-6 80-2 20-2 40 0 60 4v8H70z" fill="#6c7f86"/><path d="M300 62h166v10h-166z" fill="#8d9a9a"/><path d="M330 69h136v6h-136z" fill="#aab0a8"/><path d="M262 76c2-10 10-14 22-12 8-6 20-4 28 0 10-4 22-2 30 2 10-2 24 0 34 6v6H262z" fill="#44554f"/><path d="M92 92c-4-10 0-22 12-26 8-8 24-8 34-4 12-4 26-2 36 2 14-2 30 2 40 8l-4 6c-20 4-40 14-60 18-14-8-36-6-58-4z" fill="#37483d"/><path d="M110 70c10-6 30-6 44 0 10 2 18 4 24 8-20 4-50 2-68-8z" fill="#465a4b"/><rect x="56" y="47" width="22" height="14" fill="#c9c9c6"/><path d="M-5 46c8-6 18-4 22-8 8-4 22-2 30 2 10 2 18 8 22 16 8 6 10 16 6 24 6 6 8 14 4 20-4 6-12 8-18 6-2 8-10 12-18 12-8 8-24 12-34 10-6 2-10 2-14 0z" fill="#36453a"/><path d="M8 58c8-8 22-6 30 0 10 0 16 8 12 16-12 6-30 4-42-4z" fill="#43553f"/><path d="M0 100c10-4 24-2 34 4 8 4 8 12 0 16-10 2-24 0-34-6z" fill="#2a372c"/><rect x="179" y="12" width="46" height="54" fill="#d4d4d1"/><path d="M183 14v52M189 14v52M195 14v52M201 14v52M207 14v52M213 14v52M219 14v52" stroke="#a6abb2" stroke-width="1.800"/><rect x="192" y="9" width="20" height="5" fill="#d4d4d1"/><rect x="333" y="28" width="27" height="38" fill="#93a4ba"/><rect x="346" y="27" width="14" height="39" fill="#c4cdd8"/><path d="M349 30v34M353 30v34M357 30v34" stroke="#a9b5c4" stroke-width="1"/><rect x="362" y="46" width="13" height="20" fill="#d9ccb2"/><rect x="362" y="46" width="5" height="20" fill="#c2b59c"/><rect x="403" y="42" width="43" height="24" fill="#d2d5d8"/><rect x="403" y="44" width="5" height="22" fill="#aab2bc"/><path d="M409 46h36M409 49.500h36M409 53h36M409 56.500h36M409 60h36M409 63.500h36" stroke="#9aa2ac" stroke-width="1.500"/><rect x="150" y="56" width="40" height="10" fill="#aeb8c3"/><path d="M221 78L150 336H180L221.500 78z" fill="#4b4d4f"/><path d="M222 76L184 336H204L225 76z" fill="#36383a"/><path d="M225 76L203 336H213L227 76z" fill="#3d675d"/><path d="M227 76L212 336H223L229 76z" fill="#c8c8c3"/><path d="M230.500 78L239.800 336H243.600L232 78z" fill="#d6b036"/><path d="M221 78L177 336H180L222 78z" fill="#c4a236"/><rect x="219" y="68" width="17" height="6" fill="#2f7a55"/><rect x="213" y="178" width="11" height="20" fill="#e2e2e0"/><path d="M0.0 172.3L15.7 165.0" stroke="#eeeeee" stroke-width="2.200"/><path d="M1.0 193.2L9.4 189.7" stroke="#eeeeee" stroke-width="2.200"/><path d="M31.4 206.8L40.8 202.2" stroke="#eeeeee" stroke-width="2.200"/><path d="M0.0 228.8L10.5 221.4" stroke="#eeeeee" stroke-width="2.200"/><path d="M17.8 275.8L27.2 266.4" stroke="#eeeeee" stroke-width="2.200"/><path d="M56.4 238.2L59.6 236.1" stroke="#eeeeee" stroke-width="2.200"/><path d="M80.5 214.1L86.8 209.3" stroke="#eeeeee" stroke-width="2.200"/><path d="M116.0 254.9L123.4 245.5" stroke="#eeeeee" stroke-width="2.200"/><path d="M88.9 298.8L99.3 284.2" stroke="#eeeeee" stroke-width="2.200"/><path d="M58.5 188.0L61.7 185.9" stroke="#eeeeee" stroke-width="2.200"/><path d="M146.4 203.7L151.6 198.5" stroke="#eeeeee" stroke-width="2.200"/><path d="M62 152L67 149" stroke="#eeeeee" stroke-width="2.200"/><path d="M95 150L99 147.5" stroke="#eeeeee" stroke-width="2.200"/><path d="M120 146L124 143.5" stroke="#eeeeee" stroke-width="2.200"/><path d="M150 140L153 138" stroke="#eeeeee" stroke-width="2.200"/><path d="M30 160L37 156.5" stroke="#eeeeee" stroke-width="2.200"/><path d="M165 150L168 147.5" stroke="#eeeeee" stroke-width="2.200"/><path d="M188 120L190 118" stroke="#eeeeee" stroke-width="2.200"/><path d="M140 128L143 126" stroke="#eeeeee" stroke-width="2.200"/><path d="M278.1 173.4L281.2 178.6" stroke="#f2f2f2" stroke-width="2.400"/><path d="M293.8 205.8L297.9 213.1" stroke="#f2f2f2" stroke-width="2.400"/><path d="M353.4 206.8L360.7 214.1" stroke="#f2f2f2" stroke-width="2.400"/><path d="M306.3 230.9L310.5 237.1" stroke="#f2f2f2" stroke-width="2.400"/><path d="M376.4 231.9L384.7 240.3" stroke="#f2f2f2" stroke-width="2.400"/><path d="M324.1 268.5L331.4 282.1" stroke="#f2f2f2" stroke-width="2.400"/><path d="M348.1 319.7L355.4 332.3" stroke="#f2f2f2" stroke-width="2.400"/><path d="M263 150L264.5 155" stroke="#f2f2f2" stroke-width="2.400"/><path d="M300 150L302 155" stroke="#f2f2f2" stroke-width="2.400"/><path d="M340 158L343 164" stroke="#f2f2f2" stroke-width="2.400"/><path d="M252 130L253 134" stroke="#f2f2f2" stroke-width="2.400"/><path d="M280 128L281.5 132" stroke="#f2f2f2" stroke-width="2.400"/><path d="M278 319.500l16.500 8.500 16-8.500" fill="none" stroke="#f2f2f2" stroke-width="2.400"/><rect x="257.1" y="81.1" width="6.1" height="1.8" fill="#26282b" opacity=".75"/><rect x="260" y="79.3" width="4" height="3.2" rx="0.8" fill="#1f2226"/><rect x="252.2" y="81.4" width="6.1" height="1.8" fill="#26282b" opacity=".75"/><rect x="255" y="79.6" width="4.1" height="3.3" rx="0.8" fill="#e4e4e4"/><rect x="256" y="81.5" width="6.2" height="1.8" fill="#26282b" opacity=".75"/><rect x="258.9" y="79.6" width="4.1" height="3.3" rx="0.8" fill="#2a2c30"/><rect x="205.3" y="81.6" width="6.2" height="1.9" fill="#26282b" opacity=".75"/><rect x="208.2" y="79.7" width="4.1" height="3.3" rx="0.8" fill="#55585e"/><rect x="263.3" y="82" width="6.3" height="1.9" fill="#26282b" opacity=".75"/><rect x="266.3" y="80.1" width="4.2" height="3.3" rx="0.8" fill="#a03434"/><rect x="242.2" y="82.2" width="6.3" height="1.9" fill="#26282b" opacity=".75"/><rect x="245.2" y="80.3" width="4.2" height="3.4" rx="0.8" fill="#b8bcc0"/><rect x="230.8" y="82.7" width="6.4" height="1.9" fill="#26282b" opacity=".75"/><rect x="233.8" y="80.8" width="4.3" height="3.4" rx="0.9" fill="#1f2226"/><rect x="211.8" y="82.8" width="6.4" height="1.9" fill="#26282b" opacity=".75"/><rect x="214.8" y="80.8" width="4.3" height="3.4" rx="0.9" fill="#b8bcc0"/><rect x="201.9" y="83.1" width="6.5" height="2" fill="#26282b" opacity=".75"/><rect x="204.9" y="81.1" width="4.3" height="3.5" rx="0.9" fill="#1f2226"/><rect x="246.4" y="83.3" width="6.6" height="2" fill="#26282b" opacity=".75"/><rect x="249.5" y="81.3" width="4.4" height="3.5" rx="0.9" fill="#c9c9c6"/><rect x="273.3" y="83.8" width="6.7" height="2" fill="#26282b" opacity=".75"/><rect x="276.4" y="81.8" width="4.5" height="3.6" rx="0.9" fill="#dcdcdc"/><rect x="204.7" y="83.9" width="6.7" height="2" fill="#26282b" opacity=".75"/><rect x="207.8" y="81.9" width="4.5" height="3.6" rx="0.9" fill="#3a3d44"/><rect x="232.1" y="84.7" width="6.9" height="2.1" fill="#26282b" opacity=".75"/><rect x="235.3" y="82.6" width="4.6" height="3.7" rx="0.9" fill="#55585e"/><rect x="241.5" y="84.8" width="6.9" height="2.1" fill="#26282b" opacity=".75"/><rect x="244.8" y="82.8" width="4.6" height="3.7" rx="0.9" fill="#1f2226"/><rect x="247.7" y="86" width="7.2" height="2.2" fill="#26282b" opacity=".75"/><rect x="251.1" y="83.9" width="4.8" height="3.8" rx="1" fill="#1f2226"/><rect x="201.9" y="86.7" width="7.3" height="2.2" fill="#26282b" opacity=".75"/><rect x="205.3" y="84.5" width="4.9" height="3.9" rx="1" fill="#55585e"/><rect x="230.3" y="86.8" width="7.4" height="2.2" fill="#26282b" opacity=".75"/><rect x="233.7" y="84.6" width="4.9" height="3.9" rx="1" fill="#1f2226"/><rect x="202.6" y="86.9" width="7.4" height="2.2" fill="#26282b" opacity=".75"/><rect x="206" y="84.7" width="4.9" height="3.9" rx="1" fill="#c9c9c6"/><rect x="202.8" y="87.1" width="7.4" height="2.2" fill="#26282b" opacity=".75"/><rect x="206.3" y="84.8" width="4.9" height="4" rx="1" fill="#dcdcdc"/><rect x="259.2" y="87.9" width="7.6" height="2.3" fill="#26282b" opacity=".75"/><rect x="262.7" y="85.6" width="5.1" height="4.1" rx="1" fill="#1f2226"/><rect x="195.1" y="88" width="7.6" height="2.3" fill="#26282b" opacity=".75"/><rect x="198.7" y="85.7" width="5.1" height="4.1" rx="1" fill="#3a3d44"/><rect x="197.2" y="88.1" width="7.6" height="2.3" fill="#26282b" opacity=".75"/><rect x="200.7" y="85.8" width="5.1" height="4.1" rx="1" fill="#1f2226"/><rect x="248.1" y="88.5" width="7.7" height="2.3" fill="#26282b" opacity=".75"/><rect x="251.7" y="86.2" width="5.2" height="4.1" rx="1" fill="#c9c9c6"/><rect x="289" y="91" width="8.3" height="2.5" fill="#26282b" opacity=".75"/><rect x="292.8" y="88.5" width="5.5" height="4.4" rx="1.1" fill="#55585e"/><rect x="251.3" y="91.2" width="8.3" height="2.5" fill="#26282b" opacity=".75"/><rect x="255.2" y="88.7" width="5.6" height="4.5" rx="1.1" fill="#8a8f96"/><rect x="195.7" y="91.2" width="8.3" height="2.5" fill="#26282b" opacity=".75"/><rect x="199.6" y="88.7" width="5.6" height="4.5" rx="1.1" fill="#f0f0f0"/><rect x="202.8" y="91.5" width="8.4" height="2.5" fill="#26282b" opacity=".75"/><rect x="206.7" y="89" width="5.6" height="4.5" rx="1.1" fill="#2a2c30"/><rect x="263.2" y="92.2" width="8.6" height="2.6" fill="#26282b" opacity=".75"/><rect x="267.2" y="89.6" width="5.7" height="4.6" rx="1.1" fill="#f0f0f0"/><rect x="195.4" y="92.7" width="8.7" height="2.6" fill="#26282b" opacity=".75"/><rect x="199.5" y="90.1" width="5.8" height="4.6" rx="1.2" fill="#55585e"/><rect x="293.6" y="93.1" width="8.8" height="2.6" fill="#26282b" opacity=".75"/><rect x="297.7" y="90.5" width="5.8" height="4.7" rx="1.2" fill="#a03434"/><rect x="239.4" y="93.4" width="8.8" height="2.7" fill="#26282b" opacity=".75"/><rect x="243.5" y="90.8" width="5.9" height="4.7" rx="1.2" fill="#2a2c30"/><rect x="264" y="94.2" width="9" height="2.7" fill="#26282b" opacity=".75"/><rect x="268.2" y="91.5" width="6" height="4.8" rx="1.2" fill="#2b2e36"/><rect x="279.5" y="95.6" width="9.3" height="2.8" fill="#26282b" opacity=".75"/><rect x="283.8" y="92.8" width="6.2" height="5" rx="1.2" fill="#c9c9c6"/><rect x="204.5" y="97" width="9.7" height="2.9" fill="#26282b" opacity=".75"/><rect x="209" y="94.1" width="6.4" height="5.2" rx="1.3" fill="#f0f0f0"/><rect x="183.3" y="98.1" width="9.9" height="3" fill="#26282b" opacity=".75"/><rect x="187.9" y="95.1" width="6.6" height="5.3" rx="1.3" fill="#2a2c30"/><rect x="238.4" y="98.7" width="10" height="3" fill="#26282b" opacity=".75"/><rect x="243" y="95.7" width="6.7" height="5.4" rx="1.3" fill="#c9c9c6"/><rect x="209.9" y="99.6" width="10.2" height="3.1" fill="#26282b" opacity=".75"/><rect x="214.7" y="96.5" width="6.8" height="5.5" rx="1.4" fill="#2b2e36"/><rect x="233" y="100.1" width="10.4" height="3.1" fill="#26282b" opacity=".75"/><rect x="237.8" y="97" width="6.9" height="5.5" rx="1.4" fill="#3a3d44"/><rect x="234.6" y="101.4" width="10.6" height="3.2" fill="#26282b" opacity=".75"/><rect x="239.5" y="98.2" width="7.1" height="5.7" rx="1.4" fill="#2a2c30"/><rect x="290.8" y="102" width="10.8" height="3.2" fill="#26282b" opacity=".75"/><rect x="295.9" y="98.8" width="7.2" height="5.8" rx="1.4" fill="#8a8f96"/><rect x="210.2" y="103" width="11" height="3.3" fill="#26282b" opacity=".75"/><rect x="215.3" y="99.7" width="7.3" height="5.9" rx="1.5" fill="#dcdcdc"/><rect x="278.3" y="103.2" width="11.1" height="3.3" fill="#26282b" opacity=".75"/><rect x="283.5" y="99.9" width="7.4" height="5.9" rx="1.5" fill="#2b2e36"/><rect x="272.6" y="103.3" width="11.1" height="3.3" fill="#26282b" opacity=".75"/><rect x="277.8" y="100" width="7.4" height="5.9" rx="1.5" fill="#2b2e36"/><rect x="238.7" y="103.6" width="11.1" height="3.3" fill="#26282b" opacity=".75"/><rect x="243.9" y="100.2" width="7.4" height="5.9" rx="1.5" fill="#a03434"/><rect x="194" y="103.8" width="11.2" height="3.4" fill="#26282b" opacity=".75"/><rect x="199.3" y="100.4" width="7.5" height="6" rx="1.5" fill="#8a8f96"/><rect x="320" y="105.1" width="11.5" height="3.4" fill="#26282b" opacity=".75"/><rect x="325.3" y="101.7" width="7.7" height="6.1" rx="1.5" fill="#3a3d44"/><rect x="310.4" y="105.3" width="11.5" height="3.5" fill="#26282b" opacity=".75"/><rect x="315.8" y="101.8" width="7.7" height="6.1" rx="1.5" fill="#8a8f96"/><rect x="317.1" y="105.7" width="11.6" height="3.5" fill="#26282b" opacity=".75"/><rect x="322.5" y="102.2" width="7.7" height="6.2" rx="1.5" fill="#55585e"/><rect x="313.5" y="105.9" width="11.7" height="3.5" fill="#26282b" opacity=".75"/><rect x="318.9" y="102.4" width="7.8" height="6.2" rx="1.6" fill="#c9c9c6"/><rect x="233.1" y="107" width="11.9" height="3.6" fill="#26282b" opacity=".75"/><rect x="238.7" y="103.4" width="7.9" height="6.3" rx="1.6" fill="#dcdcdc"/><rect x="305.9" y="107.3" width="12" height="3.6" fill="#26282b" opacity=".75"/><rect x="311.5" y="103.7" width="8" height="6.4" rx="1.6" fill="#2a2c30"/><rect x="308.7" y="110" width="12.6" height="3.8" fill="#26282b" opacity=".75"/><rect x="314.5" y="106.3" width="8.4" height="6.7" rx="1.7" fill="#f0f0f0"/><rect x="272.6" y="110.6" width="12.7" height="3.8" fill="#26282b" opacity=".75"/><rect x="278.6" y="106.8" width="8.5" height="6.8" rx="1.7" fill="#55585e"/><rect x="318.1" y="110.7" width="12.8" height="3.8" fill="#26282b" opacity=".75"/><rect x="324.1" y="106.9" width="8.5" height="6.8" rx="1.7" fill="#8a8f96"/><rect x="228.9" y="111" width="12.8" height="3.8" fill="#26282b" opacity=".75"/><rect x="234.9" y="107.2" width="8.5" height="6.8" rx="1.7" fill="#2b2e36"/><rect x="261.9" y="114" width="13.5" height="4" fill="#26282b" opacity=".75"/><rect x="268.2" y="109.9" width="9" height="7.2" rx="1.8" fill="#c9c9c6"/><rect x="337" y="114.2" width="13.5" height="4.1" fill="#26282b" opacity=".75"/><rect x="343.3" y="110.2" width="9" height="7.2" rx="1.8" fill="#8a8f96"/><rect x="232.9" y="117.2" width="14.2" height="4.3" fill="#26282b" opacity=".75"/><rect x="239.5" y="112.9" width="9.5" height="7.6" rx="1.9" fill="#dcdcdc"/><rect x="327.5" y="117.7" width="14.3" height="4.3" fill="#26282b" opacity=".75"/><rect x="334.2" y="113.4" width="9.5" height="7.6" rx="1.9" fill="#f0f0f0"/><rect x="302.3" y="123" width="15.5" height="4.7" fill="#26282b" opacity=".75"/><rect x="309.5" y="118.4" width="10.3" height="8.3" rx="2.1" fill="#1f2226"/><rect x="357.6" y="123.5" width="15.6" height="4.7" fill="#26282b" opacity=".75"/><rect x="364.9" y="118.8" width="10.4" height="8.3" rx="2.1" fill="#f0f0f0"/><rect x="270.3" y="125.3" width="16" height="4.8" fill="#26282b" opacity=".75"/><rect x="277.8" y="120.5" width="10.7" height="8.6" rx="2.1" fill="#a03434"/><rect x="295.2" y="129.7" width="17" height="5.1" fill="#26282b" opacity=".75"/><rect x="303.1" y="124.6" width="11.4" height="9.1" rx="2.3" fill="#f0f0f0"/><rect x="284.6" y="130.9" width="17.3" height="5.2" fill="#26282b" opacity=".75"/><rect x="292.6" y="125.8" width="11.5" height="9.2" rx="2.3" fill="#c9c9c6"/><rect x="284.3" y="131.2" width="17.4" height="5.2" fill="#26282b" opacity=".75"/><rect x="292.4" y="126" width="11.6" height="9.3" rx="2.3" fill="#a03434"/><rect x="336.1" y="131.6" width="17.5" height="5.2" fill="#26282b" opacity=".75"/><rect x="344.3" y="126.4" width="11.6" height="9.3" rx="2.3" fill="#a03434"/><rect x="353.7" y="132" width="17.6" height="5.3" fill="#26282b" opacity=".75"/><rect x="361.9" y="126.8" width="11.7" height="9.4" rx="2.3" fill="#2a2c30"/><rect x="187.1" y="132.4" width="17.6" height="5.3" fill="#26282b" opacity=".75"/><rect x="195.3" y="127.1" width="11.8" height="9.4" rx="2.4" fill="#dcdcdc"/><rect x="267.5" y="132.6" width="17.7" height="5.3" fill="#26282b" opacity=".75"/><rect x="275.8" y="127.3" width="11.8" height="9.4" rx="2.4" fill="#a03434"/><rect x="325.9" y="133.2" width="17.8" height="5.3" fill="#26282b" opacity=".75"/><rect x="334.2" y="127.9" width="11.9" height="9.5" rx="2.4" fill="#e4e4e4"/><rect x="258.8" y="136.8" width="18.6" height="5.6" fill="#26282b" opacity=".75"/><rect x="267.5" y="131.2" width="12.4" height="9.9" rx="2.5" fill="#a03434"/><rect x="271.4" y="137.1" width="18.7" height="5.6" fill="#26282b" opacity=".75"/><rect x="280.1" y="131.5" width="12.5" height="10" rx="2.5" fill="#1f2226"/><rect x="369.5" y="139.1" width="19.1" height="5.7" fill="#26282b" opacity=".75"/><rect x="378.4" y="133.3" width="12.8" height="10.2" rx="2.6" fill="#55585e"/><rect x="249" y="139.5" width="19.2" height="5.8" fill="#26282b" opacity=".75"/><rect x="258" y="133.7" width="12.8" height="10.3" rx="2.6" fill="#55585e"/><rect x="314.5" y="143.4" width="20.1" height="6" fill="#26282b" opacity=".75"/><rect x="323.9" y="137.4" width="13.4" height="10.7" rx="2.7" fill="#dcdcdc"/><rect x="263" y="143.6" width="20.2" height="6" fill="#26282b" opacity=".75"/><rect x="272.4" y="137.5" width="13.4" height="10.8" rx="2.7" fill="#e4e4e4"/><rect x="312.1" y="146.7" width="20.9" height="6.3" fill="#26282b" opacity=".75"/><rect x="321.8" y="140.5" width="13.9" height="11.1" rx="2.8" fill="#f0f0f0"/><rect x="288" y="77" width="5.3" height="3" rx="1" fill="#a03434"/><rect x="293.8" y="78.8" width="4.5" height="3.2" rx="1" fill="#2a2c30"/><rect x="300.2" y="80.7" width="7.3" height="3.4" rx="1" fill="#c9c9c6"/><rect x="307.7" y="83" width="5.6" height="3.6" rx="1" fill="#3a3d44"/><rect x="315.6" y="85.3" width="6" height="3.8" rx="1" fill="#8a8f96"/><rect x="322" y="87.3" width="8.3" height="4" rx="1" fill="#f0f0f0"/><rect x="332.3" y="90.4" width="7.3" height="4.3" rx="1" fill="#3a3d44"/><rect x="341.4" y="93.2" width="8.5" height="4.6" rx="1" fill="#1f2226"/><rect x="352.5" y="96.5" width="7.9" height="4.9" rx="1" fill="#2a2c30"/><rect x="363.6" y="99.8" width="9.1" height="5.2" rx="1" fill="#8a8f96"/><rect x="372.9" y="102.7" width="10.6" height="5.5" rx="1" fill="#e4e4e4"/><rect x="387.3" y="107" width="11.3" height="5.9" rx="1" fill="#2a2c30"/><rect x="399.7" y="110.8" width="13.4" height="6.2" rx="1" fill="#3a3d44"/><rect x="415.7" y="115.6" width="15.2" height="6.7" rx="1" fill="#a03434"/><rect x="433.5" y="121" width="14" height="7.2" rx="1" fill="#3a3d44"/><rect x="447.8" y="125.3" width="12.3" height="7.6" rx="1" fill="#dcdcdc"/><ellipse cx="418" cy="103" rx="12" ry="6.500" fill="#4b7a3a"/><path d="M128.2 110.6L133.4 109.8H142.8V113H129z" fill="#242629" opacity=".88"/><path d="M111.5 116.1L118.6 115.2H131.5V118.7H112.6z" fill="#242629" opacity=".88"/><path d="M285.5 118.4L297 116.9H318V122.9H287.2z" fill="#242629" opacity=".88"/><path d="M241.1 120L252.6 118.6H273.6V124.2H242.9z" fill="#242629" opacity=".88"/><path d="M312.1 120.3L323.6 118.7H344.6V125.1H313.9z" fill="#242629" opacity=".88"/><path d="M131.9 126.9L140.4 125.6H155.7V131H133.2z" fill="#242629" opacity=".88"/><path d="M334.3 129.6L345.8 128.5H366.8V133.1H336.1z" fill="#242629" opacity=".88"/><path d="M356.5 133.9L368 132.4H388.9V138.4H358.2z" fill="#242629" opacity=".88"/><path d="M226.4 133.9L235.6 132.4H252.4V138.4H227.8z" fill="#242629" opacity=".88"/><path d="M64.8 135L74.5 133.8H92.2V138.7H66.2z" fill="#242629" opacity=".88"/><path d="M258.9 135.3L270.4 133.6H291.3V140.6H260.6z" fill="#242629" opacity=".88"/><path d="M243 136.1L253.1 134.6H271.4V140.6H244.5z" fill="#242629" opacity=".88"/><path d="M307.7 135.3L319.2 133.6H340.1V140.6H309.4z" fill="#242629" opacity=".88"/><path d="M376.4 135.3L388 133.6H408.9V140.6H378.2z" fill="#242629" opacity=".88"/><path d="M82.1 138.6L94.3 136.9H116.3V143.7H84z" fill="#242629" opacity=".88"/><path d="M115.4 140.9L124 139.5H139.7V145H116.7z" fill="#242629" opacity=".88"/><path d="M40.3 144.4L52.2 143.3H73.6V147.8H42.1z" fill="#242629" opacity=".88"/><path d="M414.1 147.8L425.7 146.2H446.6V152.6H415.9z" fill="#242629" opacity=".88"/><path d="M68.5 148.4L79.2 147H98.7V152.8H70.1z" fill="#242629" opacity=".88"/><path d="M330.5 147.1L344.9 145H371.1V153.9H332.7z" fill="#242629" opacity=".88"/><path d="M283.6 148.7L296.6 146.9H320.1V153.9H285.6z" fill="#242629" opacity=".88"/><path d="M227.5 152.2L237.6 150.7H255.9V157H229z" fill="#242629" opacity=".88"/><path d="M379 151.5L392 149.7H415.5V157H381z" fill="#242629" opacity=".88"/><path d="M263.6 154L276.6 152.1H300.2V159.7H265.6z" fill="#242629" opacity=".88"/><path d="M125.5 155.6L136.6 154.2H156.7V160H127.2z" fill="#242629" opacity=".88"/><path d="M430 156.8L443 154.8H466.5V162.8H432z" fill="#242629" opacity=".88"/><path d="M148.8 159.2L165 157.7H194.5V164H151.2z" fill="#242629" opacity=".88"/><path d="M346 159.7L360.5 158H386.6V165H348.3z" fill="#242629" opacity=".88"/><path d="M398.1 163.4L413.4 161.5H441.2V169.5H400.5z" fill="#242629" opacity=".88"/><path d="M307.5 161.9L324.3 159.5H354.6V169.5H310.1z" fill="#242629" opacity=".88"/><path d="M312.1 167L323.6 166H344.6V170.3H313.9z" fill="#242629" opacity=".88"/><path d="M255.1 167L269.5 166H295.7V170.3H257.3z" fill="#242629" opacity=".88"/><path d="M277.3 174.5L291.7 172.6H317.9V180.6H279.5z" fill="#242629" opacity=".88"/><path d="M326.6 175L341.6 173.2H368.9V180.6H329z" fill="#242629" opacity=".88"/><path d="M430.8 176L441.5 173.8H460.8V182.8H432.4z" fill="#242629" opacity=".88"/><path d="M54.9 179.4L68.7 177.6H93.8V185H57z" fill="#242629" opacity=".88"/><path d="M369.5 178.9L389.7 176.2H426.4V187.2H372.7z" fill="#242629" opacity=".88"/><path d="M2.2 179.4L20.7 176.8H54.2V187.2H5.1z" fill="#242629" opacity=".88"/><path d="M116.4 184.9L131.7 182.7H159.4V191.6H118.8z" fill="#242629" opacity=".88"/><path d="M218 185.4L235.3 183.1H266.8V192.5H220.7z" fill="#242629" opacity=".88"/><path d="M336 193.6L351.3 191.6H379.1V199.6H338.4z" fill="#242629" opacity=".88"/><path d="M387.6 191.5L409.3 188.5H448.5V200.5H391z" fill="#242629" opacity=".88"/><path d="M142.8 194.7L158.9 192.2H188.3V202.7H145.3z" fill="#242629" opacity=".88"/><path d="M284.7 205.5L304.3 202.8H339.9V213.8H287.7z" fill="#242629" opacity=".88"/><path d="M355.9 208.5L374.6 206.8H408.7V213.8H358.8z" fill="#242629" opacity=".88"/><path d="M64.5 206.2L85.6 203.1H123.8V216H67.8z" fill="#242629" opacity=".88"/><path d="M222.7 218.4L244.9 215.2H285.2V228H226.1z" fill="#242629" opacity=".88"/><path d="M371.9 243.9L402.2 239.2H457.1V258.2H376.5z" fill="#242629" opacity=".88"/><path d="M308.5 255.9L335.3 252H384V268H312.6z" fill="#242629" opacity=".88"/><path d="M90.6 258.7L118.8 254.5H170.1V271.5H94.9z" fill="#242629" opacity=".88"/><path d="M-12.9 271.3L20.5 265.8H81.3V288.4H-7.8z" fill="#242629" opacity=".88"/><path d="M414 293.7L444.3 288.7H499.3V309.2H418.7z" fill="#242629" opacity=".88"/><path d="M293.7 291.5L339 284.3H421.2V313.7H300.7z" fill="#242629" opacity=".88"/><path d="M210 294.8L248 287.9H317.1V315.9H215.8z" fill="#242629" opacity=".88"/><rect x="135" y="106.7" width="8" height="6" rx="2" fill="#2c2e33"/><rect x="136" y="107.3" width="6.1" height="1.8" fill="#2a2e34"/><rect x="120.8" y="111.8" width="10.9" height="6.5" rx="2" fill="#c9c9c9"/><rect x="122.1" y="112.4" width="8.3" height="2" fill="#2a2e34"/><rect x="300.6" y="110.9" width="17.7" height="11.3" rx="2" fill="#333"/><rect x="302.7" y="112" width="13.5" height="3.5" fill="#2a2e34"/><rect x="256.2" y="113" width="17.7" height="10.6" rx="2" fill="#ddd"/><rect x="258.3" y="114" width="13.5" height="3.2" fill="#2a2e34"/><rect x="327.2" y="112.3" width="17.7" height="12.1" rx="2" fill="#ccc"/><rect x="329.3" y="113.5" width="13.5" height="3.7" fill="#2a2e34"/><rect x="143" y="120.2" width="13" height="10.2" rx="2" fill="#2c3f6a"/><rect x="144.6" y="121.2" width="9.9" height="3.1" fill="#2a2e34"/><rect x="349.4" y="123.9" width="17.7" height="8.7" rx="2" fill="#3a3a3a"/><rect x="351.5" y="124.7" width="13.5" height="2.7" fill="#2a2e34"/><rect x="371.5" y="126.4" width="17.7" height="11.3" rx="2" fill="#dedede"/><rect x="373.7" y="127.5" width="13.5" height="3.5" fill="#2a2e34"/><rect x="238.4" y="126.4" width="14.2" height="11.3" rx="2" fill="#35383e"/><rect x="240.2" y="127.5" width="10.8" height="3.5" fill="#2a2e34"/><rect x="77.5" y="128.9" width="15" height="9.3" rx="2" fill="#3a3f4a"/><rect x="79.3" y="129.8" width="11.4" height="2.8" fill="#2a2e34"/><rect x="273.9" y="126.6" width="17.7" height="13.2" rx="2" fill="#cfcfcf"/><rect x="276.1" y="127.9" width="13.5" height="4" fill="#2a2e34"/><rect x="256.2" y="128.6" width="15.5" height="11.3" rx="2" fill="#e6e6e6"/><rect x="258.1" y="129.7" width="11.8" height="3.5" fill="#2a2e34"/><rect x="322.7" y="126.6" width="17.7" height="13.2" rx="2" fill="#b43a3a"/><rect x="324.9" y="127.9" width="13.5" height="4" fill="#2a2e34"/><rect x="391.5" y="126.6" width="17.7" height="13.2" rx="2" fill="#2d2f35"/><rect x="393.6" y="127.9" width="13.5" height="4" fill="#2a2e34"/><rect x="98" y="130.2" width="18.7" height="12.8" rx="2" fill="#ececec"/><rect x="100.2" y="131.4" width="14.2" height="3.9" fill="#2a2e34"/><rect x="126.7" y="134" width="13.3" height="10.4" rx="2" fill="#dcdcdc"/><rect x="128.3" y="135" width="10.1" height="3.2" fill="#2a2e34"/><rect x="55.8" y="138.8" width="18.2" height="8.5" rx="2" fill="#3b4150"/><rect x="58" y="139.6" width="13.8" height="2.6" fill="#2a2e34"/><rect x="429.2" y="139.8" width="17.7" height="12.1" rx="2" fill="#d9d9d9"/><rect x="431.3" y="141" width="13.5" height="3.7" fill="#2a2e34"/><rect x="82.5" y="141.3" width="16.5" height="10.9" rx="2" fill="#26282c"/><rect x="84.5" y="142.3" width="12.5" height="3.3" fill="#2a2e34"/><rect x="349.4" y="136" width="22.2" height="17" rx="2" fill="#e9e9e9"/><rect x="352" y="137.6" width="16.9" height="5.2" fill="#2a2e34"/><rect x="300.6" y="140" width="20" height="13.2" rx="2" fill="#30333a"/><rect x="303" y="141.2" width="15.2" height="4" fill="#2a2e34"/><rect x="240.7" y="144.3" width="15.5" height="12.1" rx="2" fill="#1d1f22"/><rect x="242.5" y="145.4" width="11.8" height="3.7" fill="#2a2e34"/><rect x="395.9" y="142.3" width="20" height="14" rx="2" fill="#b9b9b4"/><rect x="398.3" y="143.6" width="15.2" height="4.3" fill="#2a2e34"/><rect x="280.6" y="144.5" width="20" height="14.3" rx="2" fill="#e2e2e2"/><rect x="283" y="145.9" width="15.2" height="4.4" fill="#2a2e34"/><rect x="140" y="148.3" width="17" height="11" rx="2" fill="#d9d9d9"/><rect x="142" y="149.3" width="12.9" height="3.4" fill="#2a2e34"/><rect x="447" y="146.8" width="20" height="15.1" rx="2" fill="#c9c9c9"/><rect x="449.4" y="148.3" width="15.2" height="4.6" fill="#2a2e34"/><rect x="170" y="151.4" width="25" height="11.9" rx="2" fill="#cfcfcf"/><rect x="173" y="152.5" width="19" height="3.6" fill="#2a2e34"/><rect x="364.9" y="151.1" width="22.2" height="13.2" rx="2" fill="#e6e6e6"/><rect x="367.6" y="152.3" width="16.9" height="4" fill="#2a2e34"/><rect x="418.1" y="153.5" width="23.5" height="15.1" rx="2" fill="#e8e8e8"/><rect x="420.9" y="154.9" width="17.9" height="4.6" fill="#2a2e34"/><rect x="329.4" y="149.5" width="25.7" height="18.9" rx="2" fill="#2b2d33"/><rect x="332.5" y="151.3" width="19.6" height="5.8" fill="#2a2e34"/><rect x="327.2" y="161.6" width="17.7" height="8.3" rx="2" fill="#8a2f2f"/><rect x="329.3" y="162.3" width="13.5" height="2.5" fill="#2a2e34"/><rect x="273.9" y="161.6" width="22.2" height="8.3" rx="2" fill="#444"/><rect x="276.6" y="162.3" width="16.9" height="2.5" fill="#2a2e34"/><rect x="296.1" y="164.6" width="22.2" height="15.1" rx="2" fill="#2a3350"/><rect x="298.8" y="166" width="16.9" height="4.6" fill="#2a2e34"/><rect x="346.3" y="165.8" width="23.1" height="14" rx="2" fill="#e4e4e4"/><rect x="349" y="167.1" width="17.5" height="4.3" fill="#2a2e34"/><rect x="444.7" y="164.8" width="16.4" height="17" rx="2" fill="#7a2a2a"/><rect x="446.7" y="166.4" width="12.5" height="5.2" fill="#2a2e34"/><rect x="73" y="170.2" width="21.3" height="14" rx="2" fill="#8d99a8"/><rect x="75.5" y="171.5" width="16.2" height="4.3" fill="#2a2e34"/><rect x="395.9" y="165.2" width="31.1" height="20.7" rx="2" fill="#ececec"/><rect x="399.7" y="167.2" width="23.6" height="6.3" fill="#2a2e34"/><rect x="26.4" y="166.4" width="28.4" height="19.6" rx="2" fill="#e9e9e9"/><rect x="29.8" y="168.3" width="21.6" height="6" fill="#2a2e34"/><rect x="136.4" y="173.7" width="23.5" height="17" rx="2" fill="#303236"/><rect x="139.2" y="175.3" width="17.9" height="5.2" fill="#2a2e34"/><rect x="240.7" y="173.8" width="26.6" height="17.7" rx="2" fill="#1f2124"/><rect x="243.9" y="175.4" width="20.2" height="5.4" fill="#2a2e34"/><rect x="356" y="183.7" width="23.5" height="15.1" rx="2" fill="#a82f2f"/><rect x="358.8" y="185.1" width="17.9" height="4.6" fill="#2a2e34"/><rect x="415.9" y="176.6" width="33.3" height="22.6" rx="2" fill="#6a3030"/><rect x="419.9" y="178.7" width="25.3" height="6.9" fill="#2a2e34"/><rect x="163.9" y="181.6" width="24.8" height="20" rx="2" fill="#c1bcb5"/><rect x="166.9" y="183.5" width="18.9" height="6.1" fill="#2a2e34"/><rect x="310.3" y="191.9" width="30.2" height="20.7" rx="2" fill="#212326"/><rect x="313.9" y="193.8" width="22.9" height="6.3" fill="#2a2e34"/><rect x="380.4" y="199.9" width="28.8" height="13.2" rx="2" fill="#2d3442"/><rect x="383.9" y="201.1" width="21.9" height="4" fill="#2a2e34"/><rect x="92" y="190.1" width="32.4" height="24.5" rx="2" fill="#b7b8b6"/><rect x="95.9" y="192.4" width="24.6" height="7.5" fill="#2a2e34"/><rect x="251.8" y="202.5" width="34.2" height="24.1" rx="2" fill="#ededed"/><rect x="255.9" y="204.7" width="26" height="7.4" fill="#2a2e34"/><rect x="411.5" y="220.3" width="46.6" height="35.8" rx="2" fill="#5a5d61"/><rect x="417.1" y="223.6" width="35.4" height="11" fill="#2a2e34"/><rect x="343.6" y="236" width="41.3" height="30.2" rx="2" fill="#25282e"/><rect x="348.5" y="238.9" width="31.4" height="9.2" fill="#2a2e34"/><rect x="127.5" y="237.6" width="43.5" height="32.1" rx="2" fill="#2b2e35"/><rect x="132.8" y="240.6" width="33" height="9.8" fill="#2a2e34"/><rect x="30.8" y="243.2" width="51.5" height="42.6" rx="2" fill="#a3343a"/><rect x="37" y="247.3" width="39.1" height="13" fill="#2a2e34"/><rect x="453.6" y="268.1" width="46.6" height="38.8" rx="2" fill="#2a2c30"/><rect x="459.2" y="271.7" width="35.4" height="11.9" fill="#2a2e34"/><rect x="352.9" y="255" width="69.7" height="55.4" rx="2" fill="#ececec"/><rect x="361.3" y="260.2" width="52.9" height="17" fill="#2a2e34"/><rect x="259.7" y="260" width="58.6" height="52.8" rx="2" fill="#b9b3a8"/><rect x="266.8" y="264.9" width="44.5" height="16.1" fill="#2a2e34"/></g></svg></div><div class="lab" style="left:404px;top:245px">WhatsApp Image<br>2024-03-01 at<br>4.03.12 PM (1)</div></div><div style="left:713px;top:127px;width:19px;height:308.500px;background:#f1f1f1"></div><div style="left:722.500px;top:147px;width:2px;height:139px;background:#8c8c8c;border-radius:1px"></div>
<div class="t" style="left:142px;top:450px">File name:</div><div style="left:208px;top:445px;width:286px;height:26px;background:#fff;border:1.500px solid #2a7fd0;border-radius:3px"></div><div style="left:213px;top:449px;width:1px;height:18px;background:#000"></div><svg style="left:478px;top:455px" width="10" height="7" viewBox="0 0 10 7"><path d="M1 1.200l4 4 4-4" fill="none" stroke="#555" stroke-width="1.200"/></svg><div style="left:508px;top:446px;width:204px;height:24px;background:#f9f9f9;border-bottom:1px solid #d8d8d8"></div><div class="t" style="left:512px;top:450px">Custom files</div><svg style="left:698px;top:455px" width="10" height="7" viewBox="0 0 10 7"><path d="M1 1.200l4 4 4-4" fill="none" stroke="#555" stroke-width="1.200"/></svg><div class="btn" style="left:362.500px;top:478px;width:130px">Upload from mobile</div><div class="btn" style="left:508px;top:477.500px;width:94.500px;height:27px;border:1.500px solid #2a7fd0;line-height:24.500px">Open</div><div class="btn" style="left:618px;top:478px;width:94.500px">Cancel</div><svg style="left:720px;top:506px" width="10" height="10" viewBox="0 0 10 10" fill="#aaa"><rect x="7" y="1" width="1.500" height="1.500"/><rect x="4" y="4" width="1.500" height="1.500"/><rect x="7" y="4" width="1.500" height="1.500"/><rect x="1" y="7" width="1.500" height="1.500"/><rect x="4" y="7" width="1.500" height="1.500"/><rect x="7" y="7" width="1.500" height="1.500"/></svg></div>
<svg class="abs" style="left:624px;top:249px" width="12" height="19" viewBox="0 0 12 19"><path d="M1 1v14l3.300-3.200 2.300 5.400 2-.9-2.300-5.300H11z" fill="#fff" stroke="#222" stroke-width="1"/></svg>
<svg class="abs" style="left:125px;top:506px" width="13" height="26" viewBox="0 0 13 26"><path d="M6.500 1l5 5.500h-3.600v13h3.600l-5 5.500-5-5.500h3.600v-13H1.500z" fill="#fff" stroke="#222" stroke-width="1"/></svg>

</body></html>
